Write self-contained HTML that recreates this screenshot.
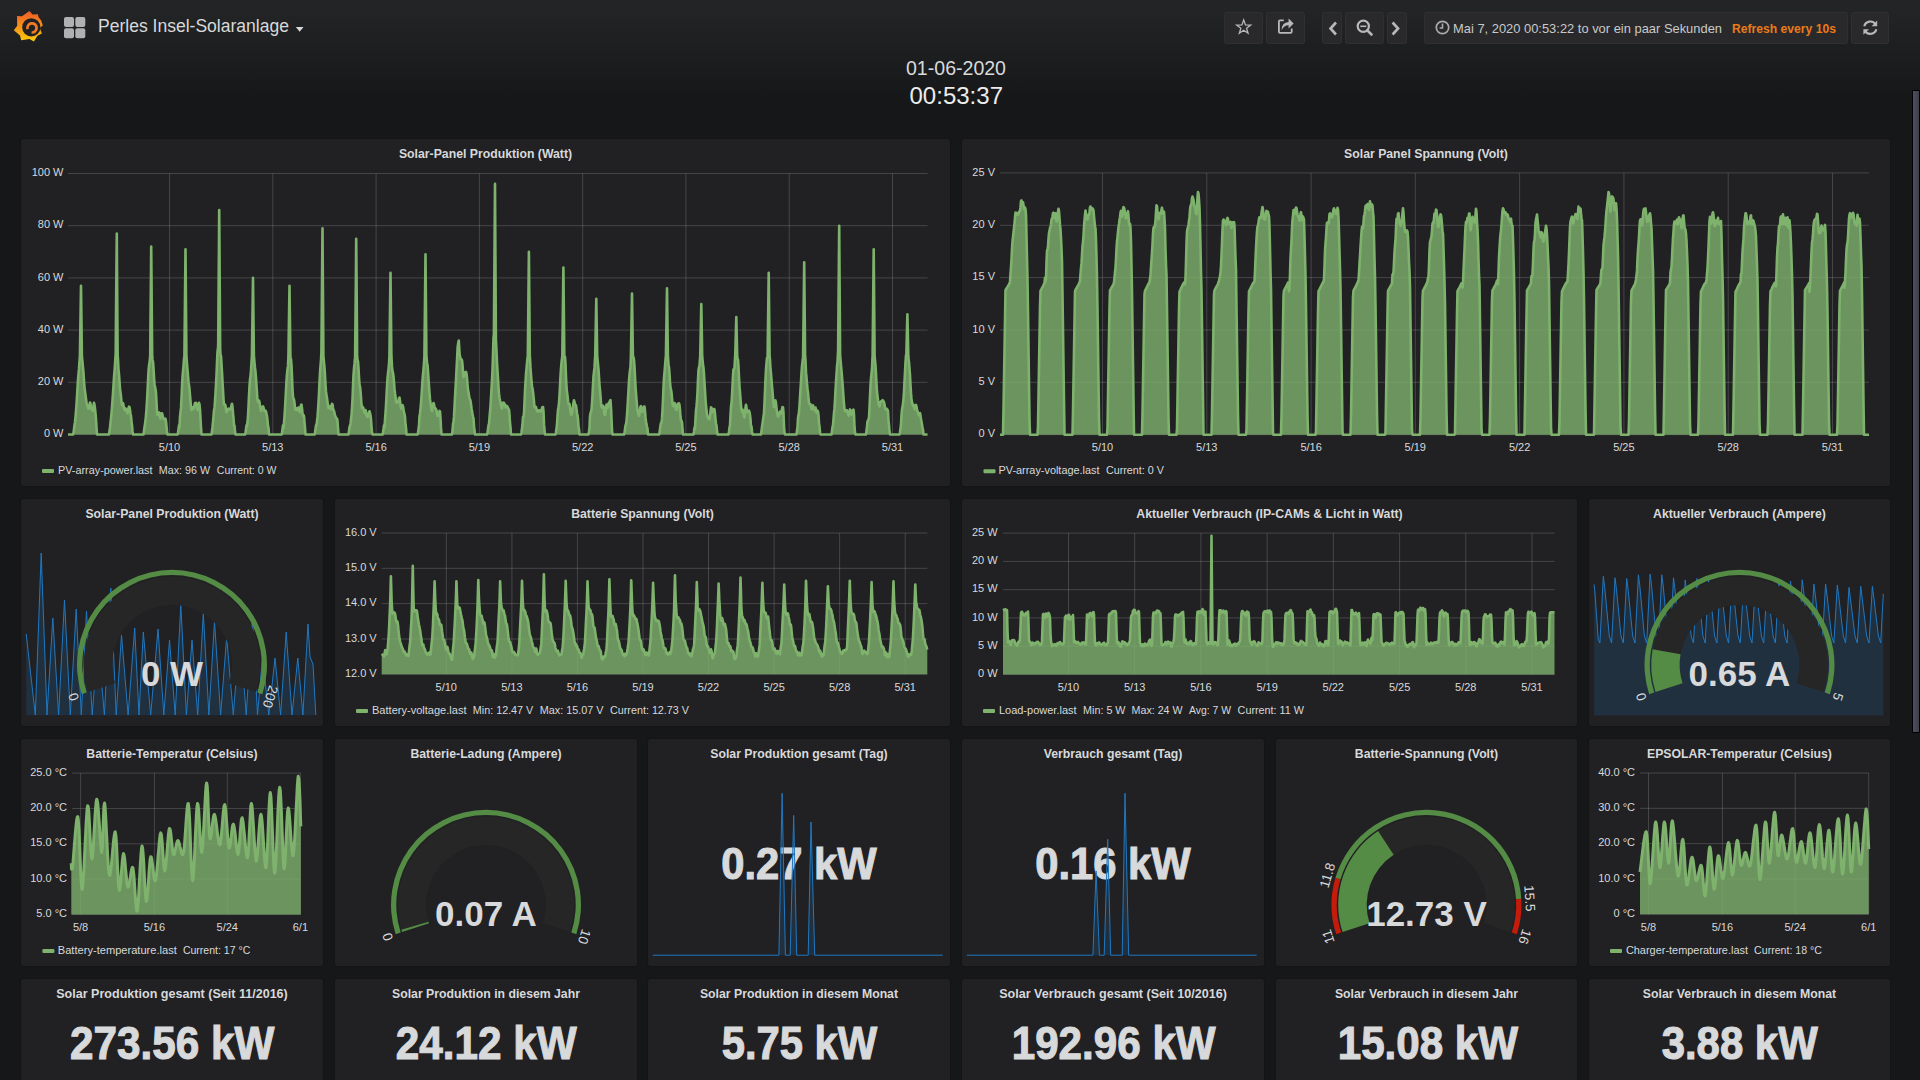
<!DOCTYPE html><html><head><meta charset="utf-8"><style>html,body{margin:0;padding:0}
body{width:1920px;height:1080px;overflow:hidden;position:relative;background:linear-gradient(180deg,#222426 10px,#161719 100px);font-family:"Liberation Sans",sans-serif;color:#d8d9da}
.p{position:absolute;box-sizing:border-box;background:#212124;border:1px solid #141414;border-radius:3px}
.ov{position:absolute;left:0;top:0}
.g{stroke:rgba(200,200,200,0.22);stroke-width:1}
.yl{fill:#d8d9da;font-size:11px;text-anchor:end;font-family:"Liberation Sans",sans-serif}
.xl{fill:#d8d9da;font-size:11px;text-anchor:middle;font-family:"Liberation Sans",sans-serif}
.lg{fill:#d8d9da;font-size:11px;font-family:"Liberation Sans",sans-serif}
.gl{fill:#d8d9da;font-size:13.5px;text-anchor:middle;dominant-baseline:central;font-family:"Liberation Sans",sans-serif}
.gv{fill:#d8d9da;font-size:35px;font-weight:bold;text-anchor:middle;font-family:"Liberation Sans",sans-serif}
.bv{fill:#d8d9da;stroke:#d8d9da;stroke-width:1.1px;font-weight:bold;font-family:"Liberation Sans",sans-serif}
.tt{fill:#d8d9da;font-size:12.25px;font-weight:bold;text-anchor:middle;font-family:"Liberation Sans",sans-serif}
</style></head><body><div class="p" style="left:20px;top:138px;width:931px;height:349px"></div>
<div class="p" style="left:961px;top:138px;width:930px;height:349px"></div>
<div class="p" style="left:20px;top:498px;width:304px;height:229px"></div>
<div class="p" style="left:334px;top:498px;width:617px;height:229px"></div>
<div class="p" style="left:961px;top:498px;width:617px;height:229px"></div>
<div class="p" style="left:1588px;top:498px;width:303px;height:229px"></div>
<div class="p" style="left:20px;top:738px;width:304px;height:229px"></div>
<div class="p" style="left:334px;top:738px;width:304px;height:229px"></div>
<div class="p" style="left:647px;top:738px;width:304px;height:229px"></div>
<div class="p" style="left:961px;top:738px;width:304px;height:229px"></div>
<div class="p" style="left:1275px;top:738px;width:303px;height:229px"></div>
<div class="p" style="left:1588px;top:738px;width:303px;height:229px"></div>
<div class="p" style="left:20px;top:978px;width:304px;height:229px"></div>
<div class="p" style="left:334px;top:978px;width:304px;height:229px"></div>
<div class="p" style="left:647px;top:978px;width:304px;height:229px"></div>
<div class="p" style="left:961px;top:978px;width:304px;height:229px"></div>
<div class="p" style="left:1275px;top:978px;width:303px;height:229px"></div>
<div class="p" style="left:1588px;top:978px;width:303px;height:229px"></div>
<svg class="ov" width="1920" height="1080" viewBox="0 0 1920 1080"><line x1="68" y1="173.5" x2="927.6" y2="173.5" class="g"/><line x1="68" y1="225.7" x2="927.6" y2="225.7" class="g"/><line x1="68" y1="277.9" x2="927.6" y2="277.9" class="g"/><line x1="68" y1="330.1" x2="927.6" y2="330.1" class="g"/><line x1="68" y1="382.3" x2="927.6" y2="382.3" class="g"/><line x1="68" y1="434.5" x2="927.6" y2="434.5" class="g"/><line x1="169.5" y1="173.5" x2="169.5" y2="434.5" class="g"/><line x1="272.8" y1="173.5" x2="272.8" y2="434.5" class="g"/><line x1="376.1" y1="173.5" x2="376.1" y2="434.5" class="g"/><line x1="479.4" y1="173.5" x2="479.4" y2="434.5" class="g"/><line x1="582.7" y1="173.5" x2="582.7" y2="434.5" class="g"/><line x1="685.9" y1="173.5" x2="685.9" y2="434.5" class="g"/><line x1="789.2" y1="173.5" x2="789.2" y2="434.5" class="g"/><line x1="892.5" y1="173.5" x2="892.5" y2="434.5" class="g"/><text x="63.5" y="176.1" class="yl">100 W</text><text x="63.5" y="228.3" class="yl">80 W</text><text x="63.5" y="280.5" class="yl">60 W</text><text x="63.5" y="332.7" class="yl">40 W</text><text x="63.5" y="384.9" class="yl">20 W</text><text x="63.5" y="437.1" class="yl">0 W</text><text x="169.5" y="451.3" class="xl">5/10</text><text x="272.8" y="451.3" class="xl">5/13</text><text x="376.1" y="451.3" class="xl">5/16</text><text x="479.4" y="451.3" class="xl">5/19</text><text x="582.7" y="451.3" class="xl">5/22</text><text x="685.9" y="451.3" class="xl">5/25</text><text x="789.2" y="451.3" class="xl">5/28</text><text x="892.5" y="451.3" class="xl">5/31</text><path d="M68 434.5 L68.5 434.5 L69 434.5 L69.5 434.5 L70 434.5 L70.5 434.5 L71 434.5 L71.5 434.5 L72 434.5 L72.5 434.5 L73 434.5 L73.5 433 L74 429.1 L74.5 425.3 L75 422.2 L75.5 416.8 L76 411.2 L76.5 404.3 L77 396.3 L77.5 388.2 L78 379.6 L78.5 374.2 L79 368.7 L79.5 361.2 L79.9 356.2 L80 349.8 L80.5 317.8 L81 285.7 L81.5 324.9 L81.9 356.2 L82 357.2 L82.5 362.2 L83 367.5 L83.5 373.2 L84 380.8 L84.5 387.3 L85 391.3 L85.5 395 L86 398.8 L86.5 402.5 L87 404.8 L87.5 406 L88 407.4 L88.5 408.7 L89 407.9 L89.5 405.1 L90 402.6 L90.5 403.8 L91 407.3 L91.5 409.1 L92 409.9 L92.5 410.9 L93 409.6 L93.5 405.7 L94 402.8 L94.5 404.8 L95 408.7 L95.5 413.5 L96 419.2 L96.5 427.3 L97 434.5 L97.5 434.5 L98 434.5 L98.5 434.5 L99 434.5 L99.5 434.5 L100 434.5 L100.5 434.5 L101 434.5 L101.5 434.5 L102 434.5 L102.5 434.5 L103 434.5 L103.5 434.5 L104 434.5 L104.5 434.5 L105 434.5 L105.5 434.5 L106 434.5 L106.5 434.5 L107 434.5 L107.5 434.5 L108 434.5 L108.5 434.5 L109 434.5 L109.5 431 L110 427.2 L110.5 422.6 L111 418.3 L111.5 413 L112 407.3 L112.5 400.1 L113 393.3 L113.5 385.3 L114 377.5 L114.5 371.4 L115 364.5 L115.5 356 L115.7 354.1 L116 315.7 L116.5 260.9 L116.8 233.5 L117 267.6 L117.5 335.8 L117.7 356.2 L118 359.7 L118.5 369.8 L119 374.3 L119.5 381.6 L120 388.6 L120.5 392.3 L121 396.4 L121.5 401.9 L122 405.1 L122.5 404.4 L123 403.1 L123.5 405.4 L124 408.4 L124.5 409.8 L125 409.4 L125.5 408.4 L126 409.1 L126.5 410.9 L127 412.7 L127.5 413.3 L128 411.5 L128.5 408.4 L129 406.7 L129.5 407.1 L130 409.9 L130.5 413.7 L131 416.1 L131.5 421.6 L132 425.2 L132.5 431.4 L133 434.5 L133.5 434.5 L134 434.5 L134.5 434.5 L135 434.5 L135.5 434.5 L136 434.5 L136.5 434.5 L137 434.5 L137.5 434.5 L138 434.5 L138.5 434.5 L139 434.5 L139.5 434.5 L140 434.5 L140.5 434.5 L141 434.5 L141.5 434.5 L142 434.5 L142.5 434.5 L143 434.5 L143.5 434.5 L144 431 L144.5 427.2 L145 424.1 L145.5 420.5 L146 415 L146.5 409.1 L147 400.7 L147.5 391.6 L148 381 L148.5 371.2 L149 365.7 L149.5 362.6 L150 357.9 L150.2 356.2 L150.5 321.3 L151 271.5 L151.2 246.6 L151.5 277 L152 337.9 L152.2 356.2 L152.5 359.7 L153 361.7 L153.5 368.1 L154 377.1 L154.5 384.2 L155 386.9 L155.5 389.2 L156 393.2 L156.5 402.2 L157 412.1 L157.5 414.9 L158 414 L158.5 412.9 L159 412.4 L159.5 413.9 L160 417.6 L160.5 418.7 L161 415.7 L161.5 413.3 L162 413.2 L162.5 414.9 L163 417.3 L163.5 418.7 L164 418.8 L164.5 419.6 L165 420 L165.5 418.6 L166 421.7 L166.5 426.6 L167 431.9 L167.5 434.5 L168 434.5 L168.5 434.5 L169 434.5 L169.5 434.5 L170 434.5 L170.5 434.5 L171 434.5 L171.5 434.5 L172 434.5 L172.5 434.5 L173 434.5 L173.5 434.5 L174 434.5 L174.5 434.5 L175 434.5 L175.5 434.5 L176 434.5 L176.5 434.5 L177 434.5 L177.5 434.5 L178 433 L178.5 429.1 L179 425.3 L179.5 427.5 L180 417 L180.5 412.2 L181 407.9 L181.5 398.3 L182 386.8 L182.5 377.1 L183 371.4 L183.5 365.9 L184 359 L184.4 356.2 L184.5 346.5 L185 297.8 L185.5 249.2 L186 308.6 L186.4 356.2 L186.5 357.2 L187 364.2 L187.5 369.8 L188 376.2 L188.5 382.2 L189 385.2 L189.5 388.8 L190 395.4 L190.5 401.4 L191 406.9 L191.5 410.1 L192 409.1 L192.5 407.3 L193 407.7 L193.5 408.8 L194 408 L194.5 405.3 L195 403.1 L195.5 402.8 L196 403 L196.5 403.9 L197 407 L197.5 410 L198 408.9 L198.5 404.5 L199 402.8 L199.5 404.3 L200 409.6 L200.5 418.4 L201 427.6 L201.5 434.5 L202 434.5 L202.5 434.5 L203 434.5 L203.5 434.5 L204 434.5 L204.5 434.5 L205 434.5 L205.5 434.5 L206 434.5 L206.5 434.5 L207 434.5 L207.5 434.5 L208 434.5 L208.5 434.5 L209 434.5 L209.5 434.5 L210 434.5 L210.5 434.5 L211 434.5 L211.5 434.5 L212 431 L212.5 427.2 L213 422.4 L213.5 416 L214 410.5 L214.5 407.7 L215 401.4 L215.5 393 L216 384.5 L216.5 374.8 L217 362.7 L217.5 351.9 L218 347.4 L218.2 344.7 L218.5 301.9 L219 240.6 L219.2 210 L219.5 248.7 L220 326 L220.2 349.2 L220.5 354.6 L221 356.1 L221.5 364.1 L222 372.3 L222.5 381.5 L223 390.4 L223.5 399.3 L224 404.6 L224.5 405 L225 404.4 L225.5 405.7 L226 410 L226.5 412.3 L227 411.5 L227.5 409.9 L228 408.9 L228.5 408.6 L229 408.8 L229.5 409.5 L230 409.6 L230.5 409.1 L231 407.7 L231.5 405.2 L232 403.8 L232.5 406.9 L233 413 L233.5 418.1 L234 425.5 L234.5 425.5 L235 431.5 L235.5 434.5 L236 434.5 L236.5 434.5 L237 434.5 L237.5 434.5 L238 434.5 L238.5 434.5 L239 434.5 L239.5 434.5 L240 434.5 L240.5 434.5 L241 434.5 L241.5 434.5 L242 434.5 L242.5 434.5 L243 434.5 L243.5 434.5 L244 434.5 L244.5 434.5 L245 434.5 L245.5 433 L246 429.1 L246.5 425.3 L247 426 L247.5 422.5 L248 416.2 L248.5 406.4 L249 395.5 L249.5 386.4 L250 379.5 L250.5 376.1 L251 370.4 L251.5 362.2 L251.9 356.2 L252 349.1 L252.5 313.5 L253 277.9 L253.5 321.4 L253.9 356.2 L254 357.2 L254.5 362.8 L255 367.9 L255.5 372 L256 377.8 L256.5 385.4 L257 393.3 L257.5 399.9 L258 401.8 L258.5 400.8 L259 400.5 L259.5 402.4 L260 405.8 L260.5 409.3 L261 410.9 L261.5 409.5 L262 407.7 L262.5 406.9 L263 406.3 L263.5 407.5 L264 410.1 L264.5 411.2 L265 410.9 L265.5 410.7 L266 411.5 L266.5 413.9 L267 416.1 L267.5 420.4 L268 426.2 L268.5 427.9 L269 434.5 L269.5 434.5 L270 434.5 L270.5 434.5 L271 434.5 L271.5 434.5 L272 434.5 L272.5 434.5 L273 434.5 L273.5 434.5 L274 434.5 L274.5 434.5 L275 434.5 L275.5 434.5 L276 434.5 L276.5 434.5 L277 434.5 L277.5 434.5 L278 434.5 L278.5 434.5 L279 434.5 L279.5 434.5 L280 434.5 L280.5 434.5 L281 434.5 L281.5 434.5 L282 433 L282.5 429.1 L283 425.3 L283.5 428.1 L284 422.8 L284.5 416.2 L285 408.3 L285.5 399.3 L286 390 L286.5 380.3 L287 373.8 L287.5 369.2 L288 365.9 L288.4 356.2 L288.5 349.8 L289 317.8 L289.5 285.7 L290 324.9 L290.4 356.2 L290.5 357.2 L291 359.3 L291.5 365.3 L292 376.9 L292.5 389.5 L293 396.8 L293.5 398.6 L294 399.6 L294.5 402.8 L295 407.8 L295.5 409.7 L296 408.4 L296.5 408.3 L297 410.1 L297.5 409.9 L298 408.1 L298.5 407.5 L299 409.1 L299.5 411.4 L300 412 L300.5 409 L301 404.9 L301.5 404.6 L302 408.5 L302.5 412.9 L303 415.7 L303.5 415.1 L304 416.2 L304.5 422.3 L305 427.6 L305.5 434.5 L306 434.5 L306.5 434.5 L307 434.5 L307.5 434.5 L308 434.5 L308.5 434.5 L309 434.5 L309.5 434.5 L310 434.5 L310.5 434.5 L311 434.5 L311.5 434.5 L312 434.5 L312.5 434.5 L313 434.5 L313.5 434.5 L314 434.5 L314.5 434.5 L315 433 L315.5 429.1 L316 425.3 L316.5 425.5 L317 421.4 L317.5 416.9 L318 410.6 L318.5 402.4 L319 393.4 L319.5 382.3 L320 372.9 L320.5 365.9 L321 360.1 L321.4 352 L321.5 340.8 L322 284.5 L322.5 228.3 L323 299.3 L323.4 356.1 L323.5 357.2 L324 362.6 L324.5 367.9 L325 375.5 L325.5 384.6 L326 391.9 L326.5 395.1 L327 397.9 L327.5 401.8 L328 406.2 L328.5 408.2 L329 407.7 L329.5 406.2 L330 406.4 L330.5 408.5 L331 409.4 L331.5 406.7 L332 403.8 L332.5 404.3 L333 407.8 L333.5 410.2 L334 410.9 L334.5 413.1 L335 415.7 L335.5 416.3 L336 418 L336.5 418.6 L337 418.5 L337.5 421.2 L338 428.3 L338.5 434.5 L339 434.5 L339.5 434.5 L340 434.5 L340.5 434.5 L341 434.5 L341.5 434.5 L342 434.5 L342.5 434.5 L343 434.5 L343.5 434.5 L344 434.5 L344.5 434.5 L345 434.5 L345.5 434.5 L346 434.5 L346.5 434.5 L347 434.5 L347.5 434.5 L348 434.5 L348.5 434.5 L349 431 L349.5 427.2 L350 425.8 L350.5 423.7 L351 419.4 L351.5 414.9 L352 408.2 L352.5 399.3 L353 386.8 L353.5 374.9 L354 368.5 L354.5 363.9 L355 357.9 L355.1 356.2 L355.5 318.8 L356 265.4 L356.2 238.8 L356.5 271.4 L357 336.6 L357.1 356.2 L357.5 359.7 L358 361.5 L358.5 368.1 L359 377.4 L359.5 384.5 L360 386.6 L360.5 390.6 L361 397.7 L361.5 405 L362 408.2 L362.5 407 L363 407.2 L363.5 409 L364 411.8 L364.5 412.9 L365 411.4 L365.5 410 L366 411.7 L366.5 415.4 L367 416.7 L367.5 416.3 L368 416.6 L368.5 415.7 L369 412.5 L369.5 411.3 L370 413.2 L370.5 415.2 L371 419.5 L371.5 426.8 L372 431.9 L372.5 434.5 L373 434.5 L373.5 434.5 L374 434.5 L374.5 434.5 L375 434.5 L375.5 434.5 L376 434.5 L376.5 434.5 L377 434.5 L377.5 434.5 L378 434.5 L378.5 434.5 L379 434.5 L379.5 434.5 L380 434.5 L380.5 434.5 L381 434.5 L381.5 434.5 L382 434.5 L382.5 434.5 L383 433 L383.5 429.1 L384 425.3 L384.5 427.6 L385 419.8 L385.5 413.2 L386 405.6 L386.5 395.4 L387 386.2 L387.5 378.2 L388 373.3 L388.5 369.2 L389 364.1 L389.4 356.2 L389.5 348.6 L390 310.6 L390.5 272.7 L391 319.1 L391.4 356.2 L391.5 357.2 L392 366.9 L392.5 371.2 L393 372.9 L393.5 376.1 L394 382.6 L394.5 388.9 L395 393.2 L395.5 396.8 L396 401.1 L396.5 402.7 L397 401.7 L397.5 401.3 L398 401.9 L398.5 401 L399 398.2 L399.5 397.6 L400 400.7 L400.5 405.6 L401 408.7 L401.5 408.1 L402 406.2 L402.5 405.2 L403 406.3 L403.5 409.4 L404 412.8 L404.5 413.9 L405 417.1 L405.5 424.3 L406 427.6 L406.5 434.5 L407 434.5 L407.5 434.5 L408 434.5 L408.5 434.5 L409 434.5 L409.5 434.5 L410 434.5 L410.5 434.5 L411 434.5 L411.5 434.5 L412 434.5 L412.5 434.5 L413 434.5 L413.5 434.5 L414 434.5 L414.5 434.5 L415 434.5 L415.5 434.5 L416 434.5 L416.5 434.5 L417 434.5 L417.5 434.5 L418 433 L418.5 429.1 L419 425.3 L419.5 416.3 L420 413.4 L420.5 408.6 L421 403.2 L421.5 396.2 L422 388.4 L422.5 380.1 L423 374.4 L423.5 369.4 L424 363.2 L424.4 356.2 L424.5 346.9 L425 300.7 L425.5 254.4 L426 311 L426.4 356.2 L426.5 357.2 L427 362.4 L427.5 365.2 L428 371.1 L428.5 379 L429 386.3 L429.5 393.1 L430 399.2 L430.5 403 L431 406.7 L431.5 410.1 L432 411 L432.5 408.3 L433 404.8 L433.5 403 L434 404.4 L434.5 407 L435 408 L435.5 408.5 L436 409.2 L436.5 410.5 L437 413.5 L437.5 416 L438 416 L438.5 414.7 L439 413.3 L439.5 410.9 L440 411.4 L440.5 418.1 L441 427.9 L441.5 434.5 L442 434.5 L442.5 434.5 L443 434.5 L443.5 434.5 L444 434.5 L444.5 434.5 L445 434.5 L445.5 434.5 L446 434.5 L446.5 434.5 L447 434.5 L447.5 434.5 L448 434.5 L448.5 434.5 L449 434.5 L449.5 434.5 L450 434.5 L450.5 434.5 L451 434.5 L451.5 434.5 L452 434.5 L452.5 431 L453 424.1 L453.5 422.2 L454 416.4 L454.5 406.8 L455 397.2 L455.5 388.7 L456 379.7 L456.5 369.9 L457 360.4 L457.5 350.3 L457.6 347.6 L458 344.5 L458.5 341.8 L458.8 340.5 L459 344.5 L459.5 352.3 L459.6 354.6 L460 355.9 L460.5 359 L461 358.8 L461.5 359.4 L462 360.3 L462.5 364.6 L463 372.1 L463.5 377.1 L464 376.1 L464.5 372.8 L465 372.5 L465.5 372.2 L466 371.9 L466.5 373.6 L467 378 L467.5 384.9 L468 389.8 L468.5 392.2 L469 395.6 L469.5 398.4 L470 399.5 L470.5 400.7 L471 404.2 L471.5 408.2 L472 411.2 L472.5 414 L473 416.9 L473.5 418.4 L474 426.2 L474.5 430.1 L475 434.5 L475.5 434.5 L476 434.5 L476.5 434.5 L477 434.5 L477.5 434.5 L478 434.5 L478.5 434.5 L479 434.5 L479.5 434.5 L480 434.5 L480.5 434.5 L481 434.5 L481.5 434.5 L482 434.5 L482.5 434.5 L483 434.5 L483.5 434.5 L484 434.5 L484.5 434.5 L485 434.5 L485.5 434.5 L486 434.5 L486.5 434.5 L487 434.5 L487.5 433 L488 429.1 L488.5 425.3 L489 424 L489.5 417.6 L490 411.8 L490.5 406 L491 397.5 L491.5 388.7 L492 380.7 L492.5 369.5 L493 354.9 L493.5 337.6 L493.9 334.3 L494 320.6 L494.5 252.3 L495 183.9 L495.5 270.2 L495.9 339.3 L496 341.6 L496.5 351.6 L497 362.6 L497.5 370.7 L498 378.7 L498.5 387.4 L499 393.7 L499.5 397.9 L500 400.3 L500.5 402.3 L501 404.9 L501.5 408.1 L502 408.6 L502.5 405.4 L503 402.8 L503.5 402.6 L504 403 L504.5 403.9 L505 406.1 L505.5 407.4 L506 406.4 L506.5 405.7 L507 406.2 L507.5 406.8 L508 407.9 L508.5 409.2 L509 409.6 L509.5 414.4 L510 423 L510.5 427.4 L511 434.5 L511.5 434.5 L512 434.5 L512.5 434.5 L513 434.5 L513.5 434.5 L514 434.5 L514.5 434.5 L515 434.5 L515.5 434.5 L516 434.5 L516.5 434.5 L517 434.5 L517.5 434.5 L518 434.5 L518.5 434.5 L519 434.5 L519.5 434.5 L520 434.5 L520.5 434.5 L521 434.5 L521.5 432.2 L522 428.4 L522.5 424.5 L523 417.1 L523.5 417.3 L524 413.2 L524.5 402.4 L525 390.9 L525.5 382.1 L526 374.2 L526.5 368.6 L527 362.8 L527.5 358 L527.8 356.2 L528 337.2 L528.5 289.8 L528.9 251.8 L529 263.4 L529.5 321.4 L529.8 356.2 L530 358.2 L530.5 367.9 L531 374.6 L531.5 381.5 L532 386.2 L532.5 388.5 L533 391.6 L533.5 396.4 L534 401.7 L534.5 407.2 L535 407.5 L535.5 406.7 L536 407 L536.5 409.2 L537 410.9 L537.5 411.5 L538 411.6 L538.5 411.2 L539 410.2 L539.5 410.2 L540 411.2 L540.5 411.6 L541 410.9 L541.5 409.7 L542 408.1 L542.5 407 L543 407 L543.5 411.4 L544 424.4 L544.5 430 L545 434.5 L545.5 434.5 L546 434.5 L546.5 434.5 L547 434.5 L547.5 434.5 L548 434.5 L548.5 434.5 L549 434.5 L549.5 434.5 L550 434.5 L550.5 434.5 L551 434.5 L551.5 434.5 L552 434.5 L552.5 434.5 L553 434.5 L553.5 434.5 L554 434.5 L554.5 434.5 L555 434.5 L555.5 434.5 L556 432.2 L556.5 428.4 L557 424.5 L557.5 416.2 L558 409.9 L558.5 406.9 L559 402.8 L559.5 395.4 L560 385.8 L560.5 375.7 L561 368.6 L561.5 362.5 L562 358.5 L562.3 356.2 L562.5 340.1 L563 299.7 L563.4 267.5 L563.5 277.3 L564 326.6 L564.3 356.2 L564.5 358.2 L565 356.7 L565.5 363.8 L566 376.8 L566.5 387.5 L567 392.3 L567.5 395.8 L568 401.2 L568.5 403.7 L569 403.7 L569.5 403.9 L570 407.6 L570.5 411.9 L571 414.3 L571.5 414.7 L572 413 L572.5 409.6 L573 406.1 L573.5 402.5 L574 400.3 L574.5 401.9 L575 404.6 L575.5 404.7 L576 405.5 L576.5 409.1 L577 413.2 L577.5 415.2 L578 419.3 L578.5 426.5 L579 429.1 L579.5 434.5 L580 434.5 L580.5 434.5 L581 434.5 L581.5 434.5 L582 434.5 L582.5 434.5 L583 434.5 L583.5 434.5 L584 434.5 L584.5 434.5 L585 434.5 L585.5 434.5 L586 434.5 L586.5 434.5 L587 434.5 L587.5 434.5 L588 434.5 L588.5 434.5 L589 431.4 L589.5 427.6 L590 416.2 L590.5 412.9 L591 411.7 L591.5 409.9 L592 403.5 L592.5 394.8 L593 385.1 L593.5 376.3 L594 371.7 L594.5 367.9 L595 358.5 L595.2 356.2 L595.5 340.5 L596 314.4 L596.3 298.8 L596.5 311.5 L597 343.4 L597.2 356.2 L597.5 359.2 L598 364.3 L598.5 369.3 L599 377.4 L599.5 385.1 L600 390 L600.5 396 L601 403.2 L601.5 406.8 L602 407.7 L602.5 406.7 L603 405.7 L603.5 406.4 L604 410.3 L604.5 414.2 L605 415.1 L605.5 412.7 L606 408.1 L606.5 404.6 L607 405.5 L607.5 408 L608 406.8 L608.5 403.6 L609 402.5 L609.5 402.4 L610 400.8 L610.5 400.1 L611 407.7 L611.5 418.2 L612 430.3 L612.5 434.5 L613 434.5 L613.5 434.5 L614 434.5 L614.5 434.5 L615 434.5 L615.5 434.5 L616 434.5 L616.5 434.5 L617 434.5 L617.5 434.5 L618 434.5 L618.5 434.5 L619 434.5 L619.5 434.5 L620 434.5 L620.5 434.5 L621 434.5 L621.5 434.5 L622 434.5 L622.5 434.5 L623 434.5 L623.5 434.5 L624 434.5 L624.5 433 L625 429.1 L625.5 425.3 L626 424.6 L626.5 420.4 L627 415.1 L627.5 407.3 L628 398.6 L628.5 390.2 L629 380.8 L629.5 374.4 L630 370.4 L630.5 366.4 L630.9 356.2 L631 350.5 L631.5 322 L632 293.6 L632.5 328.4 L632.9 356.2 L633 357.2 L633.5 357.3 L634 360.2 L634.5 366.6 L635 376.6 L635.5 386.5 L636 393.3 L636.5 399.5 L637 405.6 L637.5 410.6 L638 412.4 L638.5 414.4 L639 415.8 L639.5 414.2 L640 410 L640.5 406.5 L641 406.2 L641.5 408.6 L642 411.1 L642.5 411.8 L643 410.7 L643.5 408.8 L644 406.5 L644.5 406.5 L645 410.8 L645.5 417.4 L646 421.5 L646.5 424.3 L647 426.8 L647.5 428.7 L648 434.5 L648.5 434.5 L649 434.5 L649.5 434.5 L650 434.5 L650.5 434.5 L651 434.5 L651.5 434.5 L652 434.5 L652.5 434.5 L653 434.5 L653.5 434.5 L654 434.5 L654.5 434.5 L655 434.5 L655.5 434.5 L656 434.5 L656.5 434.5 L657 434.5 L657.5 434.5 L658 434.5 L658.5 434.5 L659 434.5 L659.5 433 L660 429.1 L660.5 425.3 L661 422.9 L661.5 422.7 L662 418.4 L662.5 410.1 L663 399.1 L663.5 387.4 L664 377.5 L664.5 372.3 L665 366.4 L665.5 359.5 L665.9 356.2 L666 350 L666.5 319.2 L667 288.3 L667.5 326 L667.9 356.2 L668 357.2 L668.5 364.2 L669 367.6 L669.5 373.5 L670 381.9 L670.5 387.7 L671 389.6 L671.5 392.5 L672 398 L672.5 403.7 L673 406 L673.5 406.2 L674 404.7 L674.5 403.1 L675 403.8 L675.5 406.8 L676 409.8 L676.5 410 L677 407.6 L677.5 405 L678 403.6 L678.5 403.4 L679 403.3 L679.5 405.1 L680 410.1 L680.5 417 L681 420.2 L681.5 420.8 L682 422.7 L682.5 428.6 L683 434.5 L683.5 434.5 L684 434.5 L684.5 434.5 L685 434.5 L685.5 434.5 L686 434.5 L686.5 434.5 L687 434.5 L687.5 434.5 L688 434.5 L688.5 434.5 L689 434.5 L689.5 434.5 L690 434.5 L690.5 434.5 L691 434.5 L691.5 434.5 L692 434.5 L692.5 434.5 L693 434.5 L693.5 434.5 L694 431.4 L694.5 427.6 L695 428.6 L695.5 418.9 L696 410.4 L696.5 406.2 L697 400.7 L697.5 391.8 L698 379.7 L698.5 370.1 L699 367.4 L699.5 365.5 L700 358.5 L700.2 356.2 L700.5 342 L701 318.2 L701.3 304 L701.5 315.6 L702 344.6 L702.2 356.2 L702.5 359.2 L703 365.1 L703.5 367.7 L704 374.3 L704.5 383.1 L705 391.2 L705.5 399.3 L706 405.6 L706.5 410.1 L707 414.6 L707.5 416.3 L708 417.2 L708.5 417.9 L709 419.1 L709.5 419.3 L710 416.6 L710.5 411.6 L711 407.4 L711.5 407.6 L712 410.9 L712.5 412.1 L713 410.7 L713.5 409.9 L714 409 L714.5 409.5 L715 414 L715.5 419.1 L716 424.2 L716.5 425.3 L717 431 L717.5 434.5 L718 434.5 L718.5 434.5 L719 434.5 L719.5 434.5 L720 434.5 L720.5 434.5 L721 434.5 L721.5 434.5 L722 434.5 L722.5 434.5 L723 434.5 L723.5 434.5 L724 434.5 L724.5 434.5 L725 434.5 L725.5 434.5 L726 434.5 L726.5 434.5 L727 434.5 L727.5 434.5 L728 434.5 L728.5 434.5 L729 431.4 L729.5 427.6 L730 425.4 L730.5 415 L731 406.6 L731.5 402.8 L732 396.1 L732.5 385.8 L733 375.4 L733.5 369.3 L734 368.8 L734.5 368 L735 358.5 L735.2 356.2 L735.5 345.5 L736 327.7 L736.3 317.1 L736.5 325.8 L737 347.5 L737.2 356.2 L737.5 359.2 L738 359.3 L738.5 366.8 L739 377.4 L739.5 386.5 L740 392.5 L740.5 399.1 L741 405.3 L741.5 410 L742 411.4 L742.5 409.6 L743 411.2 L743.5 414.1 L744 416.7 L744.5 417.5 L745 413.9 L745.5 407.5 L746 404.7 L746.5 407.6 L747 411.1 L747.5 412.1 L748 411.6 L748.5 410.9 L749 410.7 L749.5 411.9 L750 414.9 L750.5 419.2 L751 426.5 L751.5 426.5 L752 431.5 L752.5 434.5 L753 434.5 L753.5 434.5 L754 434.5 L754.5 434.5 L755 434.5 L755.5 434.5 L756 434.5 L756.5 434.5 L757 434.5 L757.5 434.5 L758 434.5 L758.5 434.5 L759 434.5 L759.5 434.5 L760 434.5 L760.5 434.5 L761 434.5 L761.5 430.7 L762 426.8 L762.5 423.6 L763 419.9 L763.5 416.5 L764 412.8 L764.5 402.8 L765 390.8 L765.5 379.1 L766 369.7 L766.5 362.9 L767 357.8 L767.5 357.4 L767.6 356.2 L768 325.8 L768.5 287.9 L768.7 272.7 L769 300.5 L769.5 346.9 L769.6 356.2 L770 360.2 L770.5 369 L771 373.7 L771.5 380 L772 386.2 L772.5 391.3 L773 398.4 L773.5 404.1 L774 407.2 L774.5 406.6 L775 402.4 L775.5 400.4 L776 403.2 L776.5 408.2 L777 412.3 L777.5 415.2 L778 416.6 L778.5 416.4 L779 414.7 L779.5 412.6 L780 411.5 L780.5 412.4 L781 413.4 L781.5 411.9 L782 408.9 L782.5 407.1 L783 407.3 L783.5 413.2 L784 426.8 L784.5 432.3 L785 434.5 L785.5 434.5 L786 434.5 L786.5 434.5 L787 434.5 L787.5 434.5 L788 434.5 L788.5 434.5 L789 434.5 L789.5 434.5 L790 434.5 L790.5 434.5 L791 434.5 L791.5 434.5 L792 434.5 L792.5 434.5 L793 434.5 L793.5 434.5 L794 434.5 L794.5 434.5 L795 434.5 L795.5 434.5 L796 434.5 L796.5 434.5 L797 430.7 L797.5 426.8 L798 418 L798.5 415.6 L799 411.6 L799.5 406 L800 397.1 L800.5 389.3 L801 381.7 L801.5 373.2 L802 366.2 L802.5 361.8 L803 357.4 L803.1 356.2 L803.5 322 L804 279.3 L804.2 262.2 L804.5 293.6 L805 345.8 L805.1 356.2 L805.5 360.2 L806 372.4 L806.5 377.6 L807 383.5 L807.5 388.9 L808 392.4 L808.5 398.5 L809 402.8 L809.5 403.9 L810 404.1 L810.5 404.2 L811 407 L811.5 409.3 L812 408.1 L812.5 405.5 L813 405.4 L813.5 407.6 L814 409.6 L814.5 410.2 L815 408.7 L815.5 407.5 L816 409.8 L816.5 412.8 L817 412.3 L817.5 410.7 L818 411.6 L818.5 415.1 L819 423.3 L819.5 426.4 L820 432.2 L820.5 434.5 L821 434.5 L821.5 434.5 L822 434.5 L822.5 434.5 L823 434.5 L823.5 434.5 L824 434.5 L824.5 434.5 L825 434.5 L825.5 434.5 L826 434.5 L826.5 434.5 L827 434.5 L827.5 434.5 L828 434.5 L828.5 434.5 L829 434.5 L829.5 434.5 L830 434.5 L830.5 434.5 L831 434.5 L831.5 434.5 L832 430.7 L832.5 426.8 L833 425.3 L833.5 419.1 L834 412.7 L834.5 408.4 L835 399.8 L835.5 390.3 L836 382 L836.5 374.2 L837 366.6 L837.5 361.4 L838 352.4 L838.1 351 L838.5 305.4 L839 248.5 L839.2 225.7 L839.5 268.9 L840 340.8 L840.1 355.2 L840.5 359.5 L841 365.3 L841.5 370.8 L842 376.9 L842.5 383.4 L843 389.9 L843.5 397.7 L844 404.2 L844.5 409.2 L845 410.8 L845.5 410.3 L846 411.2 L846.5 410.9 L847 410.2 L847.5 411.3 L848 413.7 L848.5 415.7 L849 415.3 L849.5 411.9 L850 409.4 L850.5 411.2 L851 414.2 L851.5 414.7 L852 413 L852.5 411.1 L853 409.9 L853.5 409.6 L854 414.9 L854.5 427.2 L855 432.4 L855.5 434.5 L856 434.5 L856.5 434.5 L857 434.5 L857.5 434.5 L858 434.5 L858.5 434.5 L859 434.5 L859.5 434.5 L860 434.5 L860.5 434.5 L861 434.5 L861.5 434.5 L862 434.5 L862.5 434.5 L863 434.5 L863.5 434.5 L864 434.5 L864.5 434.5 L865 434.5 L865.5 434.5 L866 434.5 L866.5 430.7 L867 426.8 L867.5 421.5 L868 420.4 L868.5 419.7 L869 417.3 L869.5 407.7 L870 396.3 L870.5 385.9 L871 378.1 L871.5 373.4 L872 368.7 L872.5 357.4 L872.6 356.2 L873 317.3 L873.5 268.6 L873.7 249.2 L874 284.9 L874.5 344.3 L874.6 356.2 L875 360.2 L875.5 365.3 L876 373.9 L876.5 384 L877 392 L877.5 396.2 L878 400.2 L878.5 403.5 L879 405.5 L879.5 406.5 L880 404.3 L880.5 402 L881 401.2 L881.5 401.2 L882 400.9 L882.5 400.2 L883 400.5 L883.5 401.4 L884 402.4 L884.5 404.5 L885 407.5 L885.5 409.3 L886 409 L886.5 408.6 L887 409.3 L887.5 409.7 L888 411.2 L888.5 420.6 L889 425 L889.5 431.8 L890 434.5 L890.5 434.5 L891 434.5 L891.5 434.5 L892 434.5 L892.5 434.5 L893 434.5 L893.5 434.5 L894 434.5 L894.5 434.5 L895 434.5 L895.5 434.5 L896 434.5 L896.5 434.5 L897 434.5 L897.5 434.5 L898 434.5 L898.5 434.5 L899 434.5 L899.5 434.5 L900 432.2 L900.5 428.4 L901 424.5 L901.5 414.8 L902 409.5 L902.5 407.1 L903 404 L903.5 398.8 L904 391.8 L904.5 381.6 L905 372 L905.5 362.5 L906 355 L906.3 356.2 L906.5 348.6 L907 329.6 L907.4 314.4 L907.5 319.1 L908 342.3 L908.3 356.2 L908.5 358.2 L909 362.7 L909.5 368.4 L910 375.4 L910.5 384.8 L911 393.4 L911.5 398.9 L912 402.4 L912.5 404.2 L913 405.7 L913.5 404.9 L914 407 L914.5 409.2 L915 408 L915.5 405.5 L916 404.9 L916.5 406.7 L917 409.7 L917.5 411.3 L918 412.3 L918.5 414.6 L919 415.3 L919.5 413.4 L920 413.1 L920.5 415.6 L921 419.4 L921.5 421.7 L922 424.5 L922.5 428.3 L923 429.7 L923.5 434.5 L924 434.5 L924.5 434.5 L925 434.5 L925.5 434.5 L926 434.5 L926.5 434.5 L927 434.5 L927.5 434.5 L927.5 434.5 L68 434.5 Z" fill="#7eb26d" fill-opacity="0.8"/><path d="M68 434.5 L68.5 434.5 L69 434.5 L69.5 434.5 L70 434.5 L70.5 434.5 L71 434.5 L71.5 434.5 L72 434.5 L72.5 434.5 L73 434.5 L73.5 433 L74 429.1 L74.5 425.3 L75 422.2 L75.5 416.8 L76 411.2 L76.5 404.3 L77 396.3 L77.5 388.2 L78 379.6 L78.5 374.2 L79 368.7 L79.5 361.2 L79.9 356.2 L80 349.8 L80.5 317.8 L81 285.7 L81.5 324.9 L81.9 356.2 L82 357.2 L82.5 362.2 L83 367.5 L83.5 373.2 L84 380.8 L84.5 387.3 L85 391.3 L85.5 395 L86 398.8 L86.5 402.5 L87 404.8 L87.5 406 L88 407.4 L88.5 408.7 L89 407.9 L89.5 405.1 L90 402.6 L90.5 403.8 L91 407.3 L91.5 409.1 L92 409.9 L92.5 410.9 L93 409.6 L93.5 405.7 L94 402.8 L94.5 404.8 L95 408.7 L95.5 413.5 L96 419.2 L96.5 427.3 L97 434.5 L97.5 434.5 L98 434.5 L98.5 434.5 L99 434.5 L99.5 434.5 L100 434.5 L100.5 434.5 L101 434.5 L101.5 434.5 L102 434.5 L102.5 434.5 L103 434.5 L103.5 434.5 L104 434.5 L104.5 434.5 L105 434.5 L105.5 434.5 L106 434.5 L106.5 434.5 L107 434.5 L107.5 434.5 L108 434.5 L108.5 434.5 L109 434.5 L109.5 431 L110 427.2 L110.5 422.6 L111 418.3 L111.5 413 L112 407.3 L112.5 400.1 L113 393.3 L113.5 385.3 L114 377.5 L114.5 371.4 L115 364.5 L115.5 356 L115.7 354.1 L116 315.7 L116.5 260.9 L116.8 233.5 L117 267.6 L117.5 335.8 L117.7 356.2 L118 359.7 L118.5 369.8 L119 374.3 L119.5 381.6 L120 388.6 L120.5 392.3 L121 396.4 L121.5 401.9 L122 405.1 L122.5 404.4 L123 403.1 L123.5 405.4 L124 408.4 L124.5 409.8 L125 409.4 L125.5 408.4 L126 409.1 L126.5 410.9 L127 412.7 L127.5 413.3 L128 411.5 L128.5 408.4 L129 406.7 L129.5 407.1 L130 409.9 L130.5 413.7 L131 416.1 L131.5 421.6 L132 425.2 L132.5 431.4 L133 434.5 L133.5 434.5 L134 434.5 L134.5 434.5 L135 434.5 L135.5 434.5 L136 434.5 L136.5 434.5 L137 434.5 L137.5 434.5 L138 434.5 L138.5 434.5 L139 434.5 L139.5 434.5 L140 434.5 L140.5 434.5 L141 434.5 L141.5 434.5 L142 434.5 L142.5 434.5 L143 434.5 L143.5 434.5 L144 431 L144.5 427.2 L145 424.1 L145.5 420.5 L146 415 L146.5 409.1 L147 400.7 L147.5 391.6 L148 381 L148.5 371.2 L149 365.7 L149.5 362.6 L150 357.9 L150.2 356.2 L150.5 321.3 L151 271.5 L151.2 246.6 L151.5 277 L152 337.9 L152.2 356.2 L152.5 359.7 L153 361.7 L153.5 368.1 L154 377.1 L154.5 384.2 L155 386.9 L155.5 389.2 L156 393.2 L156.5 402.2 L157 412.1 L157.5 414.9 L158 414 L158.5 412.9 L159 412.4 L159.5 413.9 L160 417.6 L160.5 418.7 L161 415.7 L161.5 413.3 L162 413.2 L162.5 414.9 L163 417.3 L163.5 418.7 L164 418.8 L164.5 419.6 L165 420 L165.5 418.6 L166 421.7 L166.5 426.6 L167 431.9 L167.5 434.5 L168 434.5 L168.5 434.5 L169 434.5 L169.5 434.5 L170 434.5 L170.5 434.5 L171 434.5 L171.5 434.5 L172 434.5 L172.5 434.5 L173 434.5 L173.5 434.5 L174 434.5 L174.5 434.5 L175 434.5 L175.5 434.5 L176 434.5 L176.5 434.5 L177 434.5 L177.5 434.5 L178 433 L178.5 429.1 L179 425.3 L179.5 427.5 L180 417 L180.5 412.2 L181 407.9 L181.5 398.3 L182 386.8 L182.5 377.1 L183 371.4 L183.5 365.9 L184 359 L184.4 356.2 L184.5 346.5 L185 297.8 L185.5 249.2 L186 308.6 L186.4 356.2 L186.5 357.2 L187 364.2 L187.5 369.8 L188 376.2 L188.5 382.2 L189 385.2 L189.5 388.8 L190 395.4 L190.5 401.4 L191 406.9 L191.5 410.1 L192 409.1 L192.5 407.3 L193 407.7 L193.5 408.8 L194 408 L194.5 405.3 L195 403.1 L195.5 402.8 L196 403 L196.5 403.9 L197 407 L197.5 410 L198 408.9 L198.5 404.5 L199 402.8 L199.5 404.3 L200 409.6 L200.5 418.4 L201 427.6 L201.5 434.5 L202 434.5 L202.5 434.5 L203 434.5 L203.5 434.5 L204 434.5 L204.5 434.5 L205 434.5 L205.5 434.5 L206 434.5 L206.5 434.5 L207 434.5 L207.5 434.5 L208 434.5 L208.5 434.5 L209 434.5 L209.5 434.5 L210 434.5 L210.5 434.5 L211 434.5 L211.5 434.5 L212 431 L212.5 427.2 L213 422.4 L213.5 416 L214 410.5 L214.5 407.7 L215 401.4 L215.5 393 L216 384.5 L216.5 374.8 L217 362.7 L217.5 351.9 L218 347.4 L218.2 344.7 L218.5 301.9 L219 240.6 L219.2 210 L219.5 248.7 L220 326 L220.2 349.2 L220.5 354.6 L221 356.1 L221.5 364.1 L222 372.3 L222.5 381.5 L223 390.4 L223.5 399.3 L224 404.6 L224.5 405 L225 404.4 L225.5 405.7 L226 410 L226.5 412.3 L227 411.5 L227.5 409.9 L228 408.9 L228.5 408.6 L229 408.8 L229.5 409.5 L230 409.6 L230.5 409.1 L231 407.7 L231.5 405.2 L232 403.8 L232.5 406.9 L233 413 L233.5 418.1 L234 425.5 L234.5 425.5 L235 431.5 L235.5 434.5 L236 434.5 L236.5 434.5 L237 434.5 L237.5 434.5 L238 434.5 L238.5 434.5 L239 434.5 L239.5 434.5 L240 434.5 L240.5 434.5 L241 434.5 L241.5 434.5 L242 434.5 L242.5 434.5 L243 434.5 L243.5 434.5 L244 434.5 L244.5 434.5 L245 434.5 L245.5 433 L246 429.1 L246.5 425.3 L247 426 L247.5 422.5 L248 416.2 L248.5 406.4 L249 395.5 L249.5 386.4 L250 379.5 L250.5 376.1 L251 370.4 L251.5 362.2 L251.9 356.2 L252 349.1 L252.5 313.5 L253 277.9 L253.5 321.4 L253.9 356.2 L254 357.2 L254.5 362.8 L255 367.9 L255.5 372 L256 377.8 L256.5 385.4 L257 393.3 L257.5 399.9 L258 401.8 L258.5 400.8 L259 400.5 L259.5 402.4 L260 405.8 L260.5 409.3 L261 410.9 L261.5 409.5 L262 407.7 L262.5 406.9 L263 406.3 L263.5 407.5 L264 410.1 L264.5 411.2 L265 410.9 L265.5 410.7 L266 411.5 L266.5 413.9 L267 416.1 L267.5 420.4 L268 426.2 L268.5 427.9 L269 434.5 L269.5 434.5 L270 434.5 L270.5 434.5 L271 434.5 L271.5 434.5 L272 434.5 L272.5 434.5 L273 434.5 L273.5 434.5 L274 434.5 L274.5 434.5 L275 434.5 L275.5 434.5 L276 434.5 L276.5 434.5 L277 434.5 L277.5 434.5 L278 434.5 L278.5 434.5 L279 434.5 L279.5 434.5 L280 434.5 L280.5 434.5 L281 434.5 L281.5 434.5 L282 433 L282.5 429.1 L283 425.3 L283.5 428.1 L284 422.8 L284.5 416.2 L285 408.3 L285.5 399.3 L286 390 L286.5 380.3 L287 373.8 L287.5 369.2 L288 365.9 L288.4 356.2 L288.5 349.8 L289 317.8 L289.5 285.7 L290 324.9 L290.4 356.2 L290.5 357.2 L291 359.3 L291.5 365.3 L292 376.9 L292.5 389.5 L293 396.8 L293.5 398.6 L294 399.6 L294.5 402.8 L295 407.8 L295.5 409.7 L296 408.4 L296.5 408.3 L297 410.1 L297.5 409.9 L298 408.1 L298.5 407.5 L299 409.1 L299.5 411.4 L300 412 L300.5 409 L301 404.9 L301.5 404.6 L302 408.5 L302.5 412.9 L303 415.7 L303.5 415.1 L304 416.2 L304.5 422.3 L305 427.6 L305.5 434.5 L306 434.5 L306.5 434.5 L307 434.5 L307.5 434.5 L308 434.5 L308.5 434.5 L309 434.5 L309.5 434.5 L310 434.5 L310.5 434.5 L311 434.5 L311.5 434.5 L312 434.5 L312.5 434.5 L313 434.5 L313.5 434.5 L314 434.5 L314.5 434.5 L315 433 L315.5 429.1 L316 425.3 L316.5 425.5 L317 421.4 L317.5 416.9 L318 410.6 L318.5 402.4 L319 393.4 L319.5 382.3 L320 372.9 L320.5 365.9 L321 360.1 L321.4 352 L321.5 340.8 L322 284.5 L322.5 228.3 L323 299.3 L323.4 356.1 L323.5 357.2 L324 362.6 L324.5 367.9 L325 375.5 L325.5 384.6 L326 391.9 L326.5 395.1 L327 397.9 L327.5 401.8 L328 406.2 L328.5 408.2 L329 407.7 L329.5 406.2 L330 406.4 L330.5 408.5 L331 409.4 L331.5 406.7 L332 403.8 L332.5 404.3 L333 407.8 L333.5 410.2 L334 410.9 L334.5 413.1 L335 415.7 L335.5 416.3 L336 418 L336.5 418.6 L337 418.5 L337.5 421.2 L338 428.3 L338.5 434.5 L339 434.5 L339.5 434.5 L340 434.5 L340.5 434.5 L341 434.5 L341.5 434.5 L342 434.5 L342.5 434.5 L343 434.5 L343.5 434.5 L344 434.5 L344.5 434.5 L345 434.5 L345.5 434.5 L346 434.5 L346.5 434.5 L347 434.5 L347.5 434.5 L348 434.5 L348.5 434.5 L349 431 L349.5 427.2 L350 425.8 L350.5 423.7 L351 419.4 L351.5 414.9 L352 408.2 L352.5 399.3 L353 386.8 L353.5 374.9 L354 368.5 L354.5 363.9 L355 357.9 L355.1 356.2 L355.5 318.8 L356 265.4 L356.2 238.8 L356.5 271.4 L357 336.6 L357.1 356.2 L357.5 359.7 L358 361.5 L358.5 368.1 L359 377.4 L359.5 384.5 L360 386.6 L360.5 390.6 L361 397.7 L361.5 405 L362 408.2 L362.5 407 L363 407.2 L363.5 409 L364 411.8 L364.5 412.9 L365 411.4 L365.5 410 L366 411.7 L366.5 415.4 L367 416.7 L367.5 416.3 L368 416.6 L368.5 415.7 L369 412.5 L369.5 411.3 L370 413.2 L370.5 415.2 L371 419.5 L371.5 426.8 L372 431.9 L372.5 434.5 L373 434.5 L373.5 434.5 L374 434.5 L374.5 434.5 L375 434.5 L375.5 434.5 L376 434.5 L376.5 434.5 L377 434.5 L377.5 434.5 L378 434.5 L378.5 434.5 L379 434.5 L379.5 434.5 L380 434.5 L380.5 434.5 L381 434.5 L381.5 434.5 L382 434.5 L382.5 434.5 L383 433 L383.5 429.1 L384 425.3 L384.5 427.6 L385 419.8 L385.5 413.2 L386 405.6 L386.5 395.4 L387 386.2 L387.5 378.2 L388 373.3 L388.5 369.2 L389 364.1 L389.4 356.2 L389.5 348.6 L390 310.6 L390.5 272.7 L391 319.1 L391.4 356.2 L391.5 357.2 L392 366.9 L392.5 371.2 L393 372.9 L393.5 376.1 L394 382.6 L394.5 388.9 L395 393.2 L395.5 396.8 L396 401.1 L396.5 402.7 L397 401.7 L397.5 401.3 L398 401.9 L398.5 401 L399 398.2 L399.5 397.6 L400 400.7 L400.5 405.6 L401 408.7 L401.5 408.1 L402 406.2 L402.5 405.2 L403 406.3 L403.5 409.4 L404 412.8 L404.5 413.9 L405 417.1 L405.5 424.3 L406 427.6 L406.5 434.5 L407 434.5 L407.5 434.5 L408 434.5 L408.5 434.5 L409 434.5 L409.5 434.5 L410 434.5 L410.5 434.5 L411 434.5 L411.5 434.5 L412 434.5 L412.5 434.5 L413 434.5 L413.5 434.5 L414 434.5 L414.5 434.5 L415 434.5 L415.5 434.5 L416 434.5 L416.5 434.5 L417 434.5 L417.5 434.5 L418 433 L418.5 429.1 L419 425.3 L419.5 416.3 L420 413.4 L420.5 408.6 L421 403.2 L421.5 396.2 L422 388.4 L422.5 380.1 L423 374.4 L423.5 369.4 L424 363.2 L424.4 356.2 L424.5 346.9 L425 300.7 L425.5 254.4 L426 311 L426.4 356.2 L426.5 357.2 L427 362.4 L427.5 365.2 L428 371.1 L428.5 379 L429 386.3 L429.5 393.1 L430 399.2 L430.5 403 L431 406.7 L431.5 410.1 L432 411 L432.5 408.3 L433 404.8 L433.5 403 L434 404.4 L434.5 407 L435 408 L435.5 408.5 L436 409.2 L436.5 410.5 L437 413.5 L437.5 416 L438 416 L438.5 414.7 L439 413.3 L439.5 410.9 L440 411.4 L440.5 418.1 L441 427.9 L441.5 434.5 L442 434.5 L442.5 434.5 L443 434.5 L443.5 434.5 L444 434.5 L444.5 434.5 L445 434.5 L445.5 434.5 L446 434.5 L446.5 434.5 L447 434.5 L447.5 434.5 L448 434.5 L448.5 434.5 L449 434.5 L449.5 434.5 L450 434.5 L450.5 434.5 L451 434.5 L451.5 434.5 L452 434.5 L452.5 431 L453 424.1 L453.5 422.2 L454 416.4 L454.5 406.8 L455 397.2 L455.5 388.7 L456 379.7 L456.5 369.9 L457 360.4 L457.5 350.3 L457.6 347.6 L458 344.5 L458.5 341.8 L458.8 340.5 L459 344.5 L459.5 352.3 L459.6 354.6 L460 355.9 L460.5 359 L461 358.8 L461.5 359.4 L462 360.3 L462.5 364.6 L463 372.1 L463.5 377.1 L464 376.1 L464.5 372.8 L465 372.5 L465.5 372.2 L466 371.9 L466.5 373.6 L467 378 L467.5 384.9 L468 389.8 L468.5 392.2 L469 395.6 L469.5 398.4 L470 399.5 L470.5 400.7 L471 404.2 L471.5 408.2 L472 411.2 L472.5 414 L473 416.9 L473.5 418.4 L474 426.2 L474.5 430.1 L475 434.5 L475.5 434.5 L476 434.5 L476.5 434.5 L477 434.5 L477.5 434.5 L478 434.5 L478.5 434.5 L479 434.5 L479.5 434.5 L480 434.5 L480.5 434.5 L481 434.5 L481.5 434.5 L482 434.5 L482.5 434.5 L483 434.5 L483.5 434.5 L484 434.5 L484.5 434.5 L485 434.5 L485.5 434.5 L486 434.5 L486.5 434.5 L487 434.5 L487.5 433 L488 429.1 L488.5 425.3 L489 424 L489.5 417.6 L490 411.8 L490.5 406 L491 397.5 L491.5 388.7 L492 380.7 L492.5 369.5 L493 354.9 L493.5 337.6 L493.9 334.3 L494 320.6 L494.5 252.3 L495 183.9 L495.5 270.2 L495.9 339.3 L496 341.6 L496.5 351.6 L497 362.6 L497.5 370.7 L498 378.7 L498.5 387.4 L499 393.7 L499.5 397.9 L500 400.3 L500.5 402.3 L501 404.9 L501.5 408.1 L502 408.6 L502.5 405.4 L503 402.8 L503.5 402.6 L504 403 L504.5 403.9 L505 406.1 L505.5 407.4 L506 406.4 L506.5 405.7 L507 406.2 L507.5 406.8 L508 407.9 L508.5 409.2 L509 409.6 L509.5 414.4 L510 423 L510.5 427.4 L511 434.5 L511.5 434.5 L512 434.5 L512.5 434.5 L513 434.5 L513.5 434.5 L514 434.5 L514.5 434.5 L515 434.5 L515.5 434.5 L516 434.5 L516.5 434.5 L517 434.5 L517.5 434.5 L518 434.5 L518.5 434.5 L519 434.5 L519.5 434.5 L520 434.5 L520.5 434.5 L521 434.5 L521.5 432.2 L522 428.4 L522.5 424.5 L523 417.1 L523.5 417.3 L524 413.2 L524.5 402.4 L525 390.9 L525.5 382.1 L526 374.2 L526.5 368.6 L527 362.8 L527.5 358 L527.8 356.2 L528 337.2 L528.5 289.8 L528.9 251.8 L529 263.4 L529.5 321.4 L529.8 356.2 L530 358.2 L530.5 367.9 L531 374.6 L531.5 381.5 L532 386.2 L532.5 388.5 L533 391.6 L533.5 396.4 L534 401.7 L534.5 407.2 L535 407.5 L535.5 406.7 L536 407 L536.5 409.2 L537 410.9 L537.5 411.5 L538 411.6 L538.5 411.2 L539 410.2 L539.5 410.2 L540 411.2 L540.5 411.6 L541 410.9 L541.5 409.7 L542 408.1 L542.5 407 L543 407 L543.5 411.4 L544 424.4 L544.5 430 L545 434.5 L545.5 434.5 L546 434.5 L546.5 434.5 L547 434.5 L547.5 434.5 L548 434.5 L548.5 434.5 L549 434.5 L549.5 434.5 L550 434.5 L550.5 434.5 L551 434.5 L551.5 434.5 L552 434.5 L552.5 434.5 L553 434.5 L553.5 434.5 L554 434.5 L554.5 434.5 L555 434.5 L555.5 434.5 L556 432.2 L556.5 428.4 L557 424.5 L557.5 416.2 L558 409.9 L558.5 406.9 L559 402.8 L559.5 395.4 L560 385.8 L560.5 375.7 L561 368.6 L561.5 362.5 L562 358.5 L562.3 356.2 L562.5 340.1 L563 299.7 L563.4 267.5 L563.5 277.3 L564 326.6 L564.3 356.2 L564.5 358.2 L565 356.7 L565.5 363.8 L566 376.8 L566.5 387.5 L567 392.3 L567.5 395.8 L568 401.2 L568.5 403.7 L569 403.7 L569.5 403.9 L570 407.6 L570.5 411.9 L571 414.3 L571.5 414.7 L572 413 L572.5 409.6 L573 406.1 L573.5 402.5 L574 400.3 L574.5 401.9 L575 404.6 L575.5 404.7 L576 405.5 L576.5 409.1 L577 413.2 L577.5 415.2 L578 419.3 L578.5 426.5 L579 429.1 L579.5 434.5 L580 434.5 L580.5 434.5 L581 434.5 L581.5 434.5 L582 434.5 L582.5 434.5 L583 434.5 L583.5 434.5 L584 434.5 L584.5 434.5 L585 434.5 L585.5 434.5 L586 434.5 L586.5 434.5 L587 434.5 L587.5 434.5 L588 434.5 L588.5 434.5 L589 431.4 L589.5 427.6 L590 416.2 L590.5 412.9 L591 411.7 L591.5 409.9 L592 403.5 L592.5 394.8 L593 385.1 L593.5 376.3 L594 371.7 L594.5 367.9 L595 358.5 L595.2 356.2 L595.5 340.5 L596 314.4 L596.3 298.8 L596.5 311.5 L597 343.4 L597.2 356.2 L597.5 359.2 L598 364.3 L598.5 369.3 L599 377.4 L599.5 385.1 L600 390 L600.5 396 L601 403.2 L601.5 406.8 L602 407.7 L602.5 406.7 L603 405.7 L603.5 406.4 L604 410.3 L604.5 414.2 L605 415.1 L605.5 412.7 L606 408.1 L606.5 404.6 L607 405.5 L607.5 408 L608 406.8 L608.5 403.6 L609 402.5 L609.5 402.4 L610 400.8 L610.5 400.1 L611 407.7 L611.5 418.2 L612 430.3 L612.5 434.5 L613 434.5 L613.5 434.5 L614 434.5 L614.5 434.5 L615 434.5 L615.5 434.5 L616 434.5 L616.5 434.5 L617 434.5 L617.5 434.5 L618 434.5 L618.5 434.5 L619 434.5 L619.5 434.5 L620 434.5 L620.5 434.5 L621 434.5 L621.5 434.5 L622 434.5 L622.5 434.5 L623 434.5 L623.5 434.5 L624 434.5 L624.5 433 L625 429.1 L625.5 425.3 L626 424.6 L626.5 420.4 L627 415.1 L627.5 407.3 L628 398.6 L628.5 390.2 L629 380.8 L629.5 374.4 L630 370.4 L630.5 366.4 L630.9 356.2 L631 350.5 L631.5 322 L632 293.6 L632.5 328.4 L632.9 356.2 L633 357.2 L633.5 357.3 L634 360.2 L634.5 366.6 L635 376.6 L635.5 386.5 L636 393.3 L636.5 399.5 L637 405.6 L637.5 410.6 L638 412.4 L638.5 414.4 L639 415.8 L639.5 414.2 L640 410 L640.5 406.5 L641 406.2 L641.5 408.6 L642 411.1 L642.5 411.8 L643 410.7 L643.5 408.8 L644 406.5 L644.5 406.5 L645 410.8 L645.5 417.4 L646 421.5 L646.5 424.3 L647 426.8 L647.5 428.7 L648 434.5 L648.5 434.5 L649 434.5 L649.5 434.5 L650 434.5 L650.5 434.5 L651 434.5 L651.5 434.5 L652 434.5 L652.5 434.5 L653 434.5 L653.5 434.5 L654 434.5 L654.5 434.5 L655 434.5 L655.5 434.5 L656 434.5 L656.5 434.5 L657 434.5 L657.5 434.5 L658 434.5 L658.5 434.5 L659 434.5 L659.5 433 L660 429.1 L660.5 425.3 L661 422.9 L661.5 422.7 L662 418.4 L662.5 410.1 L663 399.1 L663.5 387.4 L664 377.5 L664.5 372.3 L665 366.4 L665.5 359.5 L665.9 356.2 L666 350 L666.5 319.2 L667 288.3 L667.5 326 L667.9 356.2 L668 357.2 L668.5 364.2 L669 367.6 L669.5 373.5 L670 381.9 L670.5 387.7 L671 389.6 L671.5 392.5 L672 398 L672.5 403.7 L673 406 L673.5 406.2 L674 404.7 L674.5 403.1 L675 403.8 L675.5 406.8 L676 409.8 L676.5 410 L677 407.6 L677.5 405 L678 403.6 L678.5 403.4 L679 403.3 L679.5 405.1 L680 410.1 L680.5 417 L681 420.2 L681.5 420.8 L682 422.7 L682.5 428.6 L683 434.5 L683.5 434.5 L684 434.5 L684.5 434.5 L685 434.5 L685.5 434.5 L686 434.5 L686.5 434.5 L687 434.5 L687.5 434.5 L688 434.5 L688.5 434.5 L689 434.5 L689.5 434.5 L690 434.5 L690.5 434.5 L691 434.5 L691.5 434.5 L692 434.5 L692.5 434.5 L693 434.5 L693.5 434.5 L694 431.4 L694.5 427.6 L695 428.6 L695.5 418.9 L696 410.4 L696.5 406.2 L697 400.7 L697.5 391.8 L698 379.7 L698.5 370.1 L699 367.4 L699.5 365.5 L700 358.5 L700.2 356.2 L700.5 342 L701 318.2 L701.3 304 L701.5 315.6 L702 344.6 L702.2 356.2 L702.5 359.2 L703 365.1 L703.5 367.7 L704 374.3 L704.5 383.1 L705 391.2 L705.5 399.3 L706 405.6 L706.5 410.1 L707 414.6 L707.5 416.3 L708 417.2 L708.5 417.9 L709 419.1 L709.5 419.3 L710 416.6 L710.5 411.6 L711 407.4 L711.5 407.6 L712 410.9 L712.5 412.1 L713 410.7 L713.5 409.9 L714 409 L714.5 409.5 L715 414 L715.5 419.1 L716 424.2 L716.5 425.3 L717 431 L717.5 434.5 L718 434.5 L718.5 434.5 L719 434.5 L719.5 434.5 L720 434.5 L720.5 434.5 L721 434.5 L721.5 434.5 L722 434.5 L722.5 434.5 L723 434.5 L723.5 434.5 L724 434.5 L724.5 434.5 L725 434.5 L725.5 434.5 L726 434.5 L726.5 434.5 L727 434.5 L727.5 434.5 L728 434.5 L728.5 434.5 L729 431.4 L729.5 427.6 L730 425.4 L730.5 415 L731 406.6 L731.5 402.8 L732 396.1 L732.5 385.8 L733 375.4 L733.5 369.3 L734 368.8 L734.5 368 L735 358.5 L735.2 356.2 L735.5 345.5 L736 327.7 L736.3 317.1 L736.5 325.8 L737 347.5 L737.2 356.2 L737.5 359.2 L738 359.3 L738.5 366.8 L739 377.4 L739.5 386.5 L740 392.5 L740.5 399.1 L741 405.3 L741.5 410 L742 411.4 L742.5 409.6 L743 411.2 L743.5 414.1 L744 416.7 L744.5 417.5 L745 413.9 L745.5 407.5 L746 404.7 L746.5 407.6 L747 411.1 L747.5 412.1 L748 411.6 L748.5 410.9 L749 410.7 L749.5 411.9 L750 414.9 L750.5 419.2 L751 426.5 L751.5 426.5 L752 431.5 L752.5 434.5 L753 434.5 L753.5 434.5 L754 434.5 L754.5 434.5 L755 434.5 L755.5 434.5 L756 434.5 L756.5 434.5 L757 434.5 L757.5 434.5 L758 434.5 L758.5 434.5 L759 434.5 L759.5 434.5 L760 434.5 L760.5 434.5 L761 434.5 L761.5 430.7 L762 426.8 L762.5 423.6 L763 419.9 L763.5 416.5 L764 412.8 L764.5 402.8 L765 390.8 L765.5 379.1 L766 369.7 L766.5 362.9 L767 357.8 L767.5 357.4 L767.6 356.2 L768 325.8 L768.5 287.9 L768.7 272.7 L769 300.5 L769.5 346.9 L769.6 356.2 L770 360.2 L770.5 369 L771 373.7 L771.5 380 L772 386.2 L772.5 391.3 L773 398.4 L773.5 404.1 L774 407.2 L774.5 406.6 L775 402.4 L775.5 400.4 L776 403.2 L776.5 408.2 L777 412.3 L777.5 415.2 L778 416.6 L778.5 416.4 L779 414.7 L779.5 412.6 L780 411.5 L780.5 412.4 L781 413.4 L781.5 411.9 L782 408.9 L782.5 407.1 L783 407.3 L783.5 413.2 L784 426.8 L784.5 432.3 L785 434.5 L785.5 434.5 L786 434.5 L786.5 434.5 L787 434.5 L787.5 434.5 L788 434.5 L788.5 434.5 L789 434.5 L789.5 434.5 L790 434.5 L790.5 434.5 L791 434.5 L791.5 434.5 L792 434.5 L792.5 434.5 L793 434.5 L793.5 434.5 L794 434.5 L794.5 434.5 L795 434.5 L795.5 434.5 L796 434.5 L796.5 434.5 L797 430.7 L797.5 426.8 L798 418 L798.5 415.6 L799 411.6 L799.5 406 L800 397.1 L800.5 389.3 L801 381.7 L801.5 373.2 L802 366.2 L802.5 361.8 L803 357.4 L803.1 356.2 L803.5 322 L804 279.3 L804.2 262.2 L804.5 293.6 L805 345.8 L805.1 356.2 L805.5 360.2 L806 372.4 L806.5 377.6 L807 383.5 L807.5 388.9 L808 392.4 L808.5 398.5 L809 402.8 L809.5 403.9 L810 404.1 L810.5 404.2 L811 407 L811.5 409.3 L812 408.1 L812.5 405.5 L813 405.4 L813.5 407.6 L814 409.6 L814.5 410.2 L815 408.7 L815.5 407.5 L816 409.8 L816.5 412.8 L817 412.3 L817.5 410.7 L818 411.6 L818.5 415.1 L819 423.3 L819.5 426.4 L820 432.2 L820.5 434.5 L821 434.5 L821.5 434.5 L822 434.5 L822.5 434.5 L823 434.5 L823.5 434.5 L824 434.5 L824.5 434.5 L825 434.5 L825.5 434.5 L826 434.5 L826.5 434.5 L827 434.5 L827.5 434.5 L828 434.5 L828.5 434.5 L829 434.5 L829.5 434.5 L830 434.5 L830.5 434.5 L831 434.5 L831.5 434.5 L832 430.7 L832.5 426.8 L833 425.3 L833.5 419.1 L834 412.7 L834.5 408.4 L835 399.8 L835.5 390.3 L836 382 L836.5 374.2 L837 366.6 L837.5 361.4 L838 352.4 L838.1 351 L838.5 305.4 L839 248.5 L839.2 225.7 L839.5 268.9 L840 340.8 L840.1 355.2 L840.5 359.5 L841 365.3 L841.5 370.8 L842 376.9 L842.5 383.4 L843 389.9 L843.5 397.7 L844 404.2 L844.5 409.2 L845 410.8 L845.5 410.3 L846 411.2 L846.5 410.9 L847 410.2 L847.5 411.3 L848 413.7 L848.5 415.7 L849 415.3 L849.5 411.9 L850 409.4 L850.5 411.2 L851 414.2 L851.5 414.7 L852 413 L852.5 411.1 L853 409.9 L853.5 409.6 L854 414.9 L854.5 427.2 L855 432.4 L855.5 434.5 L856 434.5 L856.5 434.5 L857 434.5 L857.5 434.5 L858 434.5 L858.5 434.5 L859 434.5 L859.5 434.5 L860 434.5 L860.5 434.5 L861 434.5 L861.5 434.5 L862 434.5 L862.5 434.5 L863 434.5 L863.5 434.5 L864 434.5 L864.5 434.5 L865 434.5 L865.5 434.5 L866 434.5 L866.5 430.7 L867 426.8 L867.5 421.5 L868 420.4 L868.5 419.7 L869 417.3 L869.5 407.7 L870 396.3 L870.5 385.9 L871 378.1 L871.5 373.4 L872 368.7 L872.5 357.4 L872.6 356.2 L873 317.3 L873.5 268.6 L873.7 249.2 L874 284.9 L874.5 344.3 L874.6 356.2 L875 360.2 L875.5 365.3 L876 373.9 L876.5 384 L877 392 L877.5 396.2 L878 400.2 L878.5 403.5 L879 405.5 L879.5 406.5 L880 404.3 L880.5 402 L881 401.2 L881.5 401.2 L882 400.9 L882.5 400.2 L883 400.5 L883.5 401.4 L884 402.4 L884.5 404.5 L885 407.5 L885.5 409.3 L886 409 L886.5 408.6 L887 409.3 L887.5 409.7 L888 411.2 L888.5 420.6 L889 425 L889.5 431.8 L890 434.5 L890.5 434.5 L891 434.5 L891.5 434.5 L892 434.5 L892.5 434.5 L893 434.5 L893.5 434.5 L894 434.5 L894.5 434.5 L895 434.5 L895.5 434.5 L896 434.5 L896.5 434.5 L897 434.5 L897.5 434.5 L898 434.5 L898.5 434.5 L899 434.5 L899.5 434.5 L900 432.2 L900.5 428.4 L901 424.5 L901.5 414.8 L902 409.5 L902.5 407.1 L903 404 L903.5 398.8 L904 391.8 L904.5 381.6 L905 372 L905.5 362.5 L906 355 L906.3 356.2 L906.5 348.6 L907 329.6 L907.4 314.4 L907.5 319.1 L908 342.3 L908.3 356.2 L908.5 358.2 L909 362.7 L909.5 368.4 L910 375.4 L910.5 384.8 L911 393.4 L911.5 398.9 L912 402.4 L912.5 404.2 L913 405.7 L913.5 404.9 L914 407 L914.5 409.2 L915 408 L915.5 405.5 L916 404.9 L916.5 406.7 L917 409.7 L917.5 411.3 L918 412.3 L918.5 414.6 L919 415.3 L919.5 413.4 L920 413.1 L920.5 415.6 L921 419.4 L921.5 421.7 L922 424.5 L922.5 428.3 L923 429.7 L923.5 434.5 L924 434.5 L924.5 434.5 L925 434.5 L925.5 434.5 L926 434.5 L926.5 434.5 L927 434.5 L927.5 434.5" fill="none" stroke="#7eb26d" stroke-width="2.6" stroke-linejoin="round"/><rect x="42" y="469.1" width="12" height="4" rx="1" fill="#7eb26d"/><text x="58" y="473.8" class="lg" textLength="94.5" lengthAdjust="spacingAndGlyphs">PV-array-power.last</text><text x="158.8" y="473.8" class="lg" textLength="51.2" lengthAdjust="spacingAndGlyphs">Max: 96 W</text><text x="216.8" y="473.8" class="lg" textLength="59.5" lengthAdjust="spacingAndGlyphs">Current: 0 W</text><line x1="1000" y1="172.9" x2="1869" y2="172.9" class="g"/><line x1="1000" y1="225.3" x2="1869" y2="225.3" class="g"/><line x1="1000" y1="277.6" x2="1869" y2="277.6" class="g"/><line x1="1000" y1="330" x2="1869" y2="330" class="g"/><line x1="1000" y1="382.3" x2="1869" y2="382.3" class="g"/><line x1="1000" y1="434.7" x2="1869" y2="434.7" class="g"/><line x1="1102.5" y1="172.9" x2="1102.5" y2="434.7" class="g"/><line x1="1206.8" y1="172.9" x2="1206.8" y2="434.7" class="g"/><line x1="1311.1" y1="172.9" x2="1311.1" y2="434.7" class="g"/><line x1="1415.3" y1="172.9" x2="1415.3" y2="434.7" class="g"/><line x1="1519.6" y1="172.9" x2="1519.6" y2="434.7" class="g"/><line x1="1623.9" y1="172.9" x2="1623.9" y2="434.7" class="g"/><line x1="1728.2" y1="172.9" x2="1728.2" y2="434.7" class="g"/><line x1="1832.5" y1="172.9" x2="1832.5" y2="434.7" class="g"/><text x="995" y="175.5" class="yl">25 V</text><text x="995" y="227.9" class="yl">20 V</text><text x="995" y="280.2" class="yl">15 V</text><text x="995" y="332.6" class="yl">10 V</text><text x="995" y="384.9" class="yl">5 V</text><text x="995" y="437.3" class="yl">0 V</text><text x="1102.5" y="451.3" class="xl">5/10</text><text x="1206.8" y="451.3" class="xl">5/13</text><text x="1311.1" y="451.3" class="xl">5/16</text><text x="1415.3" y="451.3" class="xl">5/19</text><text x="1519.6" y="451.3" class="xl">5/22</text><text x="1623.9" y="451.3" class="xl">5/25</text><text x="1728.2" y="451.3" class="xl">5/28</text><text x="1832.5" y="451.3" class="xl">5/31</text><path d="M1000 434.7 L1000.5 434.7 L1001 434.7 L1001.5 434.7 L1002 434.7 L1002.5 434.7 L1003 434.7 L1003.5 410.6 L1004 380.5 L1004.5 350.3 L1005 320.2 L1005.5 290.1 L1006 289.3 L1006.5 288.5 L1007 287.7 L1007.5 286.9 L1008 286.1 L1008.5 285.3 L1009 284.5 L1009.5 283.3 L1010 282.2 L1010.5 273.6 L1011 267.3 L1011.5 259.5 L1012 249.2 L1012.5 241.3 L1013 237 L1013.5 232.7 L1014 228 L1014.5 223.6 L1015 217.9 L1015.5 212.6 L1016 212.8 L1016.5 214.4 L1017 214 L1017.5 213.6 L1018 214.7 L1018.5 213.8 L1019 211.8 L1019.5 211.7 L1020 211.2 L1020.5 207.2 L1021 201 L1021.5 200.4 L1022 204.1 L1022.5 204.3 L1023 202.2 L1023.5 205.2 L1024 209 L1024.5 209 L1025 207.5 L1025.5 209.2 L1026 215.4 L1026.5 235.3 L1027 258.4 L1027.5 279.8 L1028 312.6 L1028.5 348.5 L1029 384.4 L1029.5 420.3 L1030 434.7 L1030.5 434.7 L1031 434.7 L1031.5 434.7 L1032 434.7 L1032.5 434.7 L1033 434.7 L1033.5 434.7 L1034 434.7 L1034.5 434.7 L1035 434.7 L1035.5 434.7 L1036 434.7 L1036.5 434.7 L1037 434.7 L1037.5 434.7 L1038 426.3 L1038.5 396.5 L1039 366.6 L1039.5 336.8 L1040 306.9 L1040.5 290.9 L1041 290 L1041.5 289 L1042 288 L1042.5 287.1 L1043 286.1 L1043.5 285.2 L1044 284.2 L1044.5 282.9 L1045 277.6 L1045.5 281.6 L1046 279 L1046.5 262.2 L1047 251.1 L1047.5 249.1 L1048 246.5 L1048.5 238.9 L1049 233 L1049.5 231.1 L1050 228 L1050.5 226.8 L1051 224.2 L1051.5 219.7 L1052 218.6 L1052.5 216.8 L1053 213.2 L1053.5 212.7 L1054 215.5 L1054.5 218.1 L1055 216.8 L1055.5 213.4 L1056 216.3 L1056.5 221.6 L1057 220.2 L1057.5 215.8 L1058 211.7 L1058.5 208.7 L1059 211.3 L1059.5 217.9 L1060 224.9 L1060.5 229.4 L1061 238.1 L1061.5 248.4 L1062 262.4 L1062.5 294 L1063 329.9 L1063.5 365.8 L1064 401.7 L1064.5 434.7 L1065 434.7 L1065.5 434.7 L1066 434.7 L1066.5 434.7 L1067 434.7 L1067.5 434.7 L1068 434.7 L1068.5 434.7 L1069 434.7 L1069.5 434.7 L1070 434.7 L1070.5 434.7 L1071 434.7 L1071.5 434.7 L1072 434.7 L1072.5 434.7 L1073 411.9 L1073.5 381.9 L1074 351.9 L1074.5 321.9 L1075 291.9 L1075.5 289.9 L1076 289 L1076.5 288.1 L1077 287.3 L1077.5 286.4 L1078 285.5 L1078.5 284.6 L1079 283.5 L1079.5 282.6 L1080 280.9 L1080.5 274.1 L1081 268.1 L1081.5 263.4 L1082 254.7 L1082.5 246.2 L1083 241.8 L1083.5 236 L1084 226.5 L1084.5 220.1 L1085 214.8 L1085.5 210.5 L1086 213.2 L1086.5 217.5 L1087 218.8 L1087.5 219.7 L1088 218 L1088.5 215 L1089 214.9 L1089.5 212.4 L1090 207.4 L1090.5 206.5 L1091 208.7 L1091.5 209.9 L1092 209.3 L1092.5 208.4 L1093 208.9 L1093.5 210.7 L1094 216.4 L1094.5 221.7 L1095 226.5 L1095.5 228.6 L1096 240.6 L1096.5 257.1 L1097 278.8 L1097.5 311.2 L1098 347.1 L1098.5 383 L1099 418.9 L1099.5 434.7 L1100 434.7 L1100.5 434.7 L1101 434.7 L1101.5 434.7 L1102 434.7 L1102.5 434.7 L1103 434.7 L1103.5 434.7 L1104 434.7 L1104.5 434.7 L1105 434.7 L1105.5 434.7 L1106 434.7 L1106.5 434.7 L1107 434.7 L1107.5 427.5 L1108 397.5 L1108.5 367.5 L1109 337.5 L1109.5 307.5 L1110 290.3 L1110.5 289.4 L1111 288.6 L1111.5 287.7 L1112 286.8 L1112.5 286 L1113 285.1 L1113.5 284.2 L1114 282.4 L1114.5 277.8 L1115 272.1 L1115.5 267.8 L1116 259.3 L1116.5 248.6 L1117 241.1 L1117.5 237.3 L1118 231.8 L1118.5 226.9 L1119 223.9 L1119.5 219.8 L1120 217.2 L1120.5 212.8 L1121 210.9 L1121.5 214.3 L1122 216.7 L1122.5 214.2 L1123 209.6 L1123.5 207.1 L1124 207.6 L1124.5 209.6 L1125 213.5 L1125.5 217.2 L1126 218.4 L1126.5 215.2 L1127 213.6 L1127.5 212.8 L1128 211.2 L1128.5 216.1 L1129 223.5 L1129.5 225.4 L1130 223.8 L1130.5 228 L1131 242.4 L1131.5 266 L1132 292.5 L1132.5 328.4 L1133 364.3 L1133.5 400.2 L1134 434.7 L1134.5 434.7 L1135 434.7 L1135.5 434.7 L1136 434.7 L1136.5 434.7 L1137 434.7 L1137.5 434.7 L1138 434.7 L1138.5 434.7 L1139 434.7 L1139.5 434.7 L1140 434.7 L1140.5 434.7 L1141 434.7 L1141.5 434.7 L1142 434.7 L1142.5 413.3 L1143 383.5 L1143.5 353.8 L1144 324 L1144.5 294.3 L1145 290.9 L1145.5 289.9 L1146 288.9 L1146.5 287.9 L1147 286.8 L1147.5 285.8 L1148 284.8 L1148.5 283.8 L1149 283 L1149.5 282.2 L1150 278.8 L1150.5 274.7 L1151 267.5 L1151.5 259.8 L1152 253 L1152.5 244.6 L1153 233.7 L1153.5 227.8 L1154 227.2 L1154.5 227.7 L1155 225.1 L1155.5 220.3 L1156 212.3 L1156.5 205.3 L1157 206.2 L1157.5 212.2 L1158 217.1 L1158.5 219.4 L1159 217.1 L1159.5 212.9 L1160 212.7 L1160.5 214 L1161 213.2 L1161.5 209.6 L1162 207.7 L1162.5 211.1 L1163 213.7 L1163.5 212.4 L1164 211.7 L1164.5 219.1 L1165 228.9 L1165.5 249.7 L1166 265.2 L1166.5 275.3 L1167 309.8 L1167.5 345.7 L1168 381.6 L1168.5 417.5 L1169 434.7 L1169.5 434.7 L1170 434.7 L1170.5 434.7 L1171 434.7 L1171.5 434.7 L1172 434.7 L1172.5 434.7 L1173 434.7 L1173.5 434.7 L1174 434.7 L1174.5 434.7 L1175 434.7 L1175.5 434.7 L1176 434.7 L1176.5 434.7 L1177 428.8 L1177.5 399 L1178 369.3 L1178.5 339.5 L1179 309.8 L1179.5 291.5 L1180 290.5 L1180.5 289.5 L1181 288.4 L1181.5 287.4 L1182 286.4 L1182.5 285.3 L1183 284.3 L1183.5 283.5 L1184 282.7 L1184.5 282 L1185 284.5 L1185.5 278.7 L1186 262.7 L1186.5 243.7 L1187 231.6 L1187.5 228.6 L1188 227.2 L1188.5 225 L1189 220.8 L1189.5 217.4 L1190 210.2 L1190.5 205.8 L1191 205.4 L1191.5 202.7 L1192 198.3 L1192.5 196.6 L1193 198 L1193.5 199.9 L1194 203.4 L1194.5 206.7 L1195 207.3 L1195.5 209.5 L1196 213.2 L1196.5 214.2 L1197 207.7 L1197.5 197.1 L1198 192 L1198.5 193.7 L1199 199.9 L1199.5 208.1 L1200 224.3 L1200.5 247.3 L1201 272.1 L1201.5 291.1 L1202 327 L1202.5 362.9 L1203 398.8 L1203.5 434.7 L1204 434.7 L1204.5 434.7 L1205 434.7 L1205.5 434.7 L1206 434.7 L1206.5 434.7 L1207 434.7 L1207.5 434.7 L1208 434.7 L1208.5 434.7 L1209 434.7 L1209.5 434.7 L1210 434.7 L1210.5 434.7 L1211 434.7 L1211.5 434.7 L1212 414.4 L1212.5 384.5 L1213 354.5 L1213.5 324.6 L1214 294.7 L1214.5 290.3 L1215 289.4 L1215.5 288.5 L1216 287.5 L1216.5 286.6 L1217 285.7 L1217.5 284.8 L1218 283.8 L1218.5 282 L1219 281.1 L1219.5 278.1 L1220 276.4 L1220.5 272.6 L1221 266.5 L1221.5 255.4 L1222 243.4 L1222.5 229.5 L1223 220.5 L1223.5 219.5 L1224 220.3 L1224.5 221 L1225 222.1 L1225.5 224.1 L1226 225.4 L1226.5 223.3 L1227 219.1 L1227.5 217.9 L1228 219.2 L1228.5 222.1 L1229 224.2 L1229.5 224.2 L1230 222.6 L1230.5 221.9 L1231 224.8 L1231.5 228.2 L1232 226.3 L1232.5 222.2 L1233 223 L1233.5 222.7 L1234 222 L1234.5 225.7 L1235 243.6 L1235.5 258.3 L1236 270 L1236.5 308.3 L1237 344.2 L1237.5 380.1 L1238 416 L1238.5 434.7 L1239 434.7 L1239.5 434.7 L1240 434.7 L1240.5 434.7 L1241 434.7 L1241.5 434.7 L1242 434.7 L1242.5 434.7 L1243 434.7 L1243.5 434.7 L1244 434.7 L1244.5 434.7 L1245 434.7 L1245.5 434.7 L1246 434.7 L1246.5 429.9 L1247 400.2 L1247.5 370.4 L1248 340.6 L1248.5 310.9 L1249 291.4 L1249.5 290.4 L1250 289.4 L1250.5 288.4 L1251 287.4 L1251.5 286.4 L1252 285.4 L1252.5 284.3 L1253 283.4 L1253.5 282.5 L1254 282.5 L1254.5 281.1 L1255 271.5 L1255.5 259.4 L1256 248.6 L1256.5 238.9 L1257 231.5 L1257.5 226.5 L1258 225.5 L1258.5 222.4 L1259 218.7 L1259.5 217.3 L1260 217.1 L1260.5 218.3 L1261 217.3 L1261.5 213 L1262 210 L1262.5 207 L1263 210.3 L1263.5 216.9 L1264 219.2 L1264.5 219 L1265 219.6 L1265.5 217.3 L1266 212.8 L1266.5 210.9 L1267 211.1 L1267.5 211.6 L1268 212 L1268.5 214.7 L1269 216.6 L1269.5 227.3 L1270 248.3 L1270.5 271.2 L1271 289.6 L1271.5 325.6 L1272 361.5 L1272.5 397.4 L1273 433.3 L1273.5 434.7 L1274 434.7 L1274.5 434.7 L1275 434.7 L1275.5 434.7 L1276 434.7 L1276.5 434.7 L1277 434.7 L1277.5 434.7 L1278 434.7 L1278.5 434.7 L1279 434.7 L1279.5 434.7 L1280 434.7 L1280.5 434.7 L1281 434.7 L1281.5 415.6 L1282 385.8 L1282.5 355.9 L1283 326.1 L1283.5 296.2 L1284 290.6 L1284.5 289.7 L1285 288.7 L1285.5 287.7 L1286 286.8 L1286.5 285.8 L1287 284.8 L1287.5 283.8 L1288 282.5 L1288.5 288.4 L1289 291.4 L1289.5 287.8 L1290 274.4 L1290.5 258.7 L1291 249 L1291.5 241.2 L1292 228.3 L1292.5 219.9 L1293 215.6 L1293.5 210.1 L1294 210.1 L1294.5 213.9 L1295 212.1 L1295.5 209.1 L1296 207.6 L1296.5 208 L1297 211.1 L1297.5 214.5 L1298 216.4 L1298.5 216.8 L1299 218 L1299.5 220.7 L1300 218.8 L1300.5 213.7 L1301 212.2 L1301.5 215.4 L1302 220.1 L1302.5 219.9 L1303 216.6 L1303.5 217.9 L1304 220.1 L1304.5 236.9 L1305 256.3 L1305.5 276.3 L1306 306.9 L1306.5 342.8 L1307 378.7 L1307.5 414.6 L1308 434.7 L1308.5 434.7 L1309 434.7 L1309.5 434.7 L1310 434.7 L1310.5 434.7 L1311 434.7 L1311.5 434.7 L1312 434.7 L1312.5 434.7 L1313 434.7 L1313.5 434.7 L1314 434.7 L1314.5 434.7 L1315 434.7 L1315.5 434.7 L1316 431.1 L1316.5 401.3 L1317 371.5 L1317.5 341.7 L1318 311.9 L1318.5 291.3 L1319 290.3 L1319.5 289.4 L1320 288.4 L1320.5 287.4 L1321 286.4 L1321.5 285.4 L1322 284.4 L1322.5 283.3 L1323 282.2 L1323.5 281.9 L1324 279.3 L1324.5 266.6 L1325 251.6 L1325.5 243.3 L1326 237.6 L1326.5 228.7 L1327 222.8 L1327.5 223.2 L1328 222.2 L1328.5 223.3 L1329 221 L1329.5 214.1 L1330 213.4 L1330.5 214.8 L1331 215.1 L1331.5 217.5 L1332 217.1 L1332.5 215.2 L1333 212.6 L1333.5 209.5 L1334 208.4 L1334.5 210.4 L1335 210.1 L1335.5 211.1 L1336 213.9 L1336.5 214.1 L1337 211.9 L1337.5 207.9 L1338 209.6 L1338.5 217.5 L1339 232.7 L1339.5 251.3 L1340 268.5 L1340.5 288.2 L1341 324.1 L1341.5 360 L1342 395.9 L1342.5 431.8 L1343 434.7 L1343.5 434.7 L1344 434.7 L1344.5 434.7 L1345 434.7 L1345.5 434.7 L1346 434.7 L1346.5 434.7 L1347 434.7 L1347.5 434.7 L1348 434.7 L1348.5 434.7 L1349 434.7 L1349.5 434.7 L1350 434.7 L1350.5 434.7 L1351 416.8 L1351.5 386.9 L1352 357.1 L1352.5 327.2 L1353 297.4 L1353.5 290.6 L1354 289.7 L1354.5 288.7 L1355 287.8 L1355.5 286.8 L1356 285.8 L1356.5 284.9 L1357 283.9 L1357.5 282.5 L1358 281.9 L1358.5 279.7 L1359 273.3 L1359.5 264.1 L1360 256.4 L1360.5 247.2 L1361 239.4 L1361.5 232 L1362 226.9 L1362.5 227.5 L1363 228.4 L1363.5 222.5 L1364 215.8 L1364.5 214.8 L1365 211.2 L1365.5 206 L1366 205.6 L1366.5 207.5 L1367 206.7 L1367.5 204.1 L1368 204.6 L1368.5 209.1 L1369 209.9 L1369.5 204.3 L1370 201.3 L1370.5 204.2 L1371 206.9 L1371.5 205.9 L1372 204.4 L1372.5 205.7 L1373 212.6 L1373.5 216.5 L1374 237.6 L1374.5 258.9 L1375 277.5 L1375.5 305.4 L1376 341.3 L1376.5 377.3 L1377 413.2 L1377.5 434.7 L1378 434.7 L1378.5 434.7 L1379 434.7 L1379.5 434.7 L1380 434.7 L1380.5 434.7 L1381 434.7 L1381.5 434.7 L1382 434.7 L1382.5 434.7 L1383 434.7 L1383.5 434.7 L1384 434.7 L1384.5 434.7 L1385 434.7 L1385.5 432.3 L1386 402.4 L1386.5 372.5 L1387 342.6 L1387.5 312.7 L1388 290.9 L1388.5 289.9 L1389 289 L1389.5 288.1 L1390 287.2 L1390.5 286.2 L1391 285.3 L1391.5 284.4 L1392 283 L1392.5 274.5 L1393 274.1 L1393.5 272.2 L1394 263 L1394.5 252.6 L1395 245.6 L1395.5 240.5 L1396 228.9 L1396.5 218.8 L1397 220.2 L1397.5 219.1 L1398 213.6 L1398.5 213.1 L1399 218 L1399.5 223.2 L1400 224.4 L1400.5 225.9 L1401 225.1 L1401.5 221.6 L1402 218.9 L1402.5 212.9 L1403 208.4 L1403.5 213.1 L1404 221.4 L1404.5 228 L1405 231.3 L1405.5 232 L1406 231.9 L1406.5 231.7 L1407 230.4 L1407.5 231.7 L1408 237.8 L1408.5 249.2 L1409 261.8 L1409.5 271.1 L1410 286.8 L1410.5 322.7 L1411 358.6 L1411.5 394.5 L1412 430.4 L1412.5 434.7 L1413 434.7 L1413.5 434.7 L1414 434.7 L1414.5 434.7 L1415 434.7 L1415.5 434.7 L1416 434.7 L1416.5 434.7 L1417 434.7 L1417.5 434.7 L1418 434.7 L1418.5 434.7 L1419 434.7 L1419.5 434.7 L1420 434.7 L1420.5 418 L1421 388.1 L1421.5 358.3 L1422 328.4 L1422.5 298.6 L1423 290.7 L1423.5 289.7 L1424 288.8 L1424.5 287.8 L1425 286.8 L1425.5 285.9 L1426 284.9 L1426.5 283.9 L1427 282.6 L1427.5 280.8 L1428 277.9 L1428.5 276.8 L1429 266.6 L1429.5 250.8 L1430 242.2 L1430.5 240.3 L1431 238.4 L1431.5 236.3 L1432 230.9 L1432.5 223.7 L1433 222.4 L1433.5 223.2 L1434 218.6 L1434.5 213.6 L1435 214.4 L1435.5 213.8 L1436 209.6 L1436.5 210.2 L1437 215.5 L1437.5 221.9 L1438 226.7 L1438.5 227 L1439 223.6 L1439.5 219.4 L1440 215.9 L1440.5 214.3 L1441 215.2 L1441.5 218.8 L1442 224.9 L1442.5 231.9 L1443 233.6 L1443.5 248.4 L1444 264.7 L1444.5 282.4 L1445 304 L1445.5 339.9 L1446 375.8 L1446.5 411.7 L1447 434.7 L1447.5 434.7 L1448 434.7 L1448.5 434.7 L1449 434.7 L1449.5 434.7 L1450 434.7 L1450.5 434.7 L1451 434.7 L1451.5 434.7 L1452 434.7 L1452.5 434.7 L1453 434.7 L1453.5 434.7 L1454 434.7 L1454.5 434.7 L1455 433.5 L1455.5 403.6 L1456 373.8 L1456.5 343.9 L1457 314.1 L1457.5 291.1 L1458 290.2 L1458.5 289.2 L1459 288.3 L1459.5 287.3 L1460 286.4 L1460.5 285.4 L1461 284.4 L1461.5 283.3 L1462 286.6 L1462.5 287.6 L1463 282.8 L1463.5 270.7 L1464 260.4 L1464.5 249.9 L1465 237.5 L1465.5 226.8 L1466 221.8 L1466.5 223.7 L1467 221.1 L1467.5 217.8 L1468 220 L1468.5 219.1 L1469 213.5 L1469.5 213.5 L1470 222.9 L1470.5 230.2 L1471 228.5 L1471.5 223.9 L1472 218.9 L1472.5 216.8 L1473 219.2 L1473.5 221.9 L1474 222.2 L1474.5 222.6 L1475 220.9 L1475.5 215.1 L1476 208.7 L1476.5 211.9 L1477 222 L1477.5 229.9 L1478 241 L1478.5 259.5 L1479 275.1 L1479.5 285.3 L1480 321.2 L1480.5 357.1 L1481 393.1 L1481.5 429 L1482 434.7 L1482.5 434.7 L1483 434.7 L1483.5 434.7 L1484 434.7 L1484.5 434.7 L1485 434.7 L1485.5 434.7 L1486 434.7 L1486.5 434.7 L1487 434.7 L1487.5 434.7 L1488 434.7 L1488.5 434.7 L1489 434.7 L1489.5 434.7 L1490 419.1 L1490.5 389.2 L1491 359.3 L1491.5 329.4 L1492 299.4 L1492.5 290.4 L1493 289.5 L1493.5 288.6 L1494 287.6 L1494.5 286.7 L1495 285.8 L1495.5 284.9 L1496 284 L1496.5 282.2 L1497 280.7 L1497.5 283.5 L1498 284.2 L1498.5 272.3 L1499 257.4 L1499.5 248.6 L1500 240.5 L1500.5 234.4 L1501 230.3 L1501.5 224.6 L1502 217.5 L1502.5 211.3 L1503 208.2 L1503.5 209.3 L1504 211.7 L1504.5 213.1 L1505 212.1 L1505.5 212.3 L1506 214.3 L1506.5 215.1 L1507 214.7 L1507.5 214.3 L1508 215.8 L1508.5 218.7 L1509 219.2 L1509.5 219.4 L1510 221.7 L1510.5 219.6 L1511 218.7 L1511.5 223.8 L1512 226.1 L1512.5 225.6 L1513 240 L1513.5 256.3 L1514 275.8 L1514.5 302.6 L1515 338.5 L1515.5 374.4 L1516 410.3 L1516.5 434.7 L1517 434.7 L1517.5 434.7 L1518 434.7 L1518.5 434.7 L1519 434.7 L1519.5 434.7 L1520 434.7 L1520.5 434.7 L1521 434.7 L1521.5 434.7 L1522 434.7 L1522.5 434.7 L1523 434.7 L1523.5 434.7 L1524 434.7 L1524.5 434.7 L1525 404.7 L1525.5 374.7 L1526 344.7 L1526.5 314.7 L1527 290.5 L1527.5 289.6 L1528 288.7 L1528.5 287.9 L1529 287 L1529.5 286.1 L1530 285.3 L1530.5 284.4 L1531 282.9 L1531.5 276 L1532 276.7 L1532.5 273.8 L1533 263.6 L1533.5 249.5 L1534 241.6 L1534.5 240.6 L1535 233.6 L1535.5 222.6 L1536 219.6 L1536.5 217.6 L1537 214.5 L1537.5 219.3 L1538 224.7 L1538.5 229.9 L1539 232.5 L1539.5 231.9 L1540 234.6 L1540.5 237.2 L1541 235.1 L1541.5 232.3 L1542 233.2 L1542.5 237.5 L1543 241.5 L1543.5 241.6 L1544 240.1 L1544.5 236 L1545 232.4 L1545.5 229.1 L1546 225.7 L1546.5 228.4 L1547 235.2 L1547.5 244.7 L1548 256.7 L1548.5 266.6 L1549 283.9 L1549.5 319.8 L1550 355.7 L1550.5 391.6 L1551 427.5 L1551.5 434.7 L1552 434.7 L1552.5 434.7 L1553 434.7 L1553.5 434.7 L1554 434.7 L1554.5 434.7 L1555 434.7 L1555.5 434.7 L1556 434.7 L1556.5 434.7 L1557 434.7 L1557.5 434.7 L1558 434.7 L1558.5 434.7 L1559 434.7 L1559.5 420.4 L1560 390.7 L1560.5 361 L1561 331.2 L1561.5 301.5 L1562 291.3 L1562.5 290.2 L1563 289.2 L1563.5 288.2 L1564 287.1 L1564.5 286.1 L1565 285.1 L1565.5 284 L1566 283.3 L1566.5 282.6 L1567 282 L1567.5 281.4 L1568 273.1 L1568.5 264.5 L1569 253.1 L1569.5 240 L1570 227.4 L1570.5 221.3 L1571 219.9 L1571.5 217.6 L1572 216.6 L1572.5 218.6 L1573 223.4 L1573.5 223.1 L1574 218.8 L1574.5 217.7 L1575 215.7 L1575.5 214.1 L1576 214.9 L1576.5 214.3 L1577 215.8 L1577.5 219 L1578 212.7 L1578.5 206.6 L1579 209.5 L1579.5 211.4 L1580 208.4 L1580.5 208.5 L1581 213.6 L1581.5 218.5 L1582 220.3 L1582.5 235.1 L1583 252.9 L1583.5 272.2 L1584 301.1 L1584.5 337 L1585 372.9 L1585.5 408.8 L1586 434.7 L1586.5 434.7 L1587 434.7 L1587.5 434.7 L1588 434.7 L1588.5 434.7 L1589 434.7 L1589.5 434.7 L1590 434.7 L1590.5 434.7 L1591 434.7 L1591.5 434.7 L1592 434.7 L1592.5 434.7 L1593 434.7 L1593.5 434.7 L1594 434.7 L1594.5 405.8 L1595 375.6 L1595.5 345.5 L1596 315.3 L1596.5 289.9 L1597 289.1 L1597.5 288.3 L1598 287.5 L1598.5 286.7 L1599 286 L1599.5 285.2 L1600 284.4 L1600.5 282.7 L1601 274.9 L1601.5 269.5 L1602 269.3 L1602.5 267.4 L1603 257.3 L1603.5 245.5 L1604 240.9 L1604.5 236.9 L1605 231.4 L1605.5 224.8 L1606 216.7 L1606.5 210.6 L1607 206.6 L1607.5 202 L1608 197.4 L1608.5 192.1 L1609 193.3 L1609.5 199.4 L1610 206.6 L1610.5 211.7 L1611 206.5 L1611.5 198.6 L1612 196.4 L1612.5 198.4 L1613 197.5 L1613.5 199.2 L1614 205 L1614.5 210.2 L1615 208 L1615.5 203.8 L1616 203.2 L1616.5 208.6 L1617 219.5 L1617.5 237.1 L1618 255.6 L1618.5 283 L1619 318.4 L1619.5 354.3 L1620 390.2 L1620.5 426.1 L1621 434.7 L1621.5 434.7 L1622 434.7 L1622.5 434.7 L1623 434.7 L1623.5 434.7 L1624 434.7 L1624.5 434.7 L1625 434.7 L1625.5 434.7 L1626 434.7 L1626.5 434.7 L1627 434.7 L1627.5 434.7 L1628 434.7 L1628.5 434.7 L1629 421.5 L1629.5 391.6 L1630 361.7 L1630.5 331.8 L1631 301.9 L1631.5 290.6 L1632 289.6 L1632.5 288.7 L1633 287.8 L1633.5 286.8 L1634 285.9 L1634.5 285 L1635 284.1 L1635.5 282.4 L1636 279.4 L1636.5 275.8 L1637 270.9 L1637.5 259 L1638 250.4 L1638.5 244.2 L1639 236.9 L1639.5 226.9 L1640 220.5 L1640.5 219.4 L1641 219.4 L1641.5 222.3 L1642 225.6 L1642.5 222.7 L1643 215.7 L1643.5 210.6 L1644 208.8 L1644.5 209.5 L1645 208.8 L1645.5 208.4 L1646 212.3 L1646.5 218.3 L1647 221.1 L1647.5 221.9 L1648 221.6 L1648.5 217.9 L1649 215.2 L1649.5 214.4 L1650 213.3 L1650.5 216.5 L1651 223.3 L1651.5 228.4 L1652 242.7 L1652.5 256.8 L1653 269.8 L1653.5 299.7 L1654 335.6 L1654.5 371.5 L1655 407.4 L1655.5 434.7 L1656 434.7 L1656.5 434.7 L1657 434.7 L1657.5 434.7 L1658 434.7 L1658.5 434.7 L1659 434.7 L1659.5 434.7 L1660 434.7 L1660.5 434.7 L1661 434.7 L1661.5 434.7 L1662 434.7 L1662.5 434.7 L1663 434.7 L1663.5 434.7 L1664 407 L1664.5 376.9 L1665 346.8 L1665.5 316.6 L1666 290 L1666.5 289.2 L1667 288.4 L1667.5 287.6 L1668 286.8 L1668.5 286 L1669 285.2 L1669.5 284.4 L1670 282.9 L1670.5 272.3 L1671 269.6 L1671.5 267 L1672 258.4 L1672.5 247.5 L1673 238.3 L1673.5 231.6 L1674 224.2 L1674.5 221.5 L1675 223.6 L1675.5 224.1 L1676 221.9 L1676.5 221.3 L1677 219.5 L1677.5 221.2 L1678 224.2 L1678.5 221 L1679 217.2 L1679.5 218.5 L1680 219.7 L1680.5 219.3 L1681 223.5 L1681.5 228.2 L1682 227.3 L1682.5 221.4 L1683 215.7 L1683.5 215.3 L1684 220.8 L1684.5 226.9 L1685 229 L1685.5 229.8 L1686 233.7 L1686.5 241.3 L1687 252.8 L1687.5 265 L1688 282.6 L1688.5 316.9 L1689 352.8 L1689.5 388.7 L1690 424.6 L1690.5 434.7 L1691 434.7 L1691.5 434.7 L1692 434.7 L1692.5 434.7 L1693 434.7 L1693.5 434.7 L1694 434.7 L1694.5 434.7 L1695 434.7 L1695.5 434.7 L1696 434.7 L1696.5 434.7 L1697 434.7 L1697.5 434.7 L1698 434.7 L1698.5 422.8 L1699 393.1 L1699.5 363.4 L1700 333.7 L1700.5 303.9 L1701 291.4 L1701.5 290.4 L1702 289.3 L1702.5 288.3 L1703 287.2 L1703.5 286.2 L1704 285.2 L1704.5 284.1 L1705 283.4 L1705.5 282.9 L1706 282.3 L1706.5 279.7 L1707 274.1 L1707.5 267.8 L1708 258.4 L1708.5 247.4 L1709 233.9 L1709.5 220.8 L1710 216.8 L1710.5 220 L1711 223.7 L1711.5 223.1 L1712 218.8 L1712.5 213.4 L1713 212.3 L1713.5 215 L1714 220.3 L1714.5 225.4 L1715 226.1 L1715.5 223.5 L1716 220.5 L1716.5 221.2 L1717 223.1 L1717.5 220.2 L1718 217.8 L1718.5 221.6 L1719 224.4 L1719.5 223.4 L1720 222.1 L1720.5 222.2 L1721 221 L1721.5 235.8 L1722 258.7 L1722.5 276.6 L1723 298.3 L1723.5 334.2 L1724 370.1 L1724.5 406 L1725 434.7 L1725.5 434.7 L1726 434.7 L1726.5 434.7 L1727 434.7 L1727.5 434.7 L1728 434.7 L1728.5 434.7 L1729 434.7 L1729.5 434.7 L1730 434.7 L1730.5 434.7 L1731 434.7 L1731.5 434.7 L1732 434.7 L1732.5 434.7 L1733 434.7 L1733.5 408.5 L1734 378.8 L1734.5 349.1 L1735 319.3 L1735.5 291.9 L1736 290.8 L1736.5 289.8 L1737 288.8 L1737.5 287.7 L1738 286.7 L1738.5 285.7 L1739 284.6 L1739.5 283.7 L1740 283 L1740.5 282.3 L1741 274.1 L1741.5 273.3 L1742 263.9 L1742.5 251.7 L1743 245.4 L1743.5 238.9 L1744 227.9 L1744.5 222.4 L1745 217.8 L1745.5 213.4 L1746 213.4 L1746.5 216.4 L1747 220.8 L1747.5 224.2 L1748 223.4 L1748.5 221.9 L1749 222.3 L1749.5 223.5 L1750 221.7 L1750.5 216 L1751 215.3 L1751.5 221.7 L1752 224.5 L1752.5 223.1 L1753 220.4 L1753.5 220.9 L1754 223.5 L1754.5 225 L1755 227.1 L1755.5 231.2 L1756 236.9 L1756.5 251.6 L1757 265.2 L1757.5 282.1 L1758 315.5 L1758.5 351.4 L1759 387.3 L1759.5 423.2 L1760 434.7 L1760.5 434.7 L1761 434.7 L1761.5 434.7 L1762 434.7 L1762.5 434.7 L1763 434.7 L1763.5 434.7 L1764 434.7 L1764.5 434.7 L1765 434.7 L1765.5 434.7 L1766 434.7 L1766.5 434.7 L1767 434.7 L1767.5 434.7 L1768 424 L1768.5 394.2 L1769 364.5 L1769.5 334.7 L1770 305 L1770.5 291.3 L1771 290.3 L1771.5 289.3 L1772 288.2 L1772.5 287.2 L1773 286.2 L1773.5 285.2 L1774 284.1 L1774.5 283.3 L1775 282.5 L1775.5 284.9 L1776 286.2 L1776.5 272.8 L1777 257.6 L1777.5 247.7 L1778 243.7 L1778.5 233.7 L1779 226.1 L1779.5 227.2 L1780 224.5 L1780.5 217.8 L1781 216.5 L1781.5 222.5 L1782 223.9 L1782.5 216.8 L1783 214.3 L1783.5 220.7 L1784 224.2 L1784.5 220.1 L1785 217.7 L1785.5 218.7 L1786 222.4 L1786.5 225.4 L1787 222.5 L1787.5 217.4 L1788 220.1 L1788.5 228 L1789 226.2 L1789.5 220.3 L1790 225.9 L1790.5 233.5 L1791 245 L1791.5 259.2 L1792 275.5 L1792.5 296.8 L1793 332.7 L1793.5 368.6 L1794 404.5 L1794.5 434.7 L1795 434.7 L1795.5 434.7 L1796 434.7 L1796.5 434.7 L1797 434.7 L1797.5 434.7 L1798 434.7 L1798.5 434.7 L1799 434.7 L1799.5 434.7 L1800 434.7 L1800.5 434.7 L1801 434.7 L1801.5 434.7 L1802 434.7 L1802.5 434.7 L1803 409.4 L1803.5 379.3 L1804 349.2 L1804.5 319.1 L1805 290.1 L1805.5 289.3 L1806 288.5 L1806.5 287.7 L1807 286.9 L1807.5 286.1 L1808 285.3 L1808.5 284.5 L1809 283.2 L1809.5 292 L1810 285.6 L1810.5 276.3 L1811 264.8 L1811.5 251.8 L1812 242.7 L1812.5 239.4 L1813 233.6 L1813.5 226.7 L1814 221.8 L1814.5 220 L1815 219.4 L1815.5 219.1 L1816 218.5 L1816.5 217.3 L1817 213.9 L1817.5 214.1 L1818 221 L1818.5 229.2 L1819 233.1 L1819.5 231.5 L1820 231.9 L1820.5 232.8 L1821 228.1 L1821.5 225.5 L1822 228.1 L1822.5 230.2 L1823 229.6 L1823.5 229 L1824 230.2 L1824.5 227 L1825 224.9 L1825.5 232 L1826 250.1 L1826.5 268.7 L1827 285.8 L1827.5 314.1 L1828 350 L1828.5 385.9 L1829 421.8 L1829.5 434.7 L1830 434.7 L1830.5 434.7 L1831 434.7 L1831.5 434.7 L1832 434.7 L1832.5 434.7 L1833 434.7 L1833.5 434.7 L1834 434.7 L1834.5 434.7 L1835 434.7 L1835.5 434.7 L1836 434.7 L1836.5 434.7 L1837 434.7 L1837.5 425.1 L1838 395.2 L1838.5 365.3 L1839 335.5 L1839.5 305.6 L1840 290.7 L1840.5 289.8 L1841 288.8 L1841.5 287.9 L1842 287 L1842.5 286 L1843 285.1 L1843.5 284.2 L1844 282.7 L1844.5 287.8 L1845 281 L1845.5 273.5 L1846 260.8 L1846.5 249.9 L1847 244.9 L1847.5 242.9 L1848 237.7 L1848.5 227.5 L1849 218.7 L1849.5 214.6 L1850 213.2 L1850.5 214.3 L1851 216.7 L1851.5 217.7 L1852 215.9 L1852.5 213.5 L1853 212.8 L1853.5 214.1 L1854 217.9 L1854.5 222 L1855 223.8 L1855.5 223.6 L1856 224.2 L1856.5 226 L1857 220.6 L1857.5 214.7 L1858 219 L1858.5 223.3 L1859 219.9 L1859.5 218.7 L1860 222.8 L1860.5 236.7 L1861 253.6 L1861.5 266.5 L1862 295.4 L1862.5 331.3 L1863 367.2 L1863.5 403.1 L1864 434.7 L1864.5 434.7 L1865 434.7 L1865.5 434.7 L1866 434.7 L1866.5 434.7 L1867 434.7 L1867.5 434.7 L1868 434.7 L1868.5 434.7 L1869 434.7 L1869 434.7 L1000 434.7 Z" fill="#7eb26d" fill-opacity="0.8"/><path d="M1000 434.7 L1000.5 434.7 L1001 434.7 L1001.5 434.7 L1002 434.7 L1002.5 434.7 L1003 434.7 L1003.5 410.6 L1004 380.5 L1004.5 350.3 L1005 320.2 L1005.5 290.1 L1006 289.3 L1006.5 288.5 L1007 287.7 L1007.5 286.9 L1008 286.1 L1008.5 285.3 L1009 284.5 L1009.5 283.3 L1010 282.2 L1010.5 273.6 L1011 267.3 L1011.5 259.5 L1012 249.2 L1012.5 241.3 L1013 237 L1013.5 232.7 L1014 228 L1014.5 223.6 L1015 217.9 L1015.5 212.6 L1016 212.8 L1016.5 214.4 L1017 214 L1017.5 213.6 L1018 214.7 L1018.5 213.8 L1019 211.8 L1019.5 211.7 L1020 211.2 L1020.5 207.2 L1021 201 L1021.5 200.4 L1022 204.1 L1022.5 204.3 L1023 202.2 L1023.5 205.2 L1024 209 L1024.5 209 L1025 207.5 L1025.5 209.2 L1026 215.4 L1026.5 235.3 L1027 258.4 L1027.5 279.8 L1028 312.6 L1028.5 348.5 L1029 384.4 L1029.5 420.3 L1030 434.7 L1030.5 434.7 L1031 434.7 L1031.5 434.7 L1032 434.7 L1032.5 434.7 L1033 434.7 L1033.5 434.7 L1034 434.7 L1034.5 434.7 L1035 434.7 L1035.5 434.7 L1036 434.7 L1036.5 434.7 L1037 434.7 L1037.5 434.7 L1038 426.3 L1038.5 396.5 L1039 366.6 L1039.5 336.8 L1040 306.9 L1040.5 290.9 L1041 290 L1041.5 289 L1042 288 L1042.5 287.1 L1043 286.1 L1043.5 285.2 L1044 284.2 L1044.5 282.9 L1045 277.6 L1045.5 281.6 L1046 279 L1046.5 262.2 L1047 251.1 L1047.5 249.1 L1048 246.5 L1048.5 238.9 L1049 233 L1049.5 231.1 L1050 228 L1050.5 226.8 L1051 224.2 L1051.5 219.7 L1052 218.6 L1052.5 216.8 L1053 213.2 L1053.5 212.7 L1054 215.5 L1054.5 218.1 L1055 216.8 L1055.5 213.4 L1056 216.3 L1056.5 221.6 L1057 220.2 L1057.5 215.8 L1058 211.7 L1058.5 208.7 L1059 211.3 L1059.5 217.9 L1060 224.9 L1060.5 229.4 L1061 238.1 L1061.5 248.4 L1062 262.4 L1062.5 294 L1063 329.9 L1063.5 365.8 L1064 401.7 L1064.5 434.7 L1065 434.7 L1065.5 434.7 L1066 434.7 L1066.5 434.7 L1067 434.7 L1067.5 434.7 L1068 434.7 L1068.5 434.7 L1069 434.7 L1069.5 434.7 L1070 434.7 L1070.5 434.7 L1071 434.7 L1071.5 434.7 L1072 434.7 L1072.5 434.7 L1073 411.9 L1073.5 381.9 L1074 351.9 L1074.5 321.9 L1075 291.9 L1075.5 289.9 L1076 289 L1076.5 288.1 L1077 287.3 L1077.5 286.4 L1078 285.5 L1078.5 284.6 L1079 283.5 L1079.5 282.6 L1080 280.9 L1080.5 274.1 L1081 268.1 L1081.5 263.4 L1082 254.7 L1082.5 246.2 L1083 241.8 L1083.5 236 L1084 226.5 L1084.5 220.1 L1085 214.8 L1085.5 210.5 L1086 213.2 L1086.5 217.5 L1087 218.8 L1087.5 219.7 L1088 218 L1088.5 215 L1089 214.9 L1089.5 212.4 L1090 207.4 L1090.5 206.5 L1091 208.7 L1091.5 209.9 L1092 209.3 L1092.5 208.4 L1093 208.9 L1093.5 210.7 L1094 216.4 L1094.5 221.7 L1095 226.5 L1095.5 228.6 L1096 240.6 L1096.5 257.1 L1097 278.8 L1097.5 311.2 L1098 347.1 L1098.5 383 L1099 418.9 L1099.5 434.7 L1100 434.7 L1100.5 434.7 L1101 434.7 L1101.5 434.7 L1102 434.7 L1102.5 434.7 L1103 434.7 L1103.5 434.7 L1104 434.7 L1104.5 434.7 L1105 434.7 L1105.5 434.7 L1106 434.7 L1106.5 434.7 L1107 434.7 L1107.5 427.5 L1108 397.5 L1108.5 367.5 L1109 337.5 L1109.5 307.5 L1110 290.3 L1110.5 289.4 L1111 288.6 L1111.5 287.7 L1112 286.8 L1112.5 286 L1113 285.1 L1113.5 284.2 L1114 282.4 L1114.5 277.8 L1115 272.1 L1115.5 267.8 L1116 259.3 L1116.5 248.6 L1117 241.1 L1117.5 237.3 L1118 231.8 L1118.5 226.9 L1119 223.9 L1119.5 219.8 L1120 217.2 L1120.5 212.8 L1121 210.9 L1121.5 214.3 L1122 216.7 L1122.5 214.2 L1123 209.6 L1123.5 207.1 L1124 207.6 L1124.5 209.6 L1125 213.5 L1125.5 217.2 L1126 218.4 L1126.5 215.2 L1127 213.6 L1127.5 212.8 L1128 211.2 L1128.5 216.1 L1129 223.5 L1129.5 225.4 L1130 223.8 L1130.5 228 L1131 242.4 L1131.5 266 L1132 292.5 L1132.5 328.4 L1133 364.3 L1133.5 400.2 L1134 434.7 L1134.5 434.7 L1135 434.7 L1135.5 434.7 L1136 434.7 L1136.5 434.7 L1137 434.7 L1137.5 434.7 L1138 434.7 L1138.5 434.7 L1139 434.7 L1139.5 434.7 L1140 434.7 L1140.5 434.7 L1141 434.7 L1141.5 434.7 L1142 434.7 L1142.5 413.3 L1143 383.5 L1143.5 353.8 L1144 324 L1144.5 294.3 L1145 290.9 L1145.5 289.9 L1146 288.9 L1146.5 287.9 L1147 286.8 L1147.5 285.8 L1148 284.8 L1148.5 283.8 L1149 283 L1149.5 282.2 L1150 278.8 L1150.5 274.7 L1151 267.5 L1151.5 259.8 L1152 253 L1152.5 244.6 L1153 233.7 L1153.5 227.8 L1154 227.2 L1154.5 227.7 L1155 225.1 L1155.5 220.3 L1156 212.3 L1156.5 205.3 L1157 206.2 L1157.5 212.2 L1158 217.1 L1158.5 219.4 L1159 217.1 L1159.5 212.9 L1160 212.7 L1160.5 214 L1161 213.2 L1161.5 209.6 L1162 207.7 L1162.5 211.1 L1163 213.7 L1163.5 212.4 L1164 211.7 L1164.5 219.1 L1165 228.9 L1165.5 249.7 L1166 265.2 L1166.5 275.3 L1167 309.8 L1167.5 345.7 L1168 381.6 L1168.5 417.5 L1169 434.7 L1169.5 434.7 L1170 434.7 L1170.5 434.7 L1171 434.7 L1171.5 434.7 L1172 434.7 L1172.5 434.7 L1173 434.7 L1173.5 434.7 L1174 434.7 L1174.5 434.7 L1175 434.7 L1175.5 434.7 L1176 434.7 L1176.5 434.7 L1177 428.8 L1177.5 399 L1178 369.3 L1178.5 339.5 L1179 309.8 L1179.5 291.5 L1180 290.5 L1180.5 289.5 L1181 288.4 L1181.5 287.4 L1182 286.4 L1182.5 285.3 L1183 284.3 L1183.5 283.5 L1184 282.7 L1184.5 282 L1185 284.5 L1185.5 278.7 L1186 262.7 L1186.5 243.7 L1187 231.6 L1187.5 228.6 L1188 227.2 L1188.5 225 L1189 220.8 L1189.5 217.4 L1190 210.2 L1190.5 205.8 L1191 205.4 L1191.5 202.7 L1192 198.3 L1192.5 196.6 L1193 198 L1193.5 199.9 L1194 203.4 L1194.5 206.7 L1195 207.3 L1195.5 209.5 L1196 213.2 L1196.5 214.2 L1197 207.7 L1197.5 197.1 L1198 192 L1198.5 193.7 L1199 199.9 L1199.5 208.1 L1200 224.3 L1200.5 247.3 L1201 272.1 L1201.5 291.1 L1202 327 L1202.5 362.9 L1203 398.8 L1203.5 434.7 L1204 434.7 L1204.5 434.7 L1205 434.7 L1205.5 434.7 L1206 434.7 L1206.5 434.7 L1207 434.7 L1207.5 434.7 L1208 434.7 L1208.5 434.7 L1209 434.7 L1209.5 434.7 L1210 434.7 L1210.5 434.7 L1211 434.7 L1211.5 434.7 L1212 414.4 L1212.5 384.5 L1213 354.5 L1213.5 324.6 L1214 294.7 L1214.5 290.3 L1215 289.4 L1215.5 288.5 L1216 287.5 L1216.5 286.6 L1217 285.7 L1217.5 284.8 L1218 283.8 L1218.5 282 L1219 281.1 L1219.5 278.1 L1220 276.4 L1220.5 272.6 L1221 266.5 L1221.5 255.4 L1222 243.4 L1222.5 229.5 L1223 220.5 L1223.5 219.5 L1224 220.3 L1224.5 221 L1225 222.1 L1225.5 224.1 L1226 225.4 L1226.5 223.3 L1227 219.1 L1227.5 217.9 L1228 219.2 L1228.5 222.1 L1229 224.2 L1229.5 224.2 L1230 222.6 L1230.5 221.9 L1231 224.8 L1231.5 228.2 L1232 226.3 L1232.5 222.2 L1233 223 L1233.5 222.7 L1234 222 L1234.5 225.7 L1235 243.6 L1235.5 258.3 L1236 270 L1236.5 308.3 L1237 344.2 L1237.5 380.1 L1238 416 L1238.5 434.7 L1239 434.7 L1239.5 434.7 L1240 434.7 L1240.5 434.7 L1241 434.7 L1241.5 434.7 L1242 434.7 L1242.5 434.7 L1243 434.7 L1243.5 434.7 L1244 434.7 L1244.5 434.7 L1245 434.7 L1245.5 434.7 L1246 434.7 L1246.5 429.9 L1247 400.2 L1247.5 370.4 L1248 340.6 L1248.5 310.9 L1249 291.4 L1249.5 290.4 L1250 289.4 L1250.5 288.4 L1251 287.4 L1251.5 286.4 L1252 285.4 L1252.5 284.3 L1253 283.4 L1253.5 282.5 L1254 282.5 L1254.5 281.1 L1255 271.5 L1255.5 259.4 L1256 248.6 L1256.5 238.9 L1257 231.5 L1257.5 226.5 L1258 225.5 L1258.5 222.4 L1259 218.7 L1259.5 217.3 L1260 217.1 L1260.5 218.3 L1261 217.3 L1261.5 213 L1262 210 L1262.5 207 L1263 210.3 L1263.5 216.9 L1264 219.2 L1264.5 219 L1265 219.6 L1265.5 217.3 L1266 212.8 L1266.5 210.9 L1267 211.1 L1267.5 211.6 L1268 212 L1268.5 214.7 L1269 216.6 L1269.5 227.3 L1270 248.3 L1270.5 271.2 L1271 289.6 L1271.5 325.6 L1272 361.5 L1272.5 397.4 L1273 433.3 L1273.5 434.7 L1274 434.7 L1274.5 434.7 L1275 434.7 L1275.5 434.7 L1276 434.7 L1276.5 434.7 L1277 434.7 L1277.5 434.7 L1278 434.7 L1278.5 434.7 L1279 434.7 L1279.5 434.7 L1280 434.7 L1280.5 434.7 L1281 434.7 L1281.5 415.6 L1282 385.8 L1282.5 355.9 L1283 326.1 L1283.5 296.2 L1284 290.6 L1284.5 289.7 L1285 288.7 L1285.5 287.7 L1286 286.8 L1286.5 285.8 L1287 284.8 L1287.5 283.8 L1288 282.5 L1288.5 288.4 L1289 291.4 L1289.5 287.8 L1290 274.4 L1290.5 258.7 L1291 249 L1291.5 241.2 L1292 228.3 L1292.5 219.9 L1293 215.6 L1293.5 210.1 L1294 210.1 L1294.5 213.9 L1295 212.1 L1295.5 209.1 L1296 207.6 L1296.5 208 L1297 211.1 L1297.5 214.5 L1298 216.4 L1298.5 216.8 L1299 218 L1299.5 220.7 L1300 218.8 L1300.5 213.7 L1301 212.2 L1301.5 215.4 L1302 220.1 L1302.5 219.9 L1303 216.6 L1303.5 217.9 L1304 220.1 L1304.5 236.9 L1305 256.3 L1305.5 276.3 L1306 306.9 L1306.5 342.8 L1307 378.7 L1307.5 414.6 L1308 434.7 L1308.5 434.7 L1309 434.7 L1309.5 434.7 L1310 434.7 L1310.5 434.7 L1311 434.7 L1311.5 434.7 L1312 434.7 L1312.5 434.7 L1313 434.7 L1313.5 434.7 L1314 434.7 L1314.5 434.7 L1315 434.7 L1315.5 434.7 L1316 431.1 L1316.5 401.3 L1317 371.5 L1317.5 341.7 L1318 311.9 L1318.5 291.3 L1319 290.3 L1319.5 289.4 L1320 288.4 L1320.5 287.4 L1321 286.4 L1321.5 285.4 L1322 284.4 L1322.5 283.3 L1323 282.2 L1323.5 281.9 L1324 279.3 L1324.5 266.6 L1325 251.6 L1325.5 243.3 L1326 237.6 L1326.5 228.7 L1327 222.8 L1327.5 223.2 L1328 222.2 L1328.5 223.3 L1329 221 L1329.5 214.1 L1330 213.4 L1330.5 214.8 L1331 215.1 L1331.5 217.5 L1332 217.1 L1332.5 215.2 L1333 212.6 L1333.5 209.5 L1334 208.4 L1334.5 210.4 L1335 210.1 L1335.5 211.1 L1336 213.9 L1336.5 214.1 L1337 211.9 L1337.5 207.9 L1338 209.6 L1338.5 217.5 L1339 232.7 L1339.5 251.3 L1340 268.5 L1340.5 288.2 L1341 324.1 L1341.5 360 L1342 395.9 L1342.5 431.8 L1343 434.7 L1343.5 434.7 L1344 434.7 L1344.5 434.7 L1345 434.7 L1345.5 434.7 L1346 434.7 L1346.5 434.7 L1347 434.7 L1347.5 434.7 L1348 434.7 L1348.5 434.7 L1349 434.7 L1349.5 434.7 L1350 434.7 L1350.5 434.7 L1351 416.8 L1351.5 386.9 L1352 357.1 L1352.5 327.2 L1353 297.4 L1353.5 290.6 L1354 289.7 L1354.5 288.7 L1355 287.8 L1355.5 286.8 L1356 285.8 L1356.5 284.9 L1357 283.9 L1357.5 282.5 L1358 281.9 L1358.5 279.7 L1359 273.3 L1359.5 264.1 L1360 256.4 L1360.5 247.2 L1361 239.4 L1361.5 232 L1362 226.9 L1362.5 227.5 L1363 228.4 L1363.5 222.5 L1364 215.8 L1364.5 214.8 L1365 211.2 L1365.5 206 L1366 205.6 L1366.5 207.5 L1367 206.7 L1367.5 204.1 L1368 204.6 L1368.5 209.1 L1369 209.9 L1369.5 204.3 L1370 201.3 L1370.5 204.2 L1371 206.9 L1371.5 205.9 L1372 204.4 L1372.5 205.7 L1373 212.6 L1373.5 216.5 L1374 237.6 L1374.5 258.9 L1375 277.5 L1375.5 305.4 L1376 341.3 L1376.5 377.3 L1377 413.2 L1377.5 434.7 L1378 434.7 L1378.5 434.7 L1379 434.7 L1379.5 434.7 L1380 434.7 L1380.5 434.7 L1381 434.7 L1381.5 434.7 L1382 434.7 L1382.5 434.7 L1383 434.7 L1383.5 434.7 L1384 434.7 L1384.5 434.7 L1385 434.7 L1385.5 432.3 L1386 402.4 L1386.5 372.5 L1387 342.6 L1387.5 312.7 L1388 290.9 L1388.5 289.9 L1389 289 L1389.5 288.1 L1390 287.2 L1390.5 286.2 L1391 285.3 L1391.5 284.4 L1392 283 L1392.5 274.5 L1393 274.1 L1393.5 272.2 L1394 263 L1394.5 252.6 L1395 245.6 L1395.5 240.5 L1396 228.9 L1396.5 218.8 L1397 220.2 L1397.5 219.1 L1398 213.6 L1398.5 213.1 L1399 218 L1399.5 223.2 L1400 224.4 L1400.5 225.9 L1401 225.1 L1401.5 221.6 L1402 218.9 L1402.5 212.9 L1403 208.4 L1403.5 213.1 L1404 221.4 L1404.5 228 L1405 231.3 L1405.5 232 L1406 231.9 L1406.5 231.7 L1407 230.4 L1407.5 231.7 L1408 237.8 L1408.5 249.2 L1409 261.8 L1409.5 271.1 L1410 286.8 L1410.5 322.7 L1411 358.6 L1411.5 394.5 L1412 430.4 L1412.5 434.7 L1413 434.7 L1413.5 434.7 L1414 434.7 L1414.5 434.7 L1415 434.7 L1415.5 434.7 L1416 434.7 L1416.5 434.7 L1417 434.7 L1417.5 434.7 L1418 434.7 L1418.5 434.7 L1419 434.7 L1419.5 434.7 L1420 434.7 L1420.5 418 L1421 388.1 L1421.5 358.3 L1422 328.4 L1422.5 298.6 L1423 290.7 L1423.5 289.7 L1424 288.8 L1424.5 287.8 L1425 286.8 L1425.5 285.9 L1426 284.9 L1426.5 283.9 L1427 282.6 L1427.5 280.8 L1428 277.9 L1428.5 276.8 L1429 266.6 L1429.5 250.8 L1430 242.2 L1430.5 240.3 L1431 238.4 L1431.5 236.3 L1432 230.9 L1432.5 223.7 L1433 222.4 L1433.5 223.2 L1434 218.6 L1434.5 213.6 L1435 214.4 L1435.5 213.8 L1436 209.6 L1436.5 210.2 L1437 215.5 L1437.5 221.9 L1438 226.7 L1438.5 227 L1439 223.6 L1439.5 219.4 L1440 215.9 L1440.5 214.3 L1441 215.2 L1441.5 218.8 L1442 224.9 L1442.5 231.9 L1443 233.6 L1443.5 248.4 L1444 264.7 L1444.5 282.4 L1445 304 L1445.5 339.9 L1446 375.8 L1446.5 411.7 L1447 434.7 L1447.5 434.7 L1448 434.7 L1448.5 434.7 L1449 434.7 L1449.5 434.7 L1450 434.7 L1450.5 434.7 L1451 434.7 L1451.5 434.7 L1452 434.7 L1452.5 434.7 L1453 434.7 L1453.5 434.7 L1454 434.7 L1454.5 434.7 L1455 433.5 L1455.5 403.6 L1456 373.8 L1456.5 343.9 L1457 314.1 L1457.5 291.1 L1458 290.2 L1458.5 289.2 L1459 288.3 L1459.5 287.3 L1460 286.4 L1460.5 285.4 L1461 284.4 L1461.5 283.3 L1462 286.6 L1462.5 287.6 L1463 282.8 L1463.5 270.7 L1464 260.4 L1464.5 249.9 L1465 237.5 L1465.5 226.8 L1466 221.8 L1466.5 223.7 L1467 221.1 L1467.5 217.8 L1468 220 L1468.5 219.1 L1469 213.5 L1469.5 213.5 L1470 222.9 L1470.5 230.2 L1471 228.5 L1471.5 223.9 L1472 218.9 L1472.5 216.8 L1473 219.2 L1473.5 221.9 L1474 222.2 L1474.5 222.6 L1475 220.9 L1475.5 215.1 L1476 208.7 L1476.5 211.9 L1477 222 L1477.5 229.9 L1478 241 L1478.5 259.5 L1479 275.1 L1479.5 285.3 L1480 321.2 L1480.5 357.1 L1481 393.1 L1481.5 429 L1482 434.7 L1482.5 434.7 L1483 434.7 L1483.5 434.7 L1484 434.7 L1484.5 434.7 L1485 434.7 L1485.5 434.7 L1486 434.7 L1486.5 434.7 L1487 434.7 L1487.5 434.7 L1488 434.7 L1488.5 434.7 L1489 434.7 L1489.5 434.7 L1490 419.1 L1490.5 389.2 L1491 359.3 L1491.5 329.4 L1492 299.4 L1492.5 290.4 L1493 289.5 L1493.5 288.6 L1494 287.6 L1494.5 286.7 L1495 285.8 L1495.5 284.9 L1496 284 L1496.5 282.2 L1497 280.7 L1497.5 283.5 L1498 284.2 L1498.5 272.3 L1499 257.4 L1499.5 248.6 L1500 240.5 L1500.5 234.4 L1501 230.3 L1501.5 224.6 L1502 217.5 L1502.5 211.3 L1503 208.2 L1503.5 209.3 L1504 211.7 L1504.5 213.1 L1505 212.1 L1505.5 212.3 L1506 214.3 L1506.5 215.1 L1507 214.7 L1507.5 214.3 L1508 215.8 L1508.5 218.7 L1509 219.2 L1509.5 219.4 L1510 221.7 L1510.5 219.6 L1511 218.7 L1511.5 223.8 L1512 226.1 L1512.5 225.6 L1513 240 L1513.5 256.3 L1514 275.8 L1514.5 302.6 L1515 338.5 L1515.5 374.4 L1516 410.3 L1516.5 434.7 L1517 434.7 L1517.5 434.7 L1518 434.7 L1518.5 434.7 L1519 434.7 L1519.5 434.7 L1520 434.7 L1520.5 434.7 L1521 434.7 L1521.5 434.7 L1522 434.7 L1522.5 434.7 L1523 434.7 L1523.5 434.7 L1524 434.7 L1524.5 434.7 L1525 404.7 L1525.5 374.7 L1526 344.7 L1526.5 314.7 L1527 290.5 L1527.5 289.6 L1528 288.7 L1528.5 287.9 L1529 287 L1529.5 286.1 L1530 285.3 L1530.5 284.4 L1531 282.9 L1531.5 276 L1532 276.7 L1532.5 273.8 L1533 263.6 L1533.5 249.5 L1534 241.6 L1534.5 240.6 L1535 233.6 L1535.5 222.6 L1536 219.6 L1536.5 217.6 L1537 214.5 L1537.5 219.3 L1538 224.7 L1538.5 229.9 L1539 232.5 L1539.5 231.9 L1540 234.6 L1540.5 237.2 L1541 235.1 L1541.5 232.3 L1542 233.2 L1542.5 237.5 L1543 241.5 L1543.5 241.6 L1544 240.1 L1544.5 236 L1545 232.4 L1545.5 229.1 L1546 225.7 L1546.5 228.4 L1547 235.2 L1547.5 244.7 L1548 256.7 L1548.5 266.6 L1549 283.9 L1549.5 319.8 L1550 355.7 L1550.5 391.6 L1551 427.5 L1551.5 434.7 L1552 434.7 L1552.5 434.7 L1553 434.7 L1553.5 434.7 L1554 434.7 L1554.5 434.7 L1555 434.7 L1555.5 434.7 L1556 434.7 L1556.5 434.7 L1557 434.7 L1557.5 434.7 L1558 434.7 L1558.5 434.7 L1559 434.7 L1559.5 420.4 L1560 390.7 L1560.5 361 L1561 331.2 L1561.5 301.5 L1562 291.3 L1562.5 290.2 L1563 289.2 L1563.5 288.2 L1564 287.1 L1564.5 286.1 L1565 285.1 L1565.5 284 L1566 283.3 L1566.5 282.6 L1567 282 L1567.5 281.4 L1568 273.1 L1568.5 264.5 L1569 253.1 L1569.5 240 L1570 227.4 L1570.5 221.3 L1571 219.9 L1571.5 217.6 L1572 216.6 L1572.5 218.6 L1573 223.4 L1573.5 223.1 L1574 218.8 L1574.5 217.7 L1575 215.7 L1575.5 214.1 L1576 214.9 L1576.5 214.3 L1577 215.8 L1577.5 219 L1578 212.7 L1578.5 206.6 L1579 209.5 L1579.5 211.4 L1580 208.4 L1580.5 208.5 L1581 213.6 L1581.5 218.5 L1582 220.3 L1582.5 235.1 L1583 252.9 L1583.5 272.2 L1584 301.1 L1584.5 337 L1585 372.9 L1585.5 408.8 L1586 434.7 L1586.5 434.7 L1587 434.7 L1587.5 434.7 L1588 434.7 L1588.5 434.7 L1589 434.7 L1589.5 434.7 L1590 434.7 L1590.5 434.7 L1591 434.7 L1591.5 434.7 L1592 434.7 L1592.5 434.7 L1593 434.7 L1593.5 434.7 L1594 434.7 L1594.5 405.8 L1595 375.6 L1595.5 345.5 L1596 315.3 L1596.5 289.9 L1597 289.1 L1597.5 288.3 L1598 287.5 L1598.5 286.7 L1599 286 L1599.5 285.2 L1600 284.4 L1600.5 282.7 L1601 274.9 L1601.5 269.5 L1602 269.3 L1602.5 267.4 L1603 257.3 L1603.5 245.5 L1604 240.9 L1604.5 236.9 L1605 231.4 L1605.5 224.8 L1606 216.7 L1606.5 210.6 L1607 206.6 L1607.5 202 L1608 197.4 L1608.5 192.1 L1609 193.3 L1609.5 199.4 L1610 206.6 L1610.5 211.7 L1611 206.5 L1611.5 198.6 L1612 196.4 L1612.5 198.4 L1613 197.5 L1613.5 199.2 L1614 205 L1614.5 210.2 L1615 208 L1615.5 203.8 L1616 203.2 L1616.5 208.6 L1617 219.5 L1617.5 237.1 L1618 255.6 L1618.5 283 L1619 318.4 L1619.5 354.3 L1620 390.2 L1620.5 426.1 L1621 434.7 L1621.5 434.7 L1622 434.7 L1622.5 434.7 L1623 434.7 L1623.5 434.7 L1624 434.7 L1624.5 434.7 L1625 434.7 L1625.5 434.7 L1626 434.7 L1626.5 434.7 L1627 434.7 L1627.5 434.7 L1628 434.7 L1628.5 434.7 L1629 421.5 L1629.5 391.6 L1630 361.7 L1630.5 331.8 L1631 301.9 L1631.5 290.6 L1632 289.6 L1632.5 288.7 L1633 287.8 L1633.5 286.8 L1634 285.9 L1634.5 285 L1635 284.1 L1635.5 282.4 L1636 279.4 L1636.5 275.8 L1637 270.9 L1637.5 259 L1638 250.4 L1638.5 244.2 L1639 236.9 L1639.5 226.9 L1640 220.5 L1640.5 219.4 L1641 219.4 L1641.5 222.3 L1642 225.6 L1642.5 222.7 L1643 215.7 L1643.5 210.6 L1644 208.8 L1644.5 209.5 L1645 208.8 L1645.5 208.4 L1646 212.3 L1646.5 218.3 L1647 221.1 L1647.5 221.9 L1648 221.6 L1648.5 217.9 L1649 215.2 L1649.5 214.4 L1650 213.3 L1650.5 216.5 L1651 223.3 L1651.5 228.4 L1652 242.7 L1652.5 256.8 L1653 269.8 L1653.5 299.7 L1654 335.6 L1654.5 371.5 L1655 407.4 L1655.5 434.7 L1656 434.7 L1656.5 434.7 L1657 434.7 L1657.5 434.7 L1658 434.7 L1658.5 434.7 L1659 434.7 L1659.5 434.7 L1660 434.7 L1660.5 434.7 L1661 434.7 L1661.5 434.7 L1662 434.7 L1662.5 434.7 L1663 434.7 L1663.5 434.7 L1664 407 L1664.5 376.9 L1665 346.8 L1665.5 316.6 L1666 290 L1666.5 289.2 L1667 288.4 L1667.5 287.6 L1668 286.8 L1668.5 286 L1669 285.2 L1669.5 284.4 L1670 282.9 L1670.5 272.3 L1671 269.6 L1671.5 267 L1672 258.4 L1672.5 247.5 L1673 238.3 L1673.5 231.6 L1674 224.2 L1674.5 221.5 L1675 223.6 L1675.5 224.1 L1676 221.9 L1676.5 221.3 L1677 219.5 L1677.5 221.2 L1678 224.2 L1678.5 221 L1679 217.2 L1679.5 218.5 L1680 219.7 L1680.5 219.3 L1681 223.5 L1681.5 228.2 L1682 227.3 L1682.5 221.4 L1683 215.7 L1683.5 215.3 L1684 220.8 L1684.5 226.9 L1685 229 L1685.5 229.8 L1686 233.7 L1686.5 241.3 L1687 252.8 L1687.5 265 L1688 282.6 L1688.5 316.9 L1689 352.8 L1689.5 388.7 L1690 424.6 L1690.5 434.7 L1691 434.7 L1691.5 434.7 L1692 434.7 L1692.5 434.7 L1693 434.7 L1693.5 434.7 L1694 434.7 L1694.5 434.7 L1695 434.7 L1695.5 434.7 L1696 434.7 L1696.5 434.7 L1697 434.7 L1697.5 434.7 L1698 434.7 L1698.5 422.8 L1699 393.1 L1699.5 363.4 L1700 333.7 L1700.5 303.9 L1701 291.4 L1701.5 290.4 L1702 289.3 L1702.5 288.3 L1703 287.2 L1703.5 286.2 L1704 285.2 L1704.5 284.1 L1705 283.4 L1705.5 282.9 L1706 282.3 L1706.5 279.7 L1707 274.1 L1707.5 267.8 L1708 258.4 L1708.5 247.4 L1709 233.9 L1709.5 220.8 L1710 216.8 L1710.5 220 L1711 223.7 L1711.5 223.1 L1712 218.8 L1712.5 213.4 L1713 212.3 L1713.5 215 L1714 220.3 L1714.5 225.4 L1715 226.1 L1715.5 223.5 L1716 220.5 L1716.5 221.2 L1717 223.1 L1717.5 220.2 L1718 217.8 L1718.5 221.6 L1719 224.4 L1719.5 223.4 L1720 222.1 L1720.5 222.2 L1721 221 L1721.5 235.8 L1722 258.7 L1722.5 276.6 L1723 298.3 L1723.5 334.2 L1724 370.1 L1724.5 406 L1725 434.7 L1725.5 434.7 L1726 434.7 L1726.5 434.7 L1727 434.7 L1727.5 434.7 L1728 434.7 L1728.5 434.7 L1729 434.7 L1729.5 434.7 L1730 434.7 L1730.5 434.7 L1731 434.7 L1731.5 434.7 L1732 434.7 L1732.5 434.7 L1733 434.7 L1733.5 408.5 L1734 378.8 L1734.5 349.1 L1735 319.3 L1735.5 291.9 L1736 290.8 L1736.5 289.8 L1737 288.8 L1737.5 287.7 L1738 286.7 L1738.5 285.7 L1739 284.6 L1739.5 283.7 L1740 283 L1740.5 282.3 L1741 274.1 L1741.5 273.3 L1742 263.9 L1742.5 251.7 L1743 245.4 L1743.5 238.9 L1744 227.9 L1744.5 222.4 L1745 217.8 L1745.5 213.4 L1746 213.4 L1746.5 216.4 L1747 220.8 L1747.5 224.2 L1748 223.4 L1748.5 221.9 L1749 222.3 L1749.5 223.5 L1750 221.7 L1750.5 216 L1751 215.3 L1751.5 221.7 L1752 224.5 L1752.5 223.1 L1753 220.4 L1753.5 220.9 L1754 223.5 L1754.5 225 L1755 227.1 L1755.5 231.2 L1756 236.9 L1756.5 251.6 L1757 265.2 L1757.5 282.1 L1758 315.5 L1758.5 351.4 L1759 387.3 L1759.5 423.2 L1760 434.7 L1760.5 434.7 L1761 434.7 L1761.5 434.7 L1762 434.7 L1762.5 434.7 L1763 434.7 L1763.5 434.7 L1764 434.7 L1764.5 434.7 L1765 434.7 L1765.5 434.7 L1766 434.7 L1766.5 434.7 L1767 434.7 L1767.5 434.7 L1768 424 L1768.5 394.2 L1769 364.5 L1769.5 334.7 L1770 305 L1770.5 291.3 L1771 290.3 L1771.5 289.3 L1772 288.2 L1772.5 287.2 L1773 286.2 L1773.5 285.2 L1774 284.1 L1774.5 283.3 L1775 282.5 L1775.5 284.9 L1776 286.2 L1776.5 272.8 L1777 257.6 L1777.5 247.7 L1778 243.7 L1778.5 233.7 L1779 226.1 L1779.5 227.2 L1780 224.5 L1780.5 217.8 L1781 216.5 L1781.5 222.5 L1782 223.9 L1782.5 216.8 L1783 214.3 L1783.5 220.7 L1784 224.2 L1784.5 220.1 L1785 217.7 L1785.5 218.7 L1786 222.4 L1786.5 225.4 L1787 222.5 L1787.5 217.4 L1788 220.1 L1788.5 228 L1789 226.2 L1789.5 220.3 L1790 225.9 L1790.5 233.5 L1791 245 L1791.5 259.2 L1792 275.5 L1792.5 296.8 L1793 332.7 L1793.5 368.6 L1794 404.5 L1794.5 434.7 L1795 434.7 L1795.5 434.7 L1796 434.7 L1796.5 434.7 L1797 434.7 L1797.5 434.7 L1798 434.7 L1798.5 434.7 L1799 434.7 L1799.5 434.7 L1800 434.7 L1800.5 434.7 L1801 434.7 L1801.5 434.7 L1802 434.7 L1802.5 434.7 L1803 409.4 L1803.5 379.3 L1804 349.2 L1804.5 319.1 L1805 290.1 L1805.5 289.3 L1806 288.5 L1806.5 287.7 L1807 286.9 L1807.5 286.1 L1808 285.3 L1808.5 284.5 L1809 283.2 L1809.5 292 L1810 285.6 L1810.5 276.3 L1811 264.8 L1811.5 251.8 L1812 242.7 L1812.5 239.4 L1813 233.6 L1813.5 226.7 L1814 221.8 L1814.5 220 L1815 219.4 L1815.5 219.1 L1816 218.5 L1816.5 217.3 L1817 213.9 L1817.5 214.1 L1818 221 L1818.5 229.2 L1819 233.1 L1819.5 231.5 L1820 231.9 L1820.5 232.8 L1821 228.1 L1821.5 225.5 L1822 228.1 L1822.5 230.2 L1823 229.6 L1823.5 229 L1824 230.2 L1824.5 227 L1825 224.9 L1825.5 232 L1826 250.1 L1826.5 268.7 L1827 285.8 L1827.5 314.1 L1828 350 L1828.5 385.9 L1829 421.8 L1829.5 434.7 L1830 434.7 L1830.5 434.7 L1831 434.7 L1831.5 434.7 L1832 434.7 L1832.5 434.7 L1833 434.7 L1833.5 434.7 L1834 434.7 L1834.5 434.7 L1835 434.7 L1835.5 434.7 L1836 434.7 L1836.5 434.7 L1837 434.7 L1837.5 425.1 L1838 395.2 L1838.5 365.3 L1839 335.5 L1839.5 305.6 L1840 290.7 L1840.5 289.8 L1841 288.8 L1841.5 287.9 L1842 287 L1842.5 286 L1843 285.1 L1843.5 284.2 L1844 282.7 L1844.5 287.8 L1845 281 L1845.5 273.5 L1846 260.8 L1846.5 249.9 L1847 244.9 L1847.5 242.9 L1848 237.7 L1848.5 227.5 L1849 218.7 L1849.5 214.6 L1850 213.2 L1850.5 214.3 L1851 216.7 L1851.5 217.7 L1852 215.9 L1852.5 213.5 L1853 212.8 L1853.5 214.1 L1854 217.9 L1854.5 222 L1855 223.8 L1855.5 223.6 L1856 224.2 L1856.5 226 L1857 220.6 L1857.5 214.7 L1858 219 L1858.5 223.3 L1859 219.9 L1859.5 218.7 L1860 222.8 L1860.5 236.7 L1861 253.6 L1861.5 266.5 L1862 295.4 L1862.5 331.3 L1863 367.2 L1863.5 403.1 L1864 434.7 L1864.5 434.7 L1865 434.7 L1865.5 434.7 L1866 434.7 L1866.5 434.7 L1867 434.7 L1867.5 434.7 L1868 434.7 L1868.5 434.7 L1869 434.7" fill="none" stroke="#7eb26d" stroke-width="2.6" stroke-linejoin="round"/><rect x="983.5" y="469.2" width="12" height="4" rx="1" fill="#7eb26d"/><text x="998.5" y="473.8" class="lg" textLength="101" lengthAdjust="spacingAndGlyphs">PV-array-voltage.last</text><text x="1106" y="473.8" class="lg" textLength="57.8" lengthAdjust="spacingAndGlyphs">Current: 0 V</text><line x1="381.7" y1="533" x2="927.4" y2="533" class="g"/><line x1="381.7" y1="568.3" x2="927.4" y2="568.3" class="g"/><line x1="381.7" y1="603.6" x2="927.4" y2="603.6" class="g"/><line x1="381.7" y1="639" x2="927.4" y2="639" class="g"/><line x1="381.7" y1="674.3" x2="927.4" y2="674.3" class="g"/><line x1="446.3" y1="533" x2="446.3" y2="674.3" class="g"/><line x1="511.9" y1="533" x2="511.9" y2="674.3" class="g"/><line x1="577.4" y1="533" x2="577.4" y2="674.3" class="g"/><line x1="643" y1="533" x2="643" y2="674.3" class="g"/><line x1="708.5" y1="533" x2="708.5" y2="674.3" class="g"/><line x1="774.1" y1="533" x2="774.1" y2="674.3" class="g"/><line x1="839.6" y1="533" x2="839.6" y2="674.3" class="g"/><line x1="905.2" y1="533" x2="905.2" y2="674.3" class="g"/><text x="376.7" y="535.6" class="yl">16.0 V</text><text x="376.7" y="570.9" class="yl">15.0 V</text><text x="376.7" y="606.2" class="yl">14.0 V</text><text x="376.7" y="641.6" class="yl">13.0 V</text><text x="376.7" y="676.9" class="yl">12.0 V</text><text x="446.3" y="690.7" class="xl">5/10</text><text x="511.9" y="690.7" class="xl">5/13</text><text x="577.4" y="690.7" class="xl">5/16</text><text x="643" y="690.7" class="xl">5/19</text><text x="708.5" y="690.7" class="xl">5/22</text><text x="774.1" y="690.7" class="xl">5/25</text><text x="839.6" y="690.7" class="xl">5/28</text><text x="905.2" y="690.7" class="xl">5/31</text><path d="M381.7 653.8 L382.1 654.2 L382.5 654.7 L382.9 655.1 L383.3 655.5 L383.7 655.9 L384.1 656.4 L384.5 654.1 L384.9 651.7 L385.3 650.2 L385.7 651.3 L386.1 653.2 L386.5 654.4 L386.9 653.6 L387.3 651.6 L387.7 648.1 L388.1 643.4 L388.5 638.1 L388.9 631.5 L389.3 623.3 L389.7 613.5 L390.1 604.6 L390.5 592 L390.9 576.4 L390.9 576.4 L391.3 590 L391.7 603.4 L392.1 608.9 L392.5 613.4 L392.9 612.9 L393.3 612.9 L393.7 612.6 L394.1 612.4 L394.5 612.6 L394.9 613.3 L395.3 615.3 L395.7 618 L396.1 620.9 L396.5 622.2 L396.9 621.7 L397.3 621.3 L397.7 622.9 L398.1 626 L398.5 630.3 L398.9 634 L399.3 637 L399.7 639.4 L400.1 641.6 L400.5 643 L400.9 643.8 L401.3 645.3 L401.7 646.8 L402.1 647.8 L402.5 648.2 L402.9 649.2 L403.3 650.6 L403.7 652.3 L404.1 652.2 L404.5 651.5 L404.9 652.3 L405.3 653.2 L405.7 654.6 L406.1 655.4 L406.5 655 L406.9 654.4 L407.3 654.9 L407.7 655.2 L408.1 655.9 L408.5 656 L408.9 652.4 L409.3 648.3 L409.7 644.7 L410.1 642.6 L410.5 635.3 L410.9 628.2 L411.3 622.6 L411.7 614 L412.1 601 L412.5 579.4 L412.8 565.9 L412.9 572.9 L413.3 591.8 L413.7 607.6 L414.1 611 L414.5 611.4 L414.9 610.6 L415.3 610.3 L415.7 610.8 L416.1 611 L416.5 610.4 L416.9 611 L417.3 613.7 L417.7 616.8 L418.1 619.6 L418.5 621.9 L418.9 624.3 L419.3 626.4 L419.7 628.2 L420.1 630.3 L420.5 633.2 L420.9 635.9 L421.3 638.3 L421.7 641.2 L422.1 644.6 L422.5 645.1 L422.9 644.3 L423.3 644.6 L423.7 646.4 L424.1 648 L424.5 648.9 L424.9 649.4 L425.3 650.9 L425.7 652.5 L426.1 652.7 L426.5 652.7 L426.9 653.9 L427.3 654.7 L427.7 654.3 L428.1 654.3 L428.5 653.8 L428.9 653 L429.3 652.5 L429.7 653.3 L430.1 655 L430.5 654.5 L430.9 651 L431.3 646.3 L431.7 642.5 L432.1 639.1 L432.5 633.3 L432.9 626.3 L433.3 616.5 L433.7 607.2 L434.1 597.3 L434.5 584.6 L434.6 581.4 L434.9 589.7 L435.3 600.9 L435.7 608 L436.1 613.5 L436.5 614.5 L436.9 613.5 L437.3 614.4 L437.7 617 L438.1 619 L438.5 619.1 L438.9 619.5 L439.3 621.6 L439.7 624 L440.1 625.2 L440.5 625.4 L440.9 624.5 L441.3 624.9 L441.7 627.9 L442.1 631.7 L442.5 634.5 L442.9 637.2 L443.3 639.5 L443.7 639.8 L444.1 639.7 L444.5 641.2 L444.9 643.4 L445.3 645.8 L445.7 648 L446.1 649.4 L446.5 648.7 L446.9 647.1 L447.3 646.8 L447.7 648.2 L448.1 650.2 L448.5 652.1 L448.9 653.4 L449.3 653.6 L449.7 653.7 L450.1 655.4 L450.5 655.9 L450.9 657.6 L451.3 659.2 L451.7 659.7 L452.1 659.7 L452.5 655.5 L452.9 650.3 L453.3 646.4 L453.7 642.6 L454.1 635.6 L454.5 628 L454.9 620.9 L455.3 612.1 L455.7 603.5 L456.1 592.5 L456.4 581.4 L456.5 582.8 L456.9 593.9 L457.3 604.5 L457.7 606.4 L458.1 608.8 L458.5 608.8 L458.9 607.8 L459.3 607.4 L459.7 608 L460.1 610 L460.5 612.6 L460.9 614.4 L461.3 615.6 L461.7 617.7 L462.1 619.4 L462.5 621 L462.9 624.3 L463.3 627.7 L463.7 629.1 L464.1 630.6 L464.5 633.8 L464.9 637.4 L465.3 640.1 L465.7 642.3 L466.1 643.4 L466.5 643.4 L466.9 643.7 L467.3 645.3 L467.7 646.5 L468.1 648.3 L468.5 649.1 L468.9 649 L469.3 649.9 L469.7 652 L470.1 653.8 L470.5 654.1 L470.9 653.3 L471.3 652.6 L471.7 654.1 L472.1 657 L472.5 658.4 L472.9 658.9 L473.3 658.4 L473.7 657.3 L474.1 656.2 L474.5 653 L474.9 650.1 L475.3 646.3 L475.7 642.4 L476.1 636.2 L476.5 629.3 L476.9 620.7 L477.3 611.6 L477.7 600.3 L478.1 586.7 L478.3 580 L478.5 585.9 L478.9 597.7 L479.3 604.3 L479.7 609.7 L480.1 614.2 L480.5 615.7 L480.9 616.1 L481.3 615.6 L481.7 616 L482.1 618 L482.5 619.6 L482.9 621.9 L483.3 623.8 L483.7 623.5 L484.1 622.2 L484.5 622.9 L484.9 625.3 L485.3 628.5 L485.7 631.8 L486.1 635.3 L486.5 636.7 L486.9 637.5 L487.3 639.4 L487.7 641.3 L488.1 642.8 L488.5 644.5 L488.9 645.2 L489.3 645.4 L489.7 646.5 L490.1 648 L490.5 649.3 L490.9 650 L491.3 650.1 L491.7 650.2 L492.1 651.9 L492.5 655.1 L492.9 657 L493.3 656.4 L493.7 654.1 L494.1 656.1 L494.5 657.7 L494.9 656.8 L495.3 655.6 L495.7 656 L496.1 654 L496.5 649.7 L496.9 646 L497.3 643.7 L497.7 639.7 L498.1 631.3 L498.5 622.2 L498.9 614 L499.3 607.2 L499.7 595.7 L500.1 583 L500.1 581.4 L500.5 591.1 L500.9 601.4 L501.3 605 L501.7 607.9 L502.1 608.6 L502.5 609.7 L502.9 610.9 L503.3 610.5 L503.7 610.6 L504.1 613.2 L504.5 614.7 L504.9 615.2 L505.3 617.6 L505.7 621.1 L506.1 623.2 L506.5 623.5 L506.9 624.5 L507.3 627.1 L507.7 630.6 L508.1 634.4 L508.5 638.3 L508.9 640.5 L509.3 641.5 L509.7 641.8 L510.1 642.1 L510.5 643.5 L510.9 645.4 L511.3 646.5 L511.7 648.4 L512.1 650.3 L512.5 651.6 L512.9 652.5 L513.3 652.3 L513.7 652 L514.1 652.2 L514.5 652.7 L514.9 653.6 L515.3 654.9 L515.7 655 L516.1 655 L516.5 655 L516.9 654.9 L517.3 654.7 L517.7 655.4 L518.1 654.1 L518.5 651.5 L518.9 647.1 L519.3 642.8 L519.7 635.3 L520.1 626.9 L520.5 619 L520.9 611.2 L521.3 604 L521.7 590.5 L522 580.7 L522.1 583.6 L522.5 595 L522.9 604.2 L523.3 607.7 L523.7 610.1 L524.1 610.1 L524.5 610.4 L524.9 611 L525.3 612 L525.7 614.3 L526.1 615.6 L526.5 615.8 L526.9 616.7 L527.3 618.7 L527.7 620 L528.1 621.3 L528.5 624.4 L528.9 628.1 L529.3 631.1 L529.7 634.1 L530.1 635.4 L530.5 636.5 L530.9 637.6 L531.3 639.5 L531.7 641.3 L532.1 642.7 L532.5 644.1 L532.9 646.1 L533.3 647.5 L533.7 647.7 L534.1 647.9 L534.5 649 L534.9 651.1 L535.3 652.1 L535.7 650.2 L536.1 648.5 L536.5 649.8 L536.9 652.5 L537.3 654.5 L537.7 654.7 L538.1 654.6 L538.5 654.3 L538.9 653.9 L539.3 653.2 L539.7 652.9 L540.1 651.8 L540.5 649.3 L540.9 646.8 L541.3 643.9 L541.7 635.5 L542.1 626.5 L542.5 618 L542.9 609.2 L543.3 597.4 L543.7 580.6 L543.9 574.3 L544.1 583.5 L544.5 598.2 L544.9 607.4 L545.3 611.1 L545.7 611.9 L546.1 610.9 L546.5 610.4 L546.9 611.6 L547.3 613.3 L547.7 615.6 L548.1 619 L548.5 621.3 L548.9 622 L549.3 622.3 L549.7 622.5 L550.1 622.7 L550.5 623.1 L550.9 625.6 L551.3 629.7 L551.7 633.6 L552.1 636.3 L552.5 638.9 L552.9 640.9 L553.3 641.6 L553.7 641.9 L554.1 642.5 L554.5 643 L554.9 644.8 L555.3 647.5 L555.7 649.2 L556.1 650.2 L556.5 650.8 L556.9 651.4 L557.3 650.9 L557.7 650.7 L558.1 651.5 L558.5 653.2 L558.9 653.8 L559.3 655.5 L559.7 655 L560.1 654.9 L560.5 655 L560.9 654.8 L561.3 654.5 L561.7 652.5 L562.1 650.2 L562.5 647.9 L562.9 644.3 L563.3 638.6 L563.7 631.1 L564.1 622.9 L564.5 613.5 L564.9 605.1 L565.3 593.8 L565.7 580.7 L565.7 580.7 L566.1 592.2 L566.5 603.2 L566.9 607.1 L567.3 610.7 L567.7 610.4 L568.1 610.7 L568.5 612.2 L568.9 613.6 L569.3 615 L569.7 615.1 L570.1 615.6 L570.5 617.1 L570.9 619.7 L571.3 623.8 L571.7 626.7 L572.1 627.6 L572.5 628.7 L572.9 630.4 L573.3 632.7 L573.7 635.2 L574.1 638.1 L574.5 640.9 L574.9 643.2 L575.3 643.5 L575.7 643.8 L576.1 646 L576.5 646.5 L576.9 645.7 L577.3 647.1 L577.7 649.2 L578.1 649.6 L578.5 649.4 L578.9 650.4 L579.3 652.2 L579.7 652.8 L580.1 652.9 L580.5 653.1 L580.9 654.5 L581.3 656.7 L581.7 657.7 L582.1 656.2 L582.5 654.6 L582.9 654.8 L583.3 654.6 L583.7 651.2 L584.1 649 L584.5 646.2 L584.9 643 L585.3 635.7 L585.7 627.2 L586.1 619.2 L586.5 611.9 L586.9 602.1 L587.3 589.3 L587.5 581.4 L587.7 585.6 L588.1 596.7 L588.5 605.8 L588.9 608.2 L589.3 609.3 L589.7 609.5 L590.1 609.8 L590.5 610.7 L590.9 612.5 L591.3 614.1 L591.7 614 L592.1 614.6 L592.5 617 L592.9 621.6 L593.3 625.2 L593.7 627 L594.1 627 L594.5 627.5 L594.9 629.7 L595.3 633 L595.7 635.8 L596.1 638.4 L596.5 639.9 L596.9 641.5 L597.3 643.9 L597.7 646.3 L598.1 646.2 L598.5 645.8 L598.9 647.2 L599.3 649 L599.7 650.2 L600.1 650.5 L600.5 650.8 L600.9 652.9 L601.3 656.2 L601.7 658.5 L602.1 659 L602.5 659.6 L602.9 658.8 L603.3 656.7 L603.7 656.6 L604.1 657.6 L604.5 656.9 L604.9 656.7 L605.3 655.6 L605.7 652.9 L606.1 650.9 L606.5 648.4 L606.9 643.7 L607.3 634.8 L607.7 626.2 L608.1 618.8 L608.5 610.6 L608.9 596.7 L609.3 582.8 L609.4 579.3 L609.7 588.4 L610.1 600.6 L610.5 610.2 L610.9 615.9 L611.3 617.2 L611.7 617.2 L612.1 616.2 L612.5 615.8 L612.9 617.4 L613.3 618.8 L613.7 619.9 L614.1 622.5 L614.5 624.8 L614.9 625 L615.3 624.2 L615.7 624.1 L616.1 625.9 L616.5 628.2 L616.9 630.2 L617.3 633.9 L617.7 638.3 L618.1 640.2 L618.5 640.5 L618.9 641.5 L619.3 643.6 L619.7 645.8 L620.1 647.9 L620.5 649.2 L620.9 649.4 L621.3 649.5 L621.7 650.4 L622.1 652 L622.5 653.5 L622.9 654.5 L623.3 654.8 L623.7 654.5 L624.1 655.1 L624.5 656.3 L624.9 653.8 L625.3 654.5 L625.7 655.2 L626.1 655 L626.5 654 L626.9 653.2 L627.3 650.8 L627.7 648.2 L628.1 645.1 L628.5 642.4 L628.9 636.5 L629.3 629 L629.7 622 L630.1 613.8 L630.5 604.9 L630.9 592 L631.2 580.3 L631.3 581.8 L631.7 593.4 L632.1 605 L632.5 611.5 L632.9 615.7 L633.3 615 L633.7 614.9 L634.1 615.9 L634.5 616.5 L634.9 617.4 L635.3 618.8 L635.7 619.2 L636.1 618.7 L636.5 619.3 L636.9 621.3 L637.3 623.7 L637.7 625.2 L638.1 627.4 L638.5 629.9 L638.9 633.1 L639.3 636.3 L639.7 639.1 L640.1 640 L640.5 640.3 L640.9 641 L641.3 643.7 L641.7 647.3 L642.1 649.4 L642.5 650.2 L642.9 649.8 L643.3 649.2 L643.7 649.8 L644.1 651.4 L644.5 652.3 L644.9 653.6 L645.3 654.9 L645.7 655 L646.1 653.6 L646.5 652.5 L646.9 654.1 L647.3 653.2 L647.7 653 L648.1 654.3 L648.5 655.6 L648.9 655.2 L649.3 651.6 L649.7 647.9 L650.1 644.4 L650.5 640.7 L650.9 632.8 L651.3 625.8 L651.7 618.5 L652.1 610.1 L652.5 600.7 L652.9 588.8 L653.1 582.8 L653.3 588 L653.7 598.4 L654.1 605.7 L654.5 613 L654.9 617.2 L655.3 618 L655.7 619.4 L656.1 620.3 L656.5 620.8 L656.9 621.2 L657.3 620.9 L657.7 620.6 L658.1 620.7 L658.5 620.9 L658.9 621.7 L659.3 623.2 L659.7 625 L660.1 627.9 L660.5 631.4 L660.9 633.9 L661.3 635.3 L661.7 637.5 L662.1 639.1 L662.5 640.5 L662.9 642.6 L663.3 645.3 L663.7 647.2 L664.1 648.2 L664.5 648.5 L664.9 648.5 L665.3 648.3 L665.7 649.7 L666.1 652 L666.5 653.2 L666.9 653.8 L667.3 653.4 L667.7 653.2 L668.1 654.7 L668.5 654.6 L668.9 654 L669.3 652.7 L669.7 652.1 L670.1 652.7 L670.5 653.9 L670.9 652.6 L671.3 649.8 L671.7 646.7 L672.1 643.5 L672.5 639.1 L672.9 632.2 L673.3 625.4 L673.7 618 L674.1 609 L674.5 593.6 L674.9 577.4 L675 575.4 L675.3 587.8 L675.7 601.6 L676.1 606.9 L676.5 612.9 L676.9 615.8 L677.3 618 L677.7 618 L678.1 617.1 L678.5 617.6 L678.9 619 L679.3 619.7 L679.7 619.6 L680.1 620.8 L680.5 623 L680.9 623.9 L681.3 623.4 L681.7 625.1 L682.1 627.3 L682.5 630.3 L682.9 634.7 L683.3 638.2 L683.7 639.8 L684.1 640.3 L684.5 640.4 L684.9 640.9 L685.3 642.7 L685.7 644.7 L686.1 645.9 L686.5 647.5 L686.9 648.1 L687.3 648.4 L687.7 650.7 L688.1 652.4 L688.5 653.1 L688.9 654.4 L689.3 654.5 L689.7 653.4 L690.1 653.5 L690.5 655.4 L690.9 655.8 L691.3 656.4 L691.7 655.9 L692.1 653.8 L692.5 651.9 L692.9 649.5 L693.3 648.5 L693.7 647.4 L694.1 644.9 L694.5 637.9 L694.9 629.3 L695.3 621.4 L695.7 612.8 L696.1 604.5 L696.5 591.3 L696.8 582.1 L696.9 584.8 L697.3 595.6 L697.7 606.9 L698.1 609.1 L698.5 610.5 L698.9 609.7 L699.3 609.2 L699.7 609.9 L700.1 610.7 L700.5 612.1 L700.9 614.1 L701.3 616.4 L701.7 617.8 L702.1 620.1 L702.5 622.5 L702.9 623.8 L703.3 625.1 L703.7 627.1 L704.1 630.6 L704.5 634.9 L704.9 636.3 L705.3 636.7 L705.7 637.3 L706.1 639.4 L706.5 642.7 L706.9 645.9 L707.3 646.8 L707.7 646.1 L708.1 646.6 L708.5 648.6 L708.9 650 L709.3 651.4 L709.7 652.9 L710.1 651.9 L710.5 649.6 L710.9 649.2 L711.3 650.5 L711.7 651.8 L712.1 655.8 L712.5 658 L712.9 658.3 L713.3 656.6 L713.7 654.9 L714.1 653.9 L714.5 653.7 L714.9 652.3 L715.3 649.6 L715.7 645.4 L716.1 641.8 L716.5 635.5 L716.9 628 L717.3 618.1 L717.7 608.4 L718.1 599.3 L718.5 587.8 L718.6 583.5 L718.9 589.8 L719.3 599.9 L719.7 605.9 L720.1 613.4 L720.5 617.6 L720.9 619.4 L721.3 620.6 L721.7 619.5 L722.1 618.1 L722.5 619.3 L722.9 621.5 L723.3 623.5 L723.7 625.3 L724.1 624.8 L724.5 623.8 L724.9 624 L725.3 625.5 L725.7 627.2 L726.1 629.4 L726.5 633.4 L726.9 637.8 L727.3 642 L727.7 643.4 L728.1 642.8 L728.5 643.1 L728.9 644.6 L729.3 646.2 L729.7 646.7 L730.1 646.1 L730.5 646.8 L730.9 649.6 L731.3 651.4 L731.7 650.8 L732.1 650.6 L732.5 651.3 L732.9 651.5 L733.3 651.7 L733.7 653.5 L734.1 657.1 L734.5 659 L734.9 659.2 L735.3 658.6 L735.7 657.9 L736.1 657.6 L736.5 654.7 L736.9 650.8 L737.3 648.3 L737.7 645.4 L738.1 639.7 L738.5 631.9 L738.9 623.2 L739.3 613.9 L739.7 604.6 L740.1 592.4 L740.5 577.5 L740.5 577.5 L740.9 590.6 L741.3 606.6 L741.7 611.9 L742.1 616.9 L742.5 616.8 L742.9 617.8 L743.3 620 L743.7 620.9 L744.1 620.6 L744.5 620 L744.9 621.4 L745.3 623.4 L745.7 624.1 L746.1 623.7 L746.5 624.4 L746.9 625.9 L747.3 628.3 L747.7 629.6 L748.1 631.3 L748.5 633.8 L748.9 636.8 L749.3 639.4 L749.7 640.9 L750.1 641.6 L750.5 643 L750.9 644.9 L751.3 646.4 L751.7 647.1 L752.1 647 L752.5 647.4 L752.9 648.3 L753.3 649.9 L753.7 652.2 L754.1 652.8 L754.5 652.8 L754.9 654.9 L755.3 656.3 L755.7 655.9 L756.1 653.2 L756.5 654.3 L756.9 654.8 L757.3 655.9 L757.7 656.6 L758.1 655.9 L758.5 653 L758.9 650.5 L759.3 647.6 L759.7 644.4 L760.1 636.5 L760.5 627.9 L760.9 620.1 L761.3 612.6 L761.7 602.2 L762.1 590.3 L762.4 582.8 L762.5 586.7 L762.9 597.1 L763.3 604.8 L763.7 609.3 L764.1 612.3 L764.5 612.3 L764.9 612.3 L765.3 612.4 L765.7 613 L766.1 614.9 L766.5 616.9 L766.9 618.5 L767.3 618.4 L767.7 616.8 L768.1 616.6 L768.5 620.1 L768.9 624.7 L769.3 628.6 L769.7 631.7 L770.1 635.5 L770.5 638.3 L770.9 640.2 L771.3 640.5 L771.7 640.2 L772.1 641.4 L772.5 644.4 L772.9 647.2 L773.3 649.2 L773.7 649.5 L774.1 648.6 L774.5 648.4 L774.9 649.5 L775.3 651.1 L775.7 652.1 L776.1 653 L776.5 653.7 L776.9 652.7 L777.3 651.1 L777.7 651 L778.1 652.6 L778.5 652.7 L778.9 651.4 L779.3 652 L779.7 654.4 L780.1 653.5 L780.5 649.5 L780.9 646.4 L781.3 644.3 L781.7 640.2 L782.1 631.4 L782.5 622.6 L782.9 615.2 L783.3 607.8 L783.7 598.2 L784.1 587.3 L784.2 584.6 L784.5 591.7 L784.9 601.3 L785.3 608.7 L785.7 613 L786.1 614.5 L786.5 614.9 L786.9 614.7 L787.3 614 L787.7 613.3 L788.1 614.1 L788.5 616.4 L788.9 618.4 L789.3 620.2 L789.7 623.4 L790.1 625 L790.5 624.3 L790.9 624.9 L791.3 628 L791.7 632.4 L792.1 636.4 L792.5 638.8 L792.9 640.2 L793.3 642.1 L793.7 644.4 L794.1 646.1 L794.5 646.3 L794.9 645.8 L795.3 646.9 L795.7 649.4 L796.1 650.9 L796.5 651 L796.9 651.5 L797.3 652.9 L797.7 654.2 L798.1 655.3 L798.5 654.7 L798.9 652.9 L799.3 652.7 L799.7 655.3 L800.1 655.5 L800.5 654.9 L800.9 655.2 L801.3 655.4 L801.7 654.8 L802.1 651.4 L802.5 647.9 L802.9 645.5 L803.3 643.8 L803.7 638.4 L804.1 631.3 L804.5 624.4 L804.9 615.2 L805.3 605.5 L805.7 592.2 L806 580.7 L806.1 582.1 L806.5 593.6 L806.9 603.4 L807.3 608.3 L807.7 613.2 L808.1 614.8 L808.5 615.6 L808.9 615 L809.3 614 L809.7 615.9 L810.1 619.1 L810.5 621.1 L810.9 622.2 L811.3 622.2 L811.7 621.7 L812.1 622.4 L812.5 624.6 L812.9 627 L813.3 629.8 L813.7 633.6 L814.1 636.7 L814.5 639.3 L814.9 640 L815.3 641.1 L815.7 642.8 L816.1 643.3 L816.5 643.8 L816.9 644.3 L817.3 645 L817.7 645.9 L818.1 647 L818.5 648.5 L818.9 650.7 L819.3 651.9 L819.7 651.3 L820.1 650.6 L820.5 651.8 L820.9 654.4 L821.3 654.9 L821.7 656 L822.1 656.7 L822.5 655.7 L822.9 653.8 L823.3 654.2 L823.7 654.6 L824.1 650.6 L824.5 646.7 L824.9 643.9 L825.3 641.5 L825.7 634.9 L826.1 628.1 L826.5 619.7 L826.9 609.7 L827.3 601.2 L827.7 591.3 L827.9 586.3 L828.1 590.7 L828.5 599.3 L828.9 604.9 L829.3 606.8 L829.7 608.7 L830.1 609 L830.5 608.8 L830.9 609.4 L831.3 610.4 L831.7 612.3 L832.1 613.9 L832.5 615.3 L832.9 618 L833.3 620.1 L833.7 621.1 L834.1 622.8 L834.5 625.1 L834.9 628.1 L835.3 630.4 L835.7 632.3 L836.1 636.1 L836.5 640.1 L836.9 642.2 L837.3 642.8 L837.7 642.6 L838.1 643.5 L838.5 645.4 L838.9 647 L839.3 648.4 L839.7 650.2 L840.1 651.1 L840.5 651.7 L840.9 652.5 L841.3 653.1 L841.7 653.9 L842.1 653.7 L842.5 652.5 L842.9 652.6 L843.3 650.5 L843.7 651.2 L844.1 651.1 L844.5 650.7 L844.9 650 L845.3 650.3 L845.7 650.5 L846.1 649.5 L846.5 649.1 L846.9 648.8 L847.3 643.3 L847.7 633 L848.1 624 L848.5 615.1 L848.9 605.3 L849.3 595.4 L849.7 582.3 L849.8 580.7 L850.1 590.7 L850.5 600.8 L850.9 607.1 L851.3 611.2 L851.7 612.6 L852.1 613.7 L852.5 614.1 L852.9 614 L853.3 613.7 L853.7 614.1 L854.1 615.5 L854.5 617.9 L854.9 620.5 L855.3 621.6 L855.7 622.1 L856.1 622.4 L856.5 623.9 L856.9 628.1 L857.3 631.8 L857.7 633.8 L858.1 636.5 L858.5 639.2 L858.9 640.7 L859.3 641.3 L859.7 641.9 L860.1 643.4 L860.5 645.2 L860.9 645.9 L861.3 646.7 L861.7 649.5 L862.1 653.1 L862.5 654.1 L862.9 653.4 L863.3 652.3 L863.7 651.3 L864.1 650.7 L864.5 651.1 L864.9 651.9 L865.3 652.3 L865.7 652.1 L866.1 652.9 L866.5 652.7 L866.9 652.4 L867.3 654.2 L867.7 653.1 L868.1 649.9 L868.5 646.4 L868.9 642.8 L869.3 635.5 L869.7 627.9 L870.1 620.5 L870.5 611.3 L870.9 602.5 L871.3 591.3 L871.6 582.1 L871.7 584.8 L872.1 595.6 L872.5 605.3 L872.9 609 L873.3 612.2 L873.7 612.1 L874.1 611.1 L874.5 611.4 L874.9 612.3 L875.3 613.6 L875.7 614.7 L876.1 616 L876.5 617.5 L876.9 619.3 L877.3 620.8 L877.7 622.8 L878.1 625.4 L878.5 629.7 L878.9 632.1 L879.3 633.4 L879.7 636.2 L880.1 639.6 L880.5 640.9 L880.9 642.7 L881.3 644.7 L881.7 646.7 L882.1 647.3 L882.5 647.1 L882.9 646.7 L883.3 647.4 L883.7 648.5 L884.1 649.6 L884.5 652.4 L884.9 655.2 L885.3 654.9 L885.7 652.6 L886.1 652.6 L886.5 654.1 L886.9 657.2 L887.3 656.5 L887.7 655 L888.1 654.3 L888.5 654.7 L888.9 656.9 L889.3 657.2 L889.7 652.9 L890.1 648.8 L890.5 644.8 L890.9 640.1 L891.3 632.4 L891.7 625 L892.1 617.7 L892.5 609.5 L892.9 598.9 L893.3 586.2 L893.5 581.4 L893.7 588.3 L894.1 599.5 L894.5 605.9 L894.9 611.5 L895.3 614 L895.7 614.3 L896.1 615 L896.5 615.9 L896.9 617.2 L897.3 618.2 L897.7 619.4 L898.1 621.3 L898.5 622.8 L898.9 623.1 L899.3 623.4 L899.7 624.2 L900.1 624.8 L900.5 626.9 L900.9 631.1 L901.3 635.4 L901.7 637.4 L902.1 638.5 L902.5 639.5 L902.9 640.3 L903.3 641.5 L903.7 643.6 L904.1 645.8 L904.5 647.4 L904.9 648.1 L905.3 648.3 L905.7 648.7 L906.1 649.9 L906.5 651.3 L906.9 652.2 L907.3 653.6 L907.7 655.7 L908.1 656.7 L908.5 656.8 L908.9 654.6 L909.3 654.5 L909.7 654.8 L910.1 654.8 L910.5 654.2 L910.9 654.9 L911.3 654 L911.7 651 L912.1 647.1 L912.5 643.2 L912.9 638.4 L913.3 631.4 L913.7 623.5 L914.1 614.7 L914.5 605 L914.9 595.5 L915.3 584.6 L915.3 584.6 L915.7 594.1 L916.1 602.6 L916.5 604.1 L916.9 606.3 L917.3 607.7 L917.7 608.9 L918.1 609.1 L918.5 609.3 L918.9 609.8 L919.3 610 L919.7 611.8 L920.1 614.2 L920.5 615.9 L920.9 617.4 L921.3 619.3 L921.7 621.7 L922.1 624.3 L922.5 628.2 L922.9 633.2 L923.3 637 L923.7 639.4 L924.1 639.4 L924.5 639.4 L924.9 641.4 L925.3 644.1 L925.7 645 L926.1 645.6 L926.5 646.9 L926.9 648.3 L927.3 649.7 L927.3 674.3 L381.7 674.3 Z" fill="#7eb26d" fill-opacity="0.8"/><path d="M381.7 653.8 L382.1 654.2 L382.5 654.7 L382.9 655.1 L383.3 655.5 L383.7 655.9 L384.1 656.4 L384.5 654.1 L384.9 651.7 L385.3 650.2 L385.7 651.3 L386.1 653.2 L386.5 654.4 L386.9 653.6 L387.3 651.6 L387.7 648.1 L388.1 643.4 L388.5 638.1 L388.9 631.5 L389.3 623.3 L389.7 613.5 L390.1 604.6 L390.5 592 L390.9 576.4 L390.9 576.4 L391.3 590 L391.7 603.4 L392.1 608.9 L392.5 613.4 L392.9 612.9 L393.3 612.9 L393.7 612.6 L394.1 612.4 L394.5 612.6 L394.9 613.3 L395.3 615.3 L395.7 618 L396.1 620.9 L396.5 622.2 L396.9 621.7 L397.3 621.3 L397.7 622.9 L398.1 626 L398.5 630.3 L398.9 634 L399.3 637 L399.7 639.4 L400.1 641.6 L400.5 643 L400.9 643.8 L401.3 645.3 L401.7 646.8 L402.1 647.8 L402.5 648.2 L402.9 649.2 L403.3 650.6 L403.7 652.3 L404.1 652.2 L404.5 651.5 L404.9 652.3 L405.3 653.2 L405.7 654.6 L406.1 655.4 L406.5 655 L406.9 654.4 L407.3 654.9 L407.7 655.2 L408.1 655.9 L408.5 656 L408.9 652.4 L409.3 648.3 L409.7 644.7 L410.1 642.6 L410.5 635.3 L410.9 628.2 L411.3 622.6 L411.7 614 L412.1 601 L412.5 579.4 L412.8 565.9 L412.9 572.9 L413.3 591.8 L413.7 607.6 L414.1 611 L414.5 611.4 L414.9 610.6 L415.3 610.3 L415.7 610.8 L416.1 611 L416.5 610.4 L416.9 611 L417.3 613.7 L417.7 616.8 L418.1 619.6 L418.5 621.9 L418.9 624.3 L419.3 626.4 L419.7 628.2 L420.1 630.3 L420.5 633.2 L420.9 635.9 L421.3 638.3 L421.7 641.2 L422.1 644.6 L422.5 645.1 L422.9 644.3 L423.3 644.6 L423.7 646.4 L424.1 648 L424.5 648.9 L424.9 649.4 L425.3 650.9 L425.7 652.5 L426.1 652.7 L426.5 652.7 L426.9 653.9 L427.3 654.7 L427.7 654.3 L428.1 654.3 L428.5 653.8 L428.9 653 L429.3 652.5 L429.7 653.3 L430.1 655 L430.5 654.5 L430.9 651 L431.3 646.3 L431.7 642.5 L432.1 639.1 L432.5 633.3 L432.9 626.3 L433.3 616.5 L433.7 607.2 L434.1 597.3 L434.5 584.6 L434.6 581.4 L434.9 589.7 L435.3 600.9 L435.7 608 L436.1 613.5 L436.5 614.5 L436.9 613.5 L437.3 614.4 L437.7 617 L438.1 619 L438.5 619.1 L438.9 619.5 L439.3 621.6 L439.7 624 L440.1 625.2 L440.5 625.4 L440.9 624.5 L441.3 624.9 L441.7 627.9 L442.1 631.7 L442.5 634.5 L442.9 637.2 L443.3 639.5 L443.7 639.8 L444.1 639.7 L444.5 641.2 L444.9 643.4 L445.3 645.8 L445.7 648 L446.1 649.4 L446.5 648.7 L446.9 647.1 L447.3 646.8 L447.7 648.2 L448.1 650.2 L448.5 652.1 L448.9 653.4 L449.3 653.6 L449.7 653.7 L450.1 655.4 L450.5 655.9 L450.9 657.6 L451.3 659.2 L451.7 659.7 L452.1 659.7 L452.5 655.5 L452.9 650.3 L453.3 646.4 L453.7 642.6 L454.1 635.6 L454.5 628 L454.9 620.9 L455.3 612.1 L455.7 603.5 L456.1 592.5 L456.4 581.4 L456.5 582.8 L456.9 593.9 L457.3 604.5 L457.7 606.4 L458.1 608.8 L458.5 608.8 L458.9 607.8 L459.3 607.4 L459.7 608 L460.1 610 L460.5 612.6 L460.9 614.4 L461.3 615.6 L461.7 617.7 L462.1 619.4 L462.5 621 L462.9 624.3 L463.3 627.7 L463.7 629.1 L464.1 630.6 L464.5 633.8 L464.9 637.4 L465.3 640.1 L465.7 642.3 L466.1 643.4 L466.5 643.4 L466.9 643.7 L467.3 645.3 L467.7 646.5 L468.1 648.3 L468.5 649.1 L468.9 649 L469.3 649.9 L469.7 652 L470.1 653.8 L470.5 654.1 L470.9 653.3 L471.3 652.6 L471.7 654.1 L472.1 657 L472.5 658.4 L472.9 658.9 L473.3 658.4 L473.7 657.3 L474.1 656.2 L474.5 653 L474.9 650.1 L475.3 646.3 L475.7 642.4 L476.1 636.2 L476.5 629.3 L476.9 620.7 L477.3 611.6 L477.7 600.3 L478.1 586.7 L478.3 580 L478.5 585.9 L478.9 597.7 L479.3 604.3 L479.7 609.7 L480.1 614.2 L480.5 615.7 L480.9 616.1 L481.3 615.6 L481.7 616 L482.1 618 L482.5 619.6 L482.9 621.9 L483.3 623.8 L483.7 623.5 L484.1 622.2 L484.5 622.9 L484.9 625.3 L485.3 628.5 L485.7 631.8 L486.1 635.3 L486.5 636.7 L486.9 637.5 L487.3 639.4 L487.7 641.3 L488.1 642.8 L488.5 644.5 L488.9 645.2 L489.3 645.4 L489.7 646.5 L490.1 648 L490.5 649.3 L490.9 650 L491.3 650.1 L491.7 650.2 L492.1 651.9 L492.5 655.1 L492.9 657 L493.3 656.4 L493.7 654.1 L494.1 656.1 L494.5 657.7 L494.9 656.8 L495.3 655.6 L495.7 656 L496.1 654 L496.5 649.7 L496.9 646 L497.3 643.7 L497.7 639.7 L498.1 631.3 L498.5 622.2 L498.9 614 L499.3 607.2 L499.7 595.7 L500.1 583 L500.1 581.4 L500.5 591.1 L500.9 601.4 L501.3 605 L501.7 607.9 L502.1 608.6 L502.5 609.7 L502.9 610.9 L503.3 610.5 L503.7 610.6 L504.1 613.2 L504.5 614.7 L504.9 615.2 L505.3 617.6 L505.7 621.1 L506.1 623.2 L506.5 623.5 L506.9 624.5 L507.3 627.1 L507.7 630.6 L508.1 634.4 L508.5 638.3 L508.9 640.5 L509.3 641.5 L509.7 641.8 L510.1 642.1 L510.5 643.5 L510.9 645.4 L511.3 646.5 L511.7 648.4 L512.1 650.3 L512.5 651.6 L512.9 652.5 L513.3 652.3 L513.7 652 L514.1 652.2 L514.5 652.7 L514.9 653.6 L515.3 654.9 L515.7 655 L516.1 655 L516.5 655 L516.9 654.9 L517.3 654.7 L517.7 655.4 L518.1 654.1 L518.5 651.5 L518.9 647.1 L519.3 642.8 L519.7 635.3 L520.1 626.9 L520.5 619 L520.9 611.2 L521.3 604 L521.7 590.5 L522 580.7 L522.1 583.6 L522.5 595 L522.9 604.2 L523.3 607.7 L523.7 610.1 L524.1 610.1 L524.5 610.4 L524.9 611 L525.3 612 L525.7 614.3 L526.1 615.6 L526.5 615.8 L526.9 616.7 L527.3 618.7 L527.7 620 L528.1 621.3 L528.5 624.4 L528.9 628.1 L529.3 631.1 L529.7 634.1 L530.1 635.4 L530.5 636.5 L530.9 637.6 L531.3 639.5 L531.7 641.3 L532.1 642.7 L532.5 644.1 L532.9 646.1 L533.3 647.5 L533.7 647.7 L534.1 647.9 L534.5 649 L534.9 651.1 L535.3 652.1 L535.7 650.2 L536.1 648.5 L536.5 649.8 L536.9 652.5 L537.3 654.5 L537.7 654.7 L538.1 654.6 L538.5 654.3 L538.9 653.9 L539.3 653.2 L539.7 652.9 L540.1 651.8 L540.5 649.3 L540.9 646.8 L541.3 643.9 L541.7 635.5 L542.1 626.5 L542.5 618 L542.9 609.2 L543.3 597.4 L543.7 580.6 L543.9 574.3 L544.1 583.5 L544.5 598.2 L544.9 607.4 L545.3 611.1 L545.7 611.9 L546.1 610.9 L546.5 610.4 L546.9 611.6 L547.3 613.3 L547.7 615.6 L548.1 619 L548.5 621.3 L548.9 622 L549.3 622.3 L549.7 622.5 L550.1 622.7 L550.5 623.1 L550.9 625.6 L551.3 629.7 L551.7 633.6 L552.1 636.3 L552.5 638.9 L552.9 640.9 L553.3 641.6 L553.7 641.9 L554.1 642.5 L554.5 643 L554.9 644.8 L555.3 647.5 L555.7 649.2 L556.1 650.2 L556.5 650.8 L556.9 651.4 L557.3 650.9 L557.7 650.7 L558.1 651.5 L558.5 653.2 L558.9 653.8 L559.3 655.5 L559.7 655 L560.1 654.9 L560.5 655 L560.9 654.8 L561.3 654.5 L561.7 652.5 L562.1 650.2 L562.5 647.9 L562.9 644.3 L563.3 638.6 L563.7 631.1 L564.1 622.9 L564.5 613.5 L564.9 605.1 L565.3 593.8 L565.7 580.7 L565.7 580.7 L566.1 592.2 L566.5 603.2 L566.9 607.1 L567.3 610.7 L567.7 610.4 L568.1 610.7 L568.5 612.2 L568.9 613.6 L569.3 615 L569.7 615.1 L570.1 615.6 L570.5 617.1 L570.9 619.7 L571.3 623.8 L571.7 626.7 L572.1 627.6 L572.5 628.7 L572.9 630.4 L573.3 632.7 L573.7 635.2 L574.1 638.1 L574.5 640.9 L574.9 643.2 L575.3 643.5 L575.7 643.8 L576.1 646 L576.5 646.5 L576.9 645.7 L577.3 647.1 L577.7 649.2 L578.1 649.6 L578.5 649.4 L578.9 650.4 L579.3 652.2 L579.7 652.8 L580.1 652.9 L580.5 653.1 L580.9 654.5 L581.3 656.7 L581.7 657.7 L582.1 656.2 L582.5 654.6 L582.9 654.8 L583.3 654.6 L583.7 651.2 L584.1 649 L584.5 646.2 L584.9 643 L585.3 635.7 L585.7 627.2 L586.1 619.2 L586.5 611.9 L586.9 602.1 L587.3 589.3 L587.5 581.4 L587.7 585.6 L588.1 596.7 L588.5 605.8 L588.9 608.2 L589.3 609.3 L589.7 609.5 L590.1 609.8 L590.5 610.7 L590.9 612.5 L591.3 614.1 L591.7 614 L592.1 614.6 L592.5 617 L592.9 621.6 L593.3 625.2 L593.7 627 L594.1 627 L594.5 627.5 L594.9 629.7 L595.3 633 L595.7 635.8 L596.1 638.4 L596.5 639.9 L596.9 641.5 L597.3 643.9 L597.7 646.3 L598.1 646.2 L598.5 645.8 L598.9 647.2 L599.3 649 L599.7 650.2 L600.1 650.5 L600.5 650.8 L600.9 652.9 L601.3 656.2 L601.7 658.5 L602.1 659 L602.5 659.6 L602.9 658.8 L603.3 656.7 L603.7 656.6 L604.1 657.6 L604.5 656.9 L604.9 656.7 L605.3 655.6 L605.7 652.9 L606.1 650.9 L606.5 648.4 L606.9 643.7 L607.3 634.8 L607.7 626.2 L608.1 618.8 L608.5 610.6 L608.9 596.7 L609.3 582.8 L609.4 579.3 L609.7 588.4 L610.1 600.6 L610.5 610.2 L610.9 615.9 L611.3 617.2 L611.7 617.2 L612.1 616.2 L612.5 615.8 L612.9 617.4 L613.3 618.8 L613.7 619.9 L614.1 622.5 L614.5 624.8 L614.9 625 L615.3 624.2 L615.7 624.1 L616.1 625.9 L616.5 628.2 L616.9 630.2 L617.3 633.9 L617.7 638.3 L618.1 640.2 L618.5 640.5 L618.9 641.5 L619.3 643.6 L619.7 645.8 L620.1 647.9 L620.5 649.2 L620.9 649.4 L621.3 649.5 L621.7 650.4 L622.1 652 L622.5 653.5 L622.9 654.5 L623.3 654.8 L623.7 654.5 L624.1 655.1 L624.5 656.3 L624.9 653.8 L625.3 654.5 L625.7 655.2 L626.1 655 L626.5 654 L626.9 653.2 L627.3 650.8 L627.7 648.2 L628.1 645.1 L628.5 642.4 L628.9 636.5 L629.3 629 L629.7 622 L630.1 613.8 L630.5 604.9 L630.9 592 L631.2 580.3 L631.3 581.8 L631.7 593.4 L632.1 605 L632.5 611.5 L632.9 615.7 L633.3 615 L633.7 614.9 L634.1 615.9 L634.5 616.5 L634.9 617.4 L635.3 618.8 L635.7 619.2 L636.1 618.7 L636.5 619.3 L636.9 621.3 L637.3 623.7 L637.7 625.2 L638.1 627.4 L638.5 629.9 L638.9 633.1 L639.3 636.3 L639.7 639.1 L640.1 640 L640.5 640.3 L640.9 641 L641.3 643.7 L641.7 647.3 L642.1 649.4 L642.5 650.2 L642.9 649.8 L643.3 649.2 L643.7 649.8 L644.1 651.4 L644.5 652.3 L644.9 653.6 L645.3 654.9 L645.7 655 L646.1 653.6 L646.5 652.5 L646.9 654.1 L647.3 653.2 L647.7 653 L648.1 654.3 L648.5 655.6 L648.9 655.2 L649.3 651.6 L649.7 647.9 L650.1 644.4 L650.5 640.7 L650.9 632.8 L651.3 625.8 L651.7 618.5 L652.1 610.1 L652.5 600.7 L652.9 588.8 L653.1 582.8 L653.3 588 L653.7 598.4 L654.1 605.7 L654.5 613 L654.9 617.2 L655.3 618 L655.7 619.4 L656.1 620.3 L656.5 620.8 L656.9 621.2 L657.3 620.9 L657.7 620.6 L658.1 620.7 L658.5 620.9 L658.9 621.7 L659.3 623.2 L659.7 625 L660.1 627.9 L660.5 631.4 L660.9 633.9 L661.3 635.3 L661.7 637.5 L662.1 639.1 L662.5 640.5 L662.9 642.6 L663.3 645.3 L663.7 647.2 L664.1 648.2 L664.5 648.5 L664.9 648.5 L665.3 648.3 L665.7 649.7 L666.1 652 L666.5 653.2 L666.9 653.8 L667.3 653.4 L667.7 653.2 L668.1 654.7 L668.5 654.6 L668.9 654 L669.3 652.7 L669.7 652.1 L670.1 652.7 L670.5 653.9 L670.9 652.6 L671.3 649.8 L671.7 646.7 L672.1 643.5 L672.5 639.1 L672.9 632.2 L673.3 625.4 L673.7 618 L674.1 609 L674.5 593.6 L674.9 577.4 L675 575.4 L675.3 587.8 L675.7 601.6 L676.1 606.9 L676.5 612.9 L676.9 615.8 L677.3 618 L677.7 618 L678.1 617.1 L678.5 617.6 L678.9 619 L679.3 619.7 L679.7 619.6 L680.1 620.8 L680.5 623 L680.9 623.9 L681.3 623.4 L681.7 625.1 L682.1 627.3 L682.5 630.3 L682.9 634.7 L683.3 638.2 L683.7 639.8 L684.1 640.3 L684.5 640.4 L684.9 640.9 L685.3 642.7 L685.7 644.7 L686.1 645.9 L686.5 647.5 L686.9 648.1 L687.3 648.4 L687.7 650.7 L688.1 652.4 L688.5 653.1 L688.9 654.4 L689.3 654.5 L689.7 653.4 L690.1 653.5 L690.5 655.4 L690.9 655.8 L691.3 656.4 L691.7 655.9 L692.1 653.8 L692.5 651.9 L692.9 649.5 L693.3 648.5 L693.7 647.4 L694.1 644.9 L694.5 637.9 L694.9 629.3 L695.3 621.4 L695.7 612.8 L696.1 604.5 L696.5 591.3 L696.8 582.1 L696.9 584.8 L697.3 595.6 L697.7 606.9 L698.1 609.1 L698.5 610.5 L698.9 609.7 L699.3 609.2 L699.7 609.9 L700.1 610.7 L700.5 612.1 L700.9 614.1 L701.3 616.4 L701.7 617.8 L702.1 620.1 L702.5 622.5 L702.9 623.8 L703.3 625.1 L703.7 627.1 L704.1 630.6 L704.5 634.9 L704.9 636.3 L705.3 636.7 L705.7 637.3 L706.1 639.4 L706.5 642.7 L706.9 645.9 L707.3 646.8 L707.7 646.1 L708.1 646.6 L708.5 648.6 L708.9 650 L709.3 651.4 L709.7 652.9 L710.1 651.9 L710.5 649.6 L710.9 649.2 L711.3 650.5 L711.7 651.8 L712.1 655.8 L712.5 658 L712.9 658.3 L713.3 656.6 L713.7 654.9 L714.1 653.9 L714.5 653.7 L714.9 652.3 L715.3 649.6 L715.7 645.4 L716.1 641.8 L716.5 635.5 L716.9 628 L717.3 618.1 L717.7 608.4 L718.1 599.3 L718.5 587.8 L718.6 583.5 L718.9 589.8 L719.3 599.9 L719.7 605.9 L720.1 613.4 L720.5 617.6 L720.9 619.4 L721.3 620.6 L721.7 619.5 L722.1 618.1 L722.5 619.3 L722.9 621.5 L723.3 623.5 L723.7 625.3 L724.1 624.8 L724.5 623.8 L724.9 624 L725.3 625.5 L725.7 627.2 L726.1 629.4 L726.5 633.4 L726.9 637.8 L727.3 642 L727.7 643.4 L728.1 642.8 L728.5 643.1 L728.9 644.6 L729.3 646.2 L729.7 646.7 L730.1 646.1 L730.5 646.8 L730.9 649.6 L731.3 651.4 L731.7 650.8 L732.1 650.6 L732.5 651.3 L732.9 651.5 L733.3 651.7 L733.7 653.5 L734.1 657.1 L734.5 659 L734.9 659.2 L735.3 658.6 L735.7 657.9 L736.1 657.6 L736.5 654.7 L736.9 650.8 L737.3 648.3 L737.7 645.4 L738.1 639.7 L738.5 631.9 L738.9 623.2 L739.3 613.9 L739.7 604.6 L740.1 592.4 L740.5 577.5 L740.5 577.5 L740.9 590.6 L741.3 606.6 L741.7 611.9 L742.1 616.9 L742.5 616.8 L742.9 617.8 L743.3 620 L743.7 620.9 L744.1 620.6 L744.5 620 L744.9 621.4 L745.3 623.4 L745.7 624.1 L746.1 623.7 L746.5 624.4 L746.9 625.9 L747.3 628.3 L747.7 629.6 L748.1 631.3 L748.5 633.8 L748.9 636.8 L749.3 639.4 L749.7 640.9 L750.1 641.6 L750.5 643 L750.9 644.9 L751.3 646.4 L751.7 647.1 L752.1 647 L752.5 647.4 L752.9 648.3 L753.3 649.9 L753.7 652.2 L754.1 652.8 L754.5 652.8 L754.9 654.9 L755.3 656.3 L755.7 655.9 L756.1 653.2 L756.5 654.3 L756.9 654.8 L757.3 655.9 L757.7 656.6 L758.1 655.9 L758.5 653 L758.9 650.5 L759.3 647.6 L759.7 644.4 L760.1 636.5 L760.5 627.9 L760.9 620.1 L761.3 612.6 L761.7 602.2 L762.1 590.3 L762.4 582.8 L762.5 586.7 L762.9 597.1 L763.3 604.8 L763.7 609.3 L764.1 612.3 L764.5 612.3 L764.9 612.3 L765.3 612.4 L765.7 613 L766.1 614.9 L766.5 616.9 L766.9 618.5 L767.3 618.4 L767.7 616.8 L768.1 616.6 L768.5 620.1 L768.9 624.7 L769.3 628.6 L769.7 631.7 L770.1 635.5 L770.5 638.3 L770.9 640.2 L771.3 640.5 L771.7 640.2 L772.1 641.4 L772.5 644.4 L772.9 647.2 L773.3 649.2 L773.7 649.5 L774.1 648.6 L774.5 648.4 L774.9 649.5 L775.3 651.1 L775.7 652.1 L776.1 653 L776.5 653.7 L776.9 652.7 L777.3 651.1 L777.7 651 L778.1 652.6 L778.5 652.7 L778.9 651.4 L779.3 652 L779.7 654.4 L780.1 653.5 L780.5 649.5 L780.9 646.4 L781.3 644.3 L781.7 640.2 L782.1 631.4 L782.5 622.6 L782.9 615.2 L783.3 607.8 L783.7 598.2 L784.1 587.3 L784.2 584.6 L784.5 591.7 L784.9 601.3 L785.3 608.7 L785.7 613 L786.1 614.5 L786.5 614.9 L786.9 614.7 L787.3 614 L787.7 613.3 L788.1 614.1 L788.5 616.4 L788.9 618.4 L789.3 620.2 L789.7 623.4 L790.1 625 L790.5 624.3 L790.9 624.9 L791.3 628 L791.7 632.4 L792.1 636.4 L792.5 638.8 L792.9 640.2 L793.3 642.1 L793.7 644.4 L794.1 646.1 L794.5 646.3 L794.9 645.8 L795.3 646.9 L795.7 649.4 L796.1 650.9 L796.5 651 L796.9 651.5 L797.3 652.9 L797.7 654.2 L798.1 655.3 L798.5 654.7 L798.9 652.9 L799.3 652.7 L799.7 655.3 L800.1 655.5 L800.5 654.9 L800.9 655.2 L801.3 655.4 L801.7 654.8 L802.1 651.4 L802.5 647.9 L802.9 645.5 L803.3 643.8 L803.7 638.4 L804.1 631.3 L804.5 624.4 L804.9 615.2 L805.3 605.5 L805.7 592.2 L806 580.7 L806.1 582.1 L806.5 593.6 L806.9 603.4 L807.3 608.3 L807.7 613.2 L808.1 614.8 L808.5 615.6 L808.9 615 L809.3 614 L809.7 615.9 L810.1 619.1 L810.5 621.1 L810.9 622.2 L811.3 622.2 L811.7 621.7 L812.1 622.4 L812.5 624.6 L812.9 627 L813.3 629.8 L813.7 633.6 L814.1 636.7 L814.5 639.3 L814.9 640 L815.3 641.1 L815.7 642.8 L816.1 643.3 L816.5 643.8 L816.9 644.3 L817.3 645 L817.7 645.9 L818.1 647 L818.5 648.5 L818.9 650.7 L819.3 651.9 L819.7 651.3 L820.1 650.6 L820.5 651.8 L820.9 654.4 L821.3 654.9 L821.7 656 L822.1 656.7 L822.5 655.7 L822.9 653.8 L823.3 654.2 L823.7 654.6 L824.1 650.6 L824.5 646.7 L824.9 643.9 L825.3 641.5 L825.7 634.9 L826.1 628.1 L826.5 619.7 L826.9 609.7 L827.3 601.2 L827.7 591.3 L827.9 586.3 L828.1 590.7 L828.5 599.3 L828.9 604.9 L829.3 606.8 L829.7 608.7 L830.1 609 L830.5 608.8 L830.9 609.4 L831.3 610.4 L831.7 612.3 L832.1 613.9 L832.5 615.3 L832.9 618 L833.3 620.1 L833.7 621.1 L834.1 622.8 L834.5 625.1 L834.9 628.1 L835.3 630.4 L835.7 632.3 L836.1 636.1 L836.5 640.1 L836.9 642.2 L837.3 642.8 L837.7 642.6 L838.1 643.5 L838.5 645.4 L838.9 647 L839.3 648.4 L839.7 650.2 L840.1 651.1 L840.5 651.7 L840.9 652.5 L841.3 653.1 L841.7 653.9 L842.1 653.7 L842.5 652.5 L842.9 652.6 L843.3 650.5 L843.7 651.2 L844.1 651.1 L844.5 650.7 L844.9 650 L845.3 650.3 L845.7 650.5 L846.1 649.5 L846.5 649.1 L846.9 648.8 L847.3 643.3 L847.7 633 L848.1 624 L848.5 615.1 L848.9 605.3 L849.3 595.4 L849.7 582.3 L849.8 580.7 L850.1 590.7 L850.5 600.8 L850.9 607.1 L851.3 611.2 L851.7 612.6 L852.1 613.7 L852.5 614.1 L852.9 614 L853.3 613.7 L853.7 614.1 L854.1 615.5 L854.5 617.9 L854.9 620.5 L855.3 621.6 L855.7 622.1 L856.1 622.4 L856.5 623.9 L856.9 628.1 L857.3 631.8 L857.7 633.8 L858.1 636.5 L858.5 639.2 L858.9 640.7 L859.3 641.3 L859.7 641.9 L860.1 643.4 L860.5 645.2 L860.9 645.9 L861.3 646.7 L861.7 649.5 L862.1 653.1 L862.5 654.1 L862.9 653.4 L863.3 652.3 L863.7 651.3 L864.1 650.7 L864.5 651.1 L864.9 651.9 L865.3 652.3 L865.7 652.1 L866.1 652.9 L866.5 652.7 L866.9 652.4 L867.3 654.2 L867.7 653.1 L868.1 649.9 L868.5 646.4 L868.9 642.8 L869.3 635.5 L869.7 627.9 L870.1 620.5 L870.5 611.3 L870.9 602.5 L871.3 591.3 L871.6 582.1 L871.7 584.8 L872.1 595.6 L872.5 605.3 L872.9 609 L873.3 612.2 L873.7 612.1 L874.1 611.1 L874.5 611.4 L874.9 612.3 L875.3 613.6 L875.7 614.7 L876.1 616 L876.5 617.5 L876.9 619.3 L877.3 620.8 L877.7 622.8 L878.1 625.4 L878.5 629.7 L878.9 632.1 L879.3 633.4 L879.7 636.2 L880.1 639.6 L880.5 640.9 L880.9 642.7 L881.3 644.7 L881.7 646.7 L882.1 647.3 L882.5 647.1 L882.9 646.7 L883.3 647.4 L883.7 648.5 L884.1 649.6 L884.5 652.4 L884.9 655.2 L885.3 654.9 L885.7 652.6 L886.1 652.6 L886.5 654.1 L886.9 657.2 L887.3 656.5 L887.7 655 L888.1 654.3 L888.5 654.7 L888.9 656.9 L889.3 657.2 L889.7 652.9 L890.1 648.8 L890.5 644.8 L890.9 640.1 L891.3 632.4 L891.7 625 L892.1 617.7 L892.5 609.5 L892.9 598.9 L893.3 586.2 L893.5 581.4 L893.7 588.3 L894.1 599.5 L894.5 605.9 L894.9 611.5 L895.3 614 L895.7 614.3 L896.1 615 L896.5 615.9 L896.9 617.2 L897.3 618.2 L897.7 619.4 L898.1 621.3 L898.5 622.8 L898.9 623.1 L899.3 623.4 L899.7 624.2 L900.1 624.8 L900.5 626.9 L900.9 631.1 L901.3 635.4 L901.7 637.4 L902.1 638.5 L902.5 639.5 L902.9 640.3 L903.3 641.5 L903.7 643.6 L904.1 645.8 L904.5 647.4 L904.9 648.1 L905.3 648.3 L905.7 648.7 L906.1 649.9 L906.5 651.3 L906.9 652.2 L907.3 653.6 L907.7 655.7 L908.1 656.7 L908.5 656.8 L908.9 654.6 L909.3 654.5 L909.7 654.8 L910.1 654.8 L910.5 654.2 L910.9 654.9 L911.3 654 L911.7 651 L912.1 647.1 L912.5 643.2 L912.9 638.4 L913.3 631.4 L913.7 623.5 L914.1 614.7 L914.5 605 L914.9 595.5 L915.3 584.6 L915.3 584.6 L915.7 594.1 L916.1 602.6 L916.5 604.1 L916.9 606.3 L917.3 607.7 L917.7 608.9 L918.1 609.1 L918.5 609.3 L918.9 609.8 L919.3 610 L919.7 611.8 L920.1 614.2 L920.5 615.9 L920.9 617.4 L921.3 619.3 L921.7 621.7 L922.1 624.3 L922.5 628.2 L922.9 633.2 L923.3 637 L923.7 639.4 L924.1 639.4 L924.5 639.4 L924.9 641.4 L925.3 644.1 L925.7 645 L926.1 645.6 L926.5 646.9 L926.9 648.3 L927.3 649.7" fill="none" stroke="#7eb26d" stroke-width="2.6" stroke-linejoin="round"/><rect x="356" y="708.9" width="12" height="4" rx="1" fill="#7eb26d"/><text x="372" y="713.5" class="lg" textLength="94.5" lengthAdjust="spacingAndGlyphs">Battery-voltage.last</text><text x="472.8" y="713.5" class="lg" textLength="60.5" lengthAdjust="spacingAndGlyphs">Min: 12.47 V</text><text x="539.8" y="713.5" class="lg" textLength="63.7" lengthAdjust="spacingAndGlyphs">Max: 15.07 V</text><text x="610" y="713.5" class="lg" textLength="79" lengthAdjust="spacingAndGlyphs">Current: 12.73 V</text><line x1="1003" y1="533.1" x2="1554.6" y2="533.1" class="g"/><line x1="1003" y1="561.4" x2="1554.6" y2="561.4" class="g"/><line x1="1003" y1="589.7" x2="1554.6" y2="589.7" class="g"/><line x1="1003" y1="617.9" x2="1554.6" y2="617.9" class="g"/><line x1="1003" y1="646.2" x2="1554.6" y2="646.2" class="g"/><line x1="1003" y1="674.5" x2="1554.6" y2="674.5" class="g"/><line x1="1068.5" y1="533.1" x2="1068.5" y2="674.5" class="g"/><line x1="1134.7" y1="533.1" x2="1134.7" y2="674.5" class="g"/><line x1="1200.9" y1="533.1" x2="1200.9" y2="674.5" class="g"/><line x1="1267.1" y1="533.1" x2="1267.1" y2="674.5" class="g"/><line x1="1333.3" y1="533.1" x2="1333.3" y2="674.5" class="g"/><line x1="1399.6" y1="533.1" x2="1399.6" y2="674.5" class="g"/><line x1="1465.8" y1="533.1" x2="1465.8" y2="674.5" class="g"/><line x1="1532" y1="533.1" x2="1532" y2="674.5" class="g"/><text x="997.6" y="535.7" class="yl">25 W</text><text x="997.6" y="564" class="yl">20 W</text><text x="997.6" y="592.3" class="yl">15 W</text><text x="997.6" y="620.5" class="yl">10 W</text><text x="997.6" y="648.8" class="yl">5 W</text><text x="997.6" y="677.1" class="yl">0 W</text><text x="1068.5" y="690.7" class="xl">5/10</text><text x="1134.7" y="690.7" class="xl">5/13</text><text x="1200.9" y="690.7" class="xl">5/16</text><text x="1267.1" y="690.7" class="xl">5/19</text><text x="1333.3" y="690.7" class="xl">5/22</text><text x="1399.6" y="690.7" class="xl">5/25</text><text x="1465.8" y="690.7" class="xl">5/28</text><text x="1532" y="690.7" class="xl">5/31</text><path d="M1003 610.1 L1003.5 609.8 L1004 610 L1004.5 610 L1005 609.2 L1005.5 609.3 L1006 610.3 L1006.5 610.4 L1007 610.2 L1007.5 631.2 L1008 642.6 L1008.5 641.4 L1009 640.9 L1009.5 641.5 L1010 643.6 L1010.5 645 L1011 644.8 L1011.5 641.6 L1012 640.3 L1012.5 640.5 L1013 640.5 L1013.5 640 L1014 640.2 L1014.5 641.1 L1015 642.6 L1015.5 644.2 L1016 644.2 L1016.5 644.9 L1017 645.7 L1017.5 644.8 L1018 642.4 L1018.5 641.7 L1019 642.5 L1019.5 641.2 L1020 638.8 L1020.5 626.5 L1021 613.2 L1021.5 612 L1022 611.8 L1022.5 613 L1023 614.3 L1023.5 614.9 L1024 615.5 L1024.5 615.5 L1025 614.8 L1025.5 613.7 L1026 612.9 L1026.5 614.3 L1027 614.2 L1027.5 613.2 L1028 611.6 L1028.5 623.5 L1029 640.5 L1029.5 641.9 L1030 641.6 L1030.5 643.1 L1031 644.8 L1031.5 645.1 L1032 643.9 L1032.5 642.5 L1033 643 L1033.5 644.1 L1034 644.3 L1034.5 643.3 L1035 643.3 L1035.5 643.7 L1036 643.1 L1036.5 642.2 L1037 642.5 L1037.5 641.7 L1038 641.8 L1038.5 642.8 L1039 643.1 L1039.5 644.1 L1040 645 L1040.5 645 L1041 644.8 L1041.5 643.8 L1042 641.6 L1042.5 627.1 L1043 614.1 L1043.5 613.9 L1044 614.6 L1044.5 616.4 L1045 617.8 L1045.5 615.7 L1046 613.5 L1046.5 614.7 L1047 616.7 L1047.5 616.3 L1048 615.4 L1048.5 612.9 L1049 613.7 L1049.5 615.1 L1050 618 L1050.5 634.1 L1051 641.3 L1051.5 643.8 L1052 646.3 L1052.5 645.9 L1053 645 L1053.5 644.6 L1054 644.7 L1054.5 644.8 L1055 644.2 L1055.5 644.9 L1056 645.9 L1056.5 645.6 L1057 644.4 L1057.5 643.1 L1058 643.2 L1058.5 644 L1059 643.9 L1059.5 642.8 L1060 642 L1060.5 643.4 L1061 643.4 L1061.5 643.5 L1062 644.5 L1062.5 644.1 L1063 643.9 L1063.5 644 L1064 642.5 L1064.5 629.3 L1065 617.2 L1065.5 616.9 L1066 615.7 L1066.5 616.2 L1067 618.1 L1067.5 618.5 L1068 616.7 L1068.5 614.8 L1069 614.8 L1069.5 617.1 L1070 619.7 L1070.5 618.3 L1071 617.1 L1071.5 617 L1072 617.4 L1072.5 616.9 L1073 615.1 L1073.5 626 L1074 642.2 L1074.5 641.1 L1075 640.8 L1075.5 642 L1076 643.1 L1076.5 642.2 L1077 642.7 L1077.5 642.3 L1078 641.9 L1078.5 643.5 L1079 643.3 L1079.5 643.4 L1080 644.3 L1080.5 644.7 L1081 644.1 L1081.5 643.7 L1082 642.5 L1082.5 642.6 L1083 644.1 L1083.5 643.3 L1084 642.4 L1084.5 643.1 L1085 643.8 L1085.5 643.8 L1086 644.7 L1086.5 629.8 L1087 614.6 L1087.5 616.7 L1088 618.1 L1088.5 617.2 L1089 614.6 L1089.5 613.5 L1090 613.2 L1090.5 613 L1091 613.8 L1091.5 615.3 L1092 616.4 L1092.5 615.5 L1093 612.3 L1093.5 612.1 L1094 614.8 L1094.5 632.1 L1095 643.7 L1095.5 644.5 L1096 645.5 L1096.5 643.9 L1097 643.2 L1097.5 644 L1098 644.1 L1098.5 643.1 L1099 642.4 L1099.5 643 L1100 643.3 L1100.5 644 L1101 644.8 L1101.5 645 L1102 644.3 L1102.5 644.3 L1103 643.9 L1103.5 642.9 L1104 642.7 L1104.5 643.5 L1105 644.9 L1105.5 644.4 L1106 644.8 L1106.5 645.4 L1107 644.6 L1107.5 642.8 L1108 643 L1108.5 630.2 L1109 615 L1109.5 613.8 L1110 614.4 L1110.5 614 L1111 613.6 L1111.5 612.9 L1112 611.8 L1112.5 611.3 L1113 611.3 L1113.5 611.4 L1114 611.1 L1114.5 611.3 L1115 611.1 L1115.5 611.1 L1116 612.8 L1116.5 630.9 L1117 643.3 L1117.5 642.8 L1118 642.7 L1118.5 642.2 L1119 643.4 L1119.5 645.2 L1120 645.9 L1120.5 646.7 L1121 646.3 L1121.5 644.1 L1122 642 L1122.5 641.3 L1123 642.5 L1123.5 643.4 L1124 643.3 L1124.5 642.2 L1125 642.8 L1125.5 643.8 L1126 643.3 L1126.5 643.9 L1127 645.2 L1127.5 644 L1128 643.8 L1128.5 644.4 L1129 643.7 L1129.5 641.6 L1130 640.8 L1130.5 629.9 L1131 616.9 L1131.5 615.5 L1132 615.3 L1132.5 613.9 L1133 610.8 L1133.5 610.3 L1134 609.7 L1134.5 609.7 L1135 610.7 L1135.5 611.9 L1136 613.2 L1136.5 613.4 L1137 613.4 L1137.5 613.2 L1138 612.7 L1138.5 611 L1139 612.5 L1139.5 631 L1140 643.3 L1140.5 643.7 L1141 645.2 L1141.5 646.2 L1142 645 L1142.5 644.7 L1143 644.3 L1143.5 645.9 L1144 646.4 L1144.5 644.4 L1145 643.5 L1145.5 644.2 L1146 644.8 L1146.5 644.3 L1147 645.3 L1147.5 645.4 L1148 644.8 L1148.5 643.2 L1149 641.1 L1149.5 640.3 L1150 639.7 L1150.5 641.4 L1151 644.8 L1151.5 645.8 L1152 645.2 L1152.5 633.4 L1153 616.2 L1153.5 612.6 L1154 613.7 L1154.5 612.8 L1155 612.4 L1155.5 613.4 L1156 612.3 L1156.5 611.6 L1157 610.5 L1157.5 611.3 L1158 612.1 L1158.5 611 L1159 611.2 L1159.5 612.7 L1160 613.2 L1160.5 613.2 L1161 628.2 L1161.5 644.5 L1162 644.9 L1162.5 644.8 L1163 645.1 L1163.5 644.8 L1164 644.1 L1164.5 644.1 L1165 643.4 L1165.5 642 L1166 643.4 L1166.5 644.4 L1167 643 L1167.5 642.1 L1168 641.5 L1168.5 641.9 L1169 643.5 L1169.5 642.7 L1170 642.3 L1170.5 643.4 L1171 645.1 L1171.5 647 L1172 644.9 L1172.5 642.5 L1173 642.9 L1173.5 641.3 L1174 639 L1174.5 629.6 L1175 617.1 L1175.5 614.6 L1176 615.3 L1176.5 614.7 L1177 614.8 L1177.5 614.9 L1178 616 L1178.5 615 L1179 614.9 L1179.5 615.1 L1180 614.2 L1180.5 614.1 L1181 613.9 L1181.5 612.8 L1182 612.6 L1182.5 612.3 L1183 611.9 L1183.5 618.3 L1184 635.5 L1184.5 642.4 L1185 640.6 L1185.5 639.5 L1186 641.1 L1186.5 643.7 L1187 643.9 L1187.5 643.6 L1188 643.6 L1188.5 642.7 L1189 643.1 L1189.5 644.3 L1190 643.1 L1190.5 641.1 L1191 641.4 L1191.5 642.8 L1192 643.4 L1192.5 644.9 L1193 645.4 L1193.5 644 L1194 643.3 L1194.5 643.3 L1195 643.6 L1195.5 643.8 L1196 644.1 L1196.5 634.3 L1197 617.8 L1197.5 611.9 L1198 612.4 L1198.5 611.6 L1199 611.3 L1199.5 613 L1200 611.7 L1200.5 611.5 L1201 612.3 L1201.5 611.7 L1202 610.1 L1202.5 609.2 L1203 609.5 L1203.5 612.6 L1204 614.7 L1204.5 613.7 L1205 612.5 L1205.5 611.6 L1206 627.4 L1206.5 642.3 L1207 643.4 L1207.5 644.3 L1208 642.6 L1208.5 642.4 L1209 643 L1209.5 642.4 L1210 643.8 L1210.5 643.6 L1211 593.7 L1211.5 535.9 L1212 593.7 L1212.5 643.7 L1213 644.3 L1213.5 644.4 L1214 643.1 L1214.5 642.5 L1215 642 L1215.5 642.3 L1216 643 L1216.5 642.9 L1217 644.8 L1217.5 645.4 L1218 644.6 L1218.5 635.9 L1219 620 L1219.5 610.4 L1220 610.5 L1220.5 610.2 L1221 610.4 L1221.5 612.3 L1222 612.7 L1222.5 612.1 L1223 610.9 L1223.5 610.7 L1224 611.5 L1224.5 612 L1225 613.2 L1225.5 611.9 L1226 611.1 L1226.5 612.1 L1227 628.8 L1227.5 644.6 L1228 644 L1228.5 641.7 L1229 640.5 L1229.5 641.9 L1230 643.9 L1230.5 645.8 L1231 645.2 L1231.5 644.9 L1232 646.1 L1232.5 646.1 L1233 644.8 L1233.5 644.5 L1234 644 L1234.5 643.9 L1235 643.7 L1235.5 644.7 L1236 645.7 L1236.5 644.9 L1237 644.1 L1237.5 643.7 L1238 644.3 L1238.5 644.1 L1239 642.7 L1239.5 641.8 L1240 641.5 L1240.5 635.2 L1241 621.7 L1241.5 613.2 L1242 611.2 L1242.5 611 L1243 611.6 L1243.5 613.2 L1244 614.3 L1244.5 614 L1245 612.8 L1245.5 614.5 L1246 615.7 L1246.5 613.8 L1247 611.6 L1247.5 611.8 L1248 612.2 L1248.5 612.4 L1249 619.1 L1249.5 636 L1250 641.9 L1250.5 641.6 L1251 643 L1251.5 644.7 L1252 645 L1252.5 643.4 L1253 641.7 L1253.5 641.6 L1254 641.2 L1254.5 641.7 L1255 642.7 L1255.5 643.8 L1256 644.3 L1256.5 645 L1257 645.6 L1257.5 645.9 L1258 644 L1258.5 642.3 L1259 642.9 L1259.5 643.8 L1260 644.1 L1260.5 643.3 L1261 643.7 L1261.5 643.4 L1262 643.9 L1262.5 639.2 L1263 622.6 L1263.5 612.8 L1264 612.3 L1264.5 611.4 L1265 611.7 L1265.5 611.4 L1266 611.2 L1266.5 611.8 L1267 611.3 L1267.5 610.7 L1268 611.9 L1268.5 612.9 L1269 611.4 L1269.5 610.5 L1270 612.1 L1270.5 612.4 L1271 611.9 L1271.5 618.7 L1272 636.8 L1272.5 645.1 L1273 647 L1273.5 646.8 L1274 644.7 L1274.5 644 L1275 644.3 L1275.5 643.8 L1276 642.3 L1276.5 643.5 L1277 644 L1277.5 642.4 L1278 642.7 L1278.5 643.4 L1279 642.8 L1279.5 642.9 L1280 643.1 L1280.5 643.8 L1281 644.4 L1281.5 643.4 L1282 643.9 L1282.5 645.2 L1283 644.8 L1283.5 643.6 L1284 643.9 L1284.5 639.9 L1285 625.4 L1285.5 614.9 L1286 613.3 L1286.5 612.9 L1287 612.8 L1287.5 612.9 L1288 613.6 L1288.5 614 L1289 612.4 L1289.5 611.5 L1290 612 L1290.5 610.2 L1291 610.4 L1291.5 612.5 L1292 612.9 L1292.5 613.9 L1293 622.7 L1293.5 638.6 L1294 642.9 L1294.5 643.2 L1295 642.9 L1295.5 642.3 L1296 643.1 L1296.5 644.1 L1297 643.5 L1297.5 643.4 L1298 644.6 L1298.5 644.9 L1299 644.8 L1299.5 644.6 L1300 643.3 L1300.5 641.9 L1301 640.9 L1301.5 641.3 L1302 641.7 L1302.5 641.7 L1303 642.2 L1303.5 643.3 L1304 643.2 L1304.5 643.4 L1305 644.1 L1305.5 644.7 L1306 644.9 L1306.5 642.5 L1307 626.3 L1307.5 611.2 L1308 611.6 L1308.5 612.1 L1309 611.8 L1309.5 611.8 L1310 610.3 L1310.5 609.6 L1311 611.6 L1311.5 612.2 L1312 612.4 L1312.5 615 L1313 615.7 L1313.5 615.4 L1314 615.1 L1314.5 617.9 L1315 630.9 L1315.5 637 L1316 638.1 L1316.5 639.3 L1317 642 L1317.5 644 L1318 644 L1318.5 644.9 L1319 646 L1319.5 644.8 L1320 642.5 L1320.5 643.5 L1321 644.4 L1321.5 644.6 L1322 644.2 L1322.5 644.4 L1323 645.1 L1323.5 646.1 L1324 646.3 L1324.5 645.2 L1325 643 L1325.5 641.1 L1326 641 L1326.5 641.3 L1327 642.6 L1327.5 644.3 L1328 645.4 L1328.5 644.3 L1329 628 L1329.5 612.5 L1330 611.6 L1330.5 611.3 L1331 611.9 L1331.5 612.4 L1332 611.4 L1332.5 612.4 L1333 613.6 L1333.5 612.7 L1334 611.9 L1334.5 611.4 L1335 610.2 L1335.5 609 L1336 608.8 L1336.5 610.4 L1337 611.9 L1337.5 628.1 L1338 643.7 L1338.5 644.2 L1339 643.4 L1339.5 642.4 L1340 640.6 L1340.5 641 L1341 641.2 L1341.5 641.7 L1342 643.2 L1342.5 645.1 L1343 645.1 L1343.5 642.8 L1344 642.7 L1344.5 642.5 L1345 641.6 L1345.5 642.8 L1346 643.2 L1346.5 643 L1347 642.4 L1347.5 642.7 L1348 643.4 L1348.5 643.8 L1349 643.3 L1349.5 643.6 L1350 645.5 L1350.5 645.1 L1351 627.6 L1351.5 610 L1352 610.1 L1352.5 611.9 L1353 613.9 L1353.5 613.8 L1354 613.3 L1354.5 614.5 L1355 613.9 L1355.5 613.3 L1356 612.7 L1356.5 614 L1357 614.4 L1357.5 614.7 L1358 616.4 L1358.5 614 L1359 613.2 L1359.5 624.9 L1360 642.5 L1360.5 645 L1361 644.7 L1361.5 644.9 L1362 644.3 L1362.5 642.6 L1363 643.3 L1363.5 644.3 L1364 644.3 L1364.5 643.6 L1365 642.3 L1365.5 642.4 L1366 643.9 L1366.5 646.3 L1367 644.1 L1367.5 641.1 L1368 639.5 L1368.5 640.7 L1369 642.1 L1369.5 642 L1370 643.4 L1370.5 643.9 L1371 640.9 L1371.5 637.6 L1372 637.4 L1372.5 640.2 L1373 629.5 L1373.5 614.8 L1374 614.1 L1374.5 614.3 L1375 615 L1375.5 617.9 L1376 617 L1376.5 614.2 L1377 613.2 L1377.5 613.2 L1378 614.4 L1378.5 614.6 L1379 613.6 L1379.5 614.5 L1380 615.7 L1380.5 614.6 L1381 628.7 L1381.5 641.9 L1382 642.7 L1382.5 643.9 L1383 645.1 L1383.5 645.9 L1384 645.2 L1384.5 644.3 L1385 644.1 L1385.5 643.5 L1386 642.9 L1386.5 642.9 L1387 643 L1387.5 643 L1388 643.4 L1388.5 643.6 L1389 644.1 L1389.5 644.9 L1390 643.9 L1390.5 644.3 L1391 643.5 L1391.5 643 L1392 642.7 L1392.5 643.7 L1393 644.2 L1393.5 643.1 L1394 643.2 L1394.5 643.5 L1395 629.4 L1395.5 612.6 L1396 612.2 L1396.5 614.2 L1397 615.3 L1397.5 615.3 L1398 614.4 L1398.5 614.1 L1399 612.7 L1399.5 612.8 L1400 612.8 L1400.5 612.2 L1401 613.4 L1401.5 612.3 L1402 611.9 L1402.5 612.2 L1403 613 L1403.5 614.1 L1404 628.8 L1404.5 641.4 L1405 641.9 L1405.5 644.1 L1406 645 L1406.5 644.8 L1407 646.4 L1407.5 647.1 L1408 645.7 L1408.5 645 L1409 644.7 L1409.5 644.4 L1410 643.9 L1410.5 644.2 L1411 644.7 L1411.5 644.3 L1412 643 L1412.5 642.1 L1413 642.3 L1413.5 644.2 L1414 647.3 L1414.5 646.5 L1415 644.7 L1415.5 644.5 L1416 644.7 L1416.5 643 L1417 631 L1417.5 615.7 L1418 609.8 L1418.5 609.8 L1419 611.7 L1419.5 610.2 L1420 608.3 L1420.5 607.7 L1421 608.7 L1421.5 609.4 L1422 609.7 L1422.5 608.9 L1423 608 L1423.5 609.3 L1424 611 L1424.5 610.2 L1425 609.2 L1425.5 613.9 L1426 632.3 L1426.5 644.9 L1427 643.4 L1427.5 642.5 L1428 644.2 L1428.5 643.9 L1429 643.7 L1429.5 644.1 L1430 644.4 L1430.5 643.8 L1431 642.7 L1431.5 643.1 L1432 643.8 L1432.5 643.2 L1433 644.1 L1433.5 643.5 L1434 642.8 L1434.5 642.3 L1435 642.4 L1435.5 642.5 L1436 642.9 L1436.5 642.5 L1437 642 L1437.5 641.7 L1438 642.9 L1438.5 642.6 L1439 632.6 L1439.5 618.5 L1440 613.2 L1440.5 612.2 L1441 612.4 L1441.5 611.3 L1442 610.3 L1442.5 611.4 L1443 612.6 L1443.5 615 L1444 616.6 L1444.5 614.5 L1445 613 L1445.5 612.6 L1446 613.2 L1446.5 614.2 L1447 614.3 L1447.5 614.1 L1448 621.1 L1448.5 636.9 L1449 644.5 L1449.5 645.2 L1450 643.6 L1450.5 642.9 L1451 643.4 L1451.5 642.5 L1452 642 L1452.5 642.6 L1453 642.6 L1453.5 643.8 L1454 645.6 L1454.5 645.2 L1455 644.3 L1455.5 643.9 L1456 644.7 L1456.5 645.1 L1457 645 L1457.5 644.2 L1458 643.3 L1458.5 642.4 L1459 642.4 L1459.5 643.1 L1460 643.4 L1460.5 643.5 L1461 633.5 L1461.5 618.7 L1462 612.5 L1462.5 611.1 L1463 610.6 L1463.5 610.8 L1464 610.5 L1464.5 610.5 L1465 611 L1465.5 610.9 L1466 612.2 L1466.5 611.8 L1467 610.8 L1467.5 610.8 L1468 611.5 L1468.5 612.5 L1469 625.7 L1469.5 644.6 L1470 645.2 L1470.5 644.9 L1471 643.2 L1471.5 642.2 L1472 642.9 L1472.5 643.3 L1473 644.1 L1473.5 642.9 L1474 642 L1474.5 643.5 L1475 642.6 L1475.5 643 L1476 645.8 L1476.5 646.5 L1477 645.1 L1477.5 643.4 L1478 643.2 L1478.5 642 L1479 639.8 L1479.5 639.2 L1480 640.1 L1480.5 641.6 L1481 642.3 L1481.5 643.1 L1482 642.6 L1482.5 643.7 L1483 636.8 L1483.5 621.5 L1484 616.5 L1484.5 616.1 L1485 614.4 L1485.5 614.4 L1486 615.4 L1486.5 616.6 L1487 617.3 L1487.5 616.7 L1488 616.4 L1488.5 616.1 L1489 616.4 L1489.5 615.9 L1490 614.6 L1490.5 615.6 L1491 614.6 L1491.5 621.7 L1492 637.3 L1492.5 643.1 L1493 643.4 L1493.5 643.5 L1494 643.6 L1494.5 643.2 L1495 642.6 L1495.5 643 L1496 644.8 L1496.5 646.2 L1497 645.5 L1497.5 645.2 L1498 646.5 L1498.5 645.3 L1499 644 L1499.5 644.7 L1500 644.3 L1500.5 642 L1501 641.7 L1501.5 642.7 L1502 642 L1502.5 642.3 L1503 643.1 L1503.5 642 L1504 643.7 L1504.5 644.7 L1505 637.4 L1505.5 621.1 L1506 612.2 L1506.5 613.3 L1507 614.2 L1507.5 614.2 L1508 612.7 L1508.5 611.2 L1509 611.7 L1509.5 611.4 L1510 609.5 L1510.5 609.1 L1511 610 L1511.5 610.7 L1512 610.6 L1512.5 610.4 L1513 617.4 L1513.5 635.7 L1514 644.4 L1514.5 645.4 L1515 645.2 L1515.5 644.2 L1516 642.5 L1516.5 641.2 L1517 641.5 L1517.5 642.8 L1518 644.1 L1518.5 646.4 L1519 647.5 L1519.5 646.1 L1520 646.2 L1520.5 646.2 L1521 645.4 L1521.5 644.4 L1522 644.8 L1522.5 644.4 L1523 645 L1523.5 646.1 L1524 645.9 L1524.5 644 L1525 642.9 L1525.5 641.9 L1526 641.1 L1526.5 641.3 L1527 635.8 L1527.5 621.5 L1528 613.1 L1528.5 611.7 L1529 612.3 L1529.5 613.2 L1530 613 L1530.5 612.5 L1531 612 L1531.5 611.7 L1532 612.9 L1532.5 614.6 L1533 615.4 L1533.5 615 L1534 614.2 L1534.5 613.2 L1535 617.2 L1535.5 633.6 L1536 644.6 L1536.5 644.2 L1537 644.2 L1537.5 643.6 L1538 643.1 L1538.5 642.7 L1539 642.6 L1539.5 642.4 L1540 642.5 L1540.5 642.4 L1541 642.1 L1541.5 642.6 L1542 643.9 L1542.5 644.9 L1543 646.7 L1543.5 647.4 L1544 646.3 L1544.5 645.7 L1545 646 L1545.5 644.7 L1546 642.4 L1546.5 642.9 L1547 643.3 L1547.5 641.6 L1548 642.7 L1548.5 643.8 L1549 639.5 L1549.5 619.9 L1550 612.8 L1550.5 612.3 L1551 612.3 L1551.5 612.3 L1552 612.3 L1552.5 612.3 L1553 612.3 L1553.5 612.3 L1554 612.3 L1554.5 612.3 L1554.5 674.5 L1003 674.5 Z" fill="#7eb26d" fill-opacity="0.8"/><path d="M1003 610.1 L1003.5 609.8 L1004 610 L1004.5 610 L1005 609.2 L1005.5 609.3 L1006 610.3 L1006.5 610.4 L1007 610.2 L1007.5 631.2 L1008 642.6 L1008.5 641.4 L1009 640.9 L1009.5 641.5 L1010 643.6 L1010.5 645 L1011 644.8 L1011.5 641.6 L1012 640.3 L1012.5 640.5 L1013 640.5 L1013.5 640 L1014 640.2 L1014.5 641.1 L1015 642.6 L1015.5 644.2 L1016 644.2 L1016.5 644.9 L1017 645.7 L1017.5 644.8 L1018 642.4 L1018.5 641.7 L1019 642.5 L1019.5 641.2 L1020 638.8 L1020.5 626.5 L1021 613.2 L1021.5 612 L1022 611.8 L1022.5 613 L1023 614.3 L1023.5 614.9 L1024 615.5 L1024.5 615.5 L1025 614.8 L1025.5 613.7 L1026 612.9 L1026.5 614.3 L1027 614.2 L1027.5 613.2 L1028 611.6 L1028.5 623.5 L1029 640.5 L1029.5 641.9 L1030 641.6 L1030.5 643.1 L1031 644.8 L1031.5 645.1 L1032 643.9 L1032.5 642.5 L1033 643 L1033.5 644.1 L1034 644.3 L1034.5 643.3 L1035 643.3 L1035.5 643.7 L1036 643.1 L1036.5 642.2 L1037 642.5 L1037.5 641.7 L1038 641.8 L1038.5 642.8 L1039 643.1 L1039.5 644.1 L1040 645 L1040.5 645 L1041 644.8 L1041.5 643.8 L1042 641.6 L1042.5 627.1 L1043 614.1 L1043.5 613.9 L1044 614.6 L1044.5 616.4 L1045 617.8 L1045.5 615.7 L1046 613.5 L1046.5 614.7 L1047 616.7 L1047.5 616.3 L1048 615.4 L1048.5 612.9 L1049 613.7 L1049.5 615.1 L1050 618 L1050.5 634.1 L1051 641.3 L1051.5 643.8 L1052 646.3 L1052.5 645.9 L1053 645 L1053.5 644.6 L1054 644.7 L1054.5 644.8 L1055 644.2 L1055.5 644.9 L1056 645.9 L1056.5 645.6 L1057 644.4 L1057.5 643.1 L1058 643.2 L1058.5 644 L1059 643.9 L1059.5 642.8 L1060 642 L1060.5 643.4 L1061 643.4 L1061.5 643.5 L1062 644.5 L1062.5 644.1 L1063 643.9 L1063.5 644 L1064 642.5 L1064.5 629.3 L1065 617.2 L1065.5 616.9 L1066 615.7 L1066.5 616.2 L1067 618.1 L1067.5 618.5 L1068 616.7 L1068.5 614.8 L1069 614.8 L1069.5 617.1 L1070 619.7 L1070.5 618.3 L1071 617.1 L1071.5 617 L1072 617.4 L1072.5 616.9 L1073 615.1 L1073.5 626 L1074 642.2 L1074.5 641.1 L1075 640.8 L1075.5 642 L1076 643.1 L1076.5 642.2 L1077 642.7 L1077.5 642.3 L1078 641.9 L1078.5 643.5 L1079 643.3 L1079.5 643.4 L1080 644.3 L1080.5 644.7 L1081 644.1 L1081.5 643.7 L1082 642.5 L1082.5 642.6 L1083 644.1 L1083.5 643.3 L1084 642.4 L1084.5 643.1 L1085 643.8 L1085.5 643.8 L1086 644.7 L1086.5 629.8 L1087 614.6 L1087.5 616.7 L1088 618.1 L1088.5 617.2 L1089 614.6 L1089.5 613.5 L1090 613.2 L1090.5 613 L1091 613.8 L1091.5 615.3 L1092 616.4 L1092.5 615.5 L1093 612.3 L1093.5 612.1 L1094 614.8 L1094.5 632.1 L1095 643.7 L1095.5 644.5 L1096 645.5 L1096.5 643.9 L1097 643.2 L1097.5 644 L1098 644.1 L1098.5 643.1 L1099 642.4 L1099.5 643 L1100 643.3 L1100.5 644 L1101 644.8 L1101.5 645 L1102 644.3 L1102.5 644.3 L1103 643.9 L1103.5 642.9 L1104 642.7 L1104.5 643.5 L1105 644.9 L1105.5 644.4 L1106 644.8 L1106.5 645.4 L1107 644.6 L1107.5 642.8 L1108 643 L1108.5 630.2 L1109 615 L1109.5 613.8 L1110 614.4 L1110.5 614 L1111 613.6 L1111.5 612.9 L1112 611.8 L1112.5 611.3 L1113 611.3 L1113.5 611.4 L1114 611.1 L1114.5 611.3 L1115 611.1 L1115.5 611.1 L1116 612.8 L1116.5 630.9 L1117 643.3 L1117.5 642.8 L1118 642.7 L1118.5 642.2 L1119 643.4 L1119.5 645.2 L1120 645.9 L1120.5 646.7 L1121 646.3 L1121.5 644.1 L1122 642 L1122.5 641.3 L1123 642.5 L1123.5 643.4 L1124 643.3 L1124.5 642.2 L1125 642.8 L1125.5 643.8 L1126 643.3 L1126.5 643.9 L1127 645.2 L1127.5 644 L1128 643.8 L1128.5 644.4 L1129 643.7 L1129.5 641.6 L1130 640.8 L1130.5 629.9 L1131 616.9 L1131.5 615.5 L1132 615.3 L1132.5 613.9 L1133 610.8 L1133.5 610.3 L1134 609.7 L1134.5 609.7 L1135 610.7 L1135.5 611.9 L1136 613.2 L1136.5 613.4 L1137 613.4 L1137.5 613.2 L1138 612.7 L1138.5 611 L1139 612.5 L1139.5 631 L1140 643.3 L1140.5 643.7 L1141 645.2 L1141.5 646.2 L1142 645 L1142.5 644.7 L1143 644.3 L1143.5 645.9 L1144 646.4 L1144.5 644.4 L1145 643.5 L1145.5 644.2 L1146 644.8 L1146.5 644.3 L1147 645.3 L1147.5 645.4 L1148 644.8 L1148.5 643.2 L1149 641.1 L1149.5 640.3 L1150 639.7 L1150.5 641.4 L1151 644.8 L1151.5 645.8 L1152 645.2 L1152.5 633.4 L1153 616.2 L1153.5 612.6 L1154 613.7 L1154.5 612.8 L1155 612.4 L1155.5 613.4 L1156 612.3 L1156.5 611.6 L1157 610.5 L1157.5 611.3 L1158 612.1 L1158.5 611 L1159 611.2 L1159.5 612.7 L1160 613.2 L1160.5 613.2 L1161 628.2 L1161.5 644.5 L1162 644.9 L1162.5 644.8 L1163 645.1 L1163.5 644.8 L1164 644.1 L1164.5 644.1 L1165 643.4 L1165.5 642 L1166 643.4 L1166.5 644.4 L1167 643 L1167.5 642.1 L1168 641.5 L1168.5 641.9 L1169 643.5 L1169.5 642.7 L1170 642.3 L1170.5 643.4 L1171 645.1 L1171.5 647 L1172 644.9 L1172.5 642.5 L1173 642.9 L1173.5 641.3 L1174 639 L1174.5 629.6 L1175 617.1 L1175.5 614.6 L1176 615.3 L1176.5 614.7 L1177 614.8 L1177.5 614.9 L1178 616 L1178.5 615 L1179 614.9 L1179.5 615.1 L1180 614.2 L1180.5 614.1 L1181 613.9 L1181.5 612.8 L1182 612.6 L1182.5 612.3 L1183 611.9 L1183.5 618.3 L1184 635.5 L1184.5 642.4 L1185 640.6 L1185.5 639.5 L1186 641.1 L1186.5 643.7 L1187 643.9 L1187.5 643.6 L1188 643.6 L1188.5 642.7 L1189 643.1 L1189.5 644.3 L1190 643.1 L1190.5 641.1 L1191 641.4 L1191.5 642.8 L1192 643.4 L1192.5 644.9 L1193 645.4 L1193.5 644 L1194 643.3 L1194.5 643.3 L1195 643.6 L1195.5 643.8 L1196 644.1 L1196.5 634.3 L1197 617.8 L1197.5 611.9 L1198 612.4 L1198.5 611.6 L1199 611.3 L1199.5 613 L1200 611.7 L1200.5 611.5 L1201 612.3 L1201.5 611.7 L1202 610.1 L1202.5 609.2 L1203 609.5 L1203.5 612.6 L1204 614.7 L1204.5 613.7 L1205 612.5 L1205.5 611.6 L1206 627.4 L1206.5 642.3 L1207 643.4 L1207.5 644.3 L1208 642.6 L1208.5 642.4 L1209 643 L1209.5 642.4 L1210 643.8 L1210.5 643.6 L1211 593.7 L1211.5 535.9 L1212 593.7 L1212.5 643.7 L1213 644.3 L1213.5 644.4 L1214 643.1 L1214.5 642.5 L1215 642 L1215.5 642.3 L1216 643 L1216.5 642.9 L1217 644.8 L1217.5 645.4 L1218 644.6 L1218.5 635.9 L1219 620 L1219.5 610.4 L1220 610.5 L1220.5 610.2 L1221 610.4 L1221.5 612.3 L1222 612.7 L1222.5 612.1 L1223 610.9 L1223.5 610.7 L1224 611.5 L1224.5 612 L1225 613.2 L1225.5 611.9 L1226 611.1 L1226.5 612.1 L1227 628.8 L1227.5 644.6 L1228 644 L1228.5 641.7 L1229 640.5 L1229.5 641.9 L1230 643.9 L1230.5 645.8 L1231 645.2 L1231.5 644.9 L1232 646.1 L1232.5 646.1 L1233 644.8 L1233.5 644.5 L1234 644 L1234.5 643.9 L1235 643.7 L1235.5 644.7 L1236 645.7 L1236.5 644.9 L1237 644.1 L1237.5 643.7 L1238 644.3 L1238.5 644.1 L1239 642.7 L1239.5 641.8 L1240 641.5 L1240.5 635.2 L1241 621.7 L1241.5 613.2 L1242 611.2 L1242.5 611 L1243 611.6 L1243.5 613.2 L1244 614.3 L1244.5 614 L1245 612.8 L1245.5 614.5 L1246 615.7 L1246.5 613.8 L1247 611.6 L1247.5 611.8 L1248 612.2 L1248.5 612.4 L1249 619.1 L1249.5 636 L1250 641.9 L1250.5 641.6 L1251 643 L1251.5 644.7 L1252 645 L1252.5 643.4 L1253 641.7 L1253.5 641.6 L1254 641.2 L1254.5 641.7 L1255 642.7 L1255.5 643.8 L1256 644.3 L1256.5 645 L1257 645.6 L1257.5 645.9 L1258 644 L1258.5 642.3 L1259 642.9 L1259.5 643.8 L1260 644.1 L1260.5 643.3 L1261 643.7 L1261.5 643.4 L1262 643.9 L1262.5 639.2 L1263 622.6 L1263.5 612.8 L1264 612.3 L1264.5 611.4 L1265 611.7 L1265.5 611.4 L1266 611.2 L1266.5 611.8 L1267 611.3 L1267.5 610.7 L1268 611.9 L1268.5 612.9 L1269 611.4 L1269.5 610.5 L1270 612.1 L1270.5 612.4 L1271 611.9 L1271.5 618.7 L1272 636.8 L1272.5 645.1 L1273 647 L1273.5 646.8 L1274 644.7 L1274.5 644 L1275 644.3 L1275.5 643.8 L1276 642.3 L1276.5 643.5 L1277 644 L1277.5 642.4 L1278 642.7 L1278.5 643.4 L1279 642.8 L1279.5 642.9 L1280 643.1 L1280.5 643.8 L1281 644.4 L1281.5 643.4 L1282 643.9 L1282.5 645.2 L1283 644.8 L1283.5 643.6 L1284 643.9 L1284.5 639.9 L1285 625.4 L1285.5 614.9 L1286 613.3 L1286.5 612.9 L1287 612.8 L1287.5 612.9 L1288 613.6 L1288.5 614 L1289 612.4 L1289.5 611.5 L1290 612 L1290.5 610.2 L1291 610.4 L1291.5 612.5 L1292 612.9 L1292.5 613.9 L1293 622.7 L1293.5 638.6 L1294 642.9 L1294.5 643.2 L1295 642.9 L1295.5 642.3 L1296 643.1 L1296.5 644.1 L1297 643.5 L1297.5 643.4 L1298 644.6 L1298.5 644.9 L1299 644.8 L1299.5 644.6 L1300 643.3 L1300.5 641.9 L1301 640.9 L1301.5 641.3 L1302 641.7 L1302.5 641.7 L1303 642.2 L1303.5 643.3 L1304 643.2 L1304.5 643.4 L1305 644.1 L1305.5 644.7 L1306 644.9 L1306.5 642.5 L1307 626.3 L1307.5 611.2 L1308 611.6 L1308.5 612.1 L1309 611.8 L1309.5 611.8 L1310 610.3 L1310.5 609.6 L1311 611.6 L1311.5 612.2 L1312 612.4 L1312.5 615 L1313 615.7 L1313.5 615.4 L1314 615.1 L1314.5 617.9 L1315 630.9 L1315.5 637 L1316 638.1 L1316.5 639.3 L1317 642 L1317.5 644 L1318 644 L1318.5 644.9 L1319 646 L1319.5 644.8 L1320 642.5 L1320.5 643.5 L1321 644.4 L1321.5 644.6 L1322 644.2 L1322.5 644.4 L1323 645.1 L1323.5 646.1 L1324 646.3 L1324.5 645.2 L1325 643 L1325.5 641.1 L1326 641 L1326.5 641.3 L1327 642.6 L1327.5 644.3 L1328 645.4 L1328.5 644.3 L1329 628 L1329.5 612.5 L1330 611.6 L1330.5 611.3 L1331 611.9 L1331.5 612.4 L1332 611.4 L1332.5 612.4 L1333 613.6 L1333.5 612.7 L1334 611.9 L1334.5 611.4 L1335 610.2 L1335.5 609 L1336 608.8 L1336.5 610.4 L1337 611.9 L1337.5 628.1 L1338 643.7 L1338.5 644.2 L1339 643.4 L1339.5 642.4 L1340 640.6 L1340.5 641 L1341 641.2 L1341.5 641.7 L1342 643.2 L1342.5 645.1 L1343 645.1 L1343.5 642.8 L1344 642.7 L1344.5 642.5 L1345 641.6 L1345.5 642.8 L1346 643.2 L1346.5 643 L1347 642.4 L1347.5 642.7 L1348 643.4 L1348.5 643.8 L1349 643.3 L1349.5 643.6 L1350 645.5 L1350.5 645.1 L1351 627.6 L1351.5 610 L1352 610.1 L1352.5 611.9 L1353 613.9 L1353.5 613.8 L1354 613.3 L1354.5 614.5 L1355 613.9 L1355.5 613.3 L1356 612.7 L1356.5 614 L1357 614.4 L1357.5 614.7 L1358 616.4 L1358.5 614 L1359 613.2 L1359.5 624.9 L1360 642.5 L1360.5 645 L1361 644.7 L1361.5 644.9 L1362 644.3 L1362.5 642.6 L1363 643.3 L1363.5 644.3 L1364 644.3 L1364.5 643.6 L1365 642.3 L1365.5 642.4 L1366 643.9 L1366.5 646.3 L1367 644.1 L1367.5 641.1 L1368 639.5 L1368.5 640.7 L1369 642.1 L1369.5 642 L1370 643.4 L1370.5 643.9 L1371 640.9 L1371.5 637.6 L1372 637.4 L1372.5 640.2 L1373 629.5 L1373.5 614.8 L1374 614.1 L1374.5 614.3 L1375 615 L1375.5 617.9 L1376 617 L1376.5 614.2 L1377 613.2 L1377.5 613.2 L1378 614.4 L1378.5 614.6 L1379 613.6 L1379.5 614.5 L1380 615.7 L1380.5 614.6 L1381 628.7 L1381.5 641.9 L1382 642.7 L1382.5 643.9 L1383 645.1 L1383.5 645.9 L1384 645.2 L1384.5 644.3 L1385 644.1 L1385.5 643.5 L1386 642.9 L1386.5 642.9 L1387 643 L1387.5 643 L1388 643.4 L1388.5 643.6 L1389 644.1 L1389.5 644.9 L1390 643.9 L1390.5 644.3 L1391 643.5 L1391.5 643 L1392 642.7 L1392.5 643.7 L1393 644.2 L1393.5 643.1 L1394 643.2 L1394.5 643.5 L1395 629.4 L1395.5 612.6 L1396 612.2 L1396.5 614.2 L1397 615.3 L1397.5 615.3 L1398 614.4 L1398.5 614.1 L1399 612.7 L1399.5 612.8 L1400 612.8 L1400.5 612.2 L1401 613.4 L1401.5 612.3 L1402 611.9 L1402.5 612.2 L1403 613 L1403.5 614.1 L1404 628.8 L1404.5 641.4 L1405 641.9 L1405.5 644.1 L1406 645 L1406.5 644.8 L1407 646.4 L1407.5 647.1 L1408 645.7 L1408.5 645 L1409 644.7 L1409.5 644.4 L1410 643.9 L1410.5 644.2 L1411 644.7 L1411.5 644.3 L1412 643 L1412.5 642.1 L1413 642.3 L1413.5 644.2 L1414 647.3 L1414.5 646.5 L1415 644.7 L1415.5 644.5 L1416 644.7 L1416.5 643 L1417 631 L1417.5 615.7 L1418 609.8 L1418.5 609.8 L1419 611.7 L1419.5 610.2 L1420 608.3 L1420.5 607.7 L1421 608.7 L1421.5 609.4 L1422 609.7 L1422.5 608.9 L1423 608 L1423.5 609.3 L1424 611 L1424.5 610.2 L1425 609.2 L1425.5 613.9 L1426 632.3 L1426.5 644.9 L1427 643.4 L1427.5 642.5 L1428 644.2 L1428.5 643.9 L1429 643.7 L1429.5 644.1 L1430 644.4 L1430.5 643.8 L1431 642.7 L1431.5 643.1 L1432 643.8 L1432.5 643.2 L1433 644.1 L1433.5 643.5 L1434 642.8 L1434.5 642.3 L1435 642.4 L1435.5 642.5 L1436 642.9 L1436.5 642.5 L1437 642 L1437.5 641.7 L1438 642.9 L1438.5 642.6 L1439 632.6 L1439.5 618.5 L1440 613.2 L1440.5 612.2 L1441 612.4 L1441.5 611.3 L1442 610.3 L1442.5 611.4 L1443 612.6 L1443.5 615 L1444 616.6 L1444.5 614.5 L1445 613 L1445.5 612.6 L1446 613.2 L1446.5 614.2 L1447 614.3 L1447.5 614.1 L1448 621.1 L1448.5 636.9 L1449 644.5 L1449.5 645.2 L1450 643.6 L1450.5 642.9 L1451 643.4 L1451.5 642.5 L1452 642 L1452.5 642.6 L1453 642.6 L1453.5 643.8 L1454 645.6 L1454.5 645.2 L1455 644.3 L1455.5 643.9 L1456 644.7 L1456.5 645.1 L1457 645 L1457.5 644.2 L1458 643.3 L1458.5 642.4 L1459 642.4 L1459.5 643.1 L1460 643.4 L1460.5 643.5 L1461 633.5 L1461.5 618.7 L1462 612.5 L1462.5 611.1 L1463 610.6 L1463.5 610.8 L1464 610.5 L1464.5 610.5 L1465 611 L1465.5 610.9 L1466 612.2 L1466.5 611.8 L1467 610.8 L1467.5 610.8 L1468 611.5 L1468.5 612.5 L1469 625.7 L1469.5 644.6 L1470 645.2 L1470.5 644.9 L1471 643.2 L1471.5 642.2 L1472 642.9 L1472.5 643.3 L1473 644.1 L1473.5 642.9 L1474 642 L1474.5 643.5 L1475 642.6 L1475.5 643 L1476 645.8 L1476.5 646.5 L1477 645.1 L1477.5 643.4 L1478 643.2 L1478.5 642 L1479 639.8 L1479.5 639.2 L1480 640.1 L1480.5 641.6 L1481 642.3 L1481.5 643.1 L1482 642.6 L1482.5 643.7 L1483 636.8 L1483.5 621.5 L1484 616.5 L1484.5 616.1 L1485 614.4 L1485.5 614.4 L1486 615.4 L1486.5 616.6 L1487 617.3 L1487.5 616.7 L1488 616.4 L1488.5 616.1 L1489 616.4 L1489.5 615.9 L1490 614.6 L1490.5 615.6 L1491 614.6 L1491.5 621.7 L1492 637.3 L1492.5 643.1 L1493 643.4 L1493.5 643.5 L1494 643.6 L1494.5 643.2 L1495 642.6 L1495.5 643 L1496 644.8 L1496.5 646.2 L1497 645.5 L1497.5 645.2 L1498 646.5 L1498.5 645.3 L1499 644 L1499.5 644.7 L1500 644.3 L1500.5 642 L1501 641.7 L1501.5 642.7 L1502 642 L1502.5 642.3 L1503 643.1 L1503.5 642 L1504 643.7 L1504.5 644.7 L1505 637.4 L1505.5 621.1 L1506 612.2 L1506.5 613.3 L1507 614.2 L1507.5 614.2 L1508 612.7 L1508.5 611.2 L1509 611.7 L1509.5 611.4 L1510 609.5 L1510.5 609.1 L1511 610 L1511.5 610.7 L1512 610.6 L1512.5 610.4 L1513 617.4 L1513.5 635.7 L1514 644.4 L1514.5 645.4 L1515 645.2 L1515.5 644.2 L1516 642.5 L1516.5 641.2 L1517 641.5 L1517.5 642.8 L1518 644.1 L1518.5 646.4 L1519 647.5 L1519.5 646.1 L1520 646.2 L1520.5 646.2 L1521 645.4 L1521.5 644.4 L1522 644.8 L1522.5 644.4 L1523 645 L1523.5 646.1 L1524 645.9 L1524.5 644 L1525 642.9 L1525.5 641.9 L1526 641.1 L1526.5 641.3 L1527 635.8 L1527.5 621.5 L1528 613.1 L1528.5 611.7 L1529 612.3 L1529.5 613.2 L1530 613 L1530.5 612.5 L1531 612 L1531.5 611.7 L1532 612.9 L1532.5 614.6 L1533 615.4 L1533.5 615 L1534 614.2 L1534.5 613.2 L1535 617.2 L1535.5 633.6 L1536 644.6 L1536.5 644.2 L1537 644.2 L1537.5 643.6 L1538 643.1 L1538.5 642.7 L1539 642.6 L1539.5 642.4 L1540 642.5 L1540.5 642.4 L1541 642.1 L1541.5 642.6 L1542 643.9 L1542.5 644.9 L1543 646.7 L1543.5 647.4 L1544 646.3 L1544.5 645.7 L1545 646 L1545.5 644.7 L1546 642.4 L1546.5 642.9 L1547 643.3 L1547.5 641.6 L1548 642.7 L1548.5 643.8 L1549 639.5 L1549.5 619.9 L1550 612.8 L1550.5 612.3 L1551 612.3 L1551.5 612.3 L1552 612.3 L1552.5 612.3 L1553 612.3 L1553.5 612.3 L1554 612.3 L1554.5 612.3" fill="none" stroke="#7eb26d" stroke-width="2.6" stroke-linejoin="round"/><rect x="983" y="708.9" width="12" height="4" rx="1" fill="#7eb26d"/><text x="998.9" y="713.5" class="lg" textLength="77.7" lengthAdjust="spacingAndGlyphs">Load-power.last</text><text x="1083.1" y="713.5" class="lg" textLength="42.4" lengthAdjust="spacingAndGlyphs">Min: 5 W</text><text x="1131.6" y="713.5" class="lg" textLength="50.9" lengthAdjust="spacingAndGlyphs">Max: 24 W</text><text x="1189" y="713.5" class="lg" textLength="42" lengthAdjust="spacingAndGlyphs">Avg: 7 W</text><text x="1237.6" y="713.5" class="lg" textLength="66.4" lengthAdjust="spacingAndGlyphs">Current: 11 W</text><line x1="72" y1="773.1" x2="300.8" y2="773.1" class="g"/><line x1="72" y1="808.5" x2="300.8" y2="808.5" class="g"/><line x1="72" y1="843.8" x2="300.8" y2="843.8" class="g"/><line x1="72" y1="879.1" x2="300.8" y2="879.1" class="g"/><line x1="72" y1="914.5" x2="300.8" y2="914.5" class="g"/><line x1="80.6" y1="773.1" x2="80.6" y2="914.5" class="g"/><line x1="154.4" y1="773.1" x2="154.4" y2="914.5" class="g"/><line x1="227.3" y1="773.1" x2="227.3" y2="914.5" class="g"/><line x1="300.4" y1="773.1" x2="300.4" y2="914.5" class="g"/><text x="67" y="775.7" class="yl">25.0 °C</text><text x="67" y="811.1" class="yl">20.0 °C</text><text x="67" y="846.4" class="yl">15.0 °C</text><text x="67" y="881.8" class="yl">10.0 °C</text><text x="67" y="917.1" class="yl">5.0 °C</text><text x="80.6" y="930.8" class="xl">5/8</text><text x="154.4" y="930.8" class="xl">5/16</text><text x="227.3" y="930.8" class="xl">5/24</text><text x="300.4" y="930.8" class="xl">6/1</text><path d="M71.3 863.3 L71.5 869.3 L72.4 868.8 L72.8 865.3 L73.2 860 L73.7 853.4 L74.3 846 L74.9 838.5 L75.5 831.2 L76.1 824.9 L76.7 819.9 L77.3 817 L77.8 816.6 L78.4 820.8 L79 829.7 L79.5 841.6 L80 855 L80.5 868.1 L81 879.3 L81.6 887 L82.2 889.4 L82.7 886.8 L83.2 880.5 L83.8 871.5 L84.3 860.6 L84.9 848.8 L85.5 836.8 L86 825.7 L86.6 816.2 L87.1 809.2 L87.6 805.7 L88.2 806.6 L88.8 812 L89.3 820.6 L89.8 830.9 L90.3 841.3 L90.9 850.4 L91.4 856.8 L92 859 L92.5 856.7 L93 851.1 L93.5 843.2 L94 834 L94.6 824.2 L95.1 814.9 L95.7 807 L96.2 801.5 L96.7 799.2 L97.2 800.4 L97.8 804.2 L98.3 810.1 L98.8 817.3 L99.4 825.2 L99.9 833.1 L100.4 840.5 L100.9 846.6 L101.3 850.8 L101.8 852.5 L102.4 847.2 L102.9 834.2 L103.4 818.9 L103.9 806.6 L104.6 802.9 L105 806.2 L105.5 813 L106 822.3 L106.5 833.1 L107.1 844.4 L107.6 855.2 L108.2 864.7 L108.8 871.7 L109.4 875.3 L109.9 875.3 L110.4 873.1 L110.9 869 L111.5 863.7 L112.1 857.6 L112.6 851.2 L113.2 845 L113.7 839.4 L114.3 835.1 L114.8 832.4 L115.2 831.8 L115.9 835.7 L116.5 843.9 L117 854.8 L117.5 866.7 L118.1 877.8 L118.6 886.3 L119.2 890.5 L119.7 890 L120.2 886.4 L120.8 880.6 L121.3 873.6 L121.9 866.5 L122.4 860.1 L123 855.4 L123.5 853.6 L124 854.8 L124.6 858.3 L125.1 863.4 L125.6 869.3 L126.2 875.4 L126.7 880.9 L127.3 885.1 L127.9 887.3 L128.3 887.2 L128.8 885.8 L129.3 883.3 L129.8 880.3 L130.4 876.9 L130.9 873.5 L131.4 870.6 L131.9 868.4 L132.4 867.3 L132.9 867.7 L133.4 870.9 L134 876.7 L134.5 884.2 L135 892.3 L135.6 900.1 L136.1 906.5 L136.6 910.5 L137.2 911.2 L137.7 908.1 L138.3 901.7 L138.8 893 L139.3 883 L139.9 872.6 L140.4 862.8 L141 854.4 L141.5 848.5 L142 845.9 L142.6 847.8 L143.1 853.7 L143.7 862.3 L144.2 872.4 L144.7 882.6 L145.3 891.8 L145.8 898.4 L146.3 901.4 L146.9 900.2 L147.4 895.7 L148 889 L148.5 881.1 L149 872.9 L149.6 865.5 L150.1 859.8 L150.7 856.8 L151.2 856.9 L151.7 858.9 L152.2 862.4 L152.8 866.7 L153.3 871.3 L153.8 875.6 L154.4 878.9 L154.9 880.9 L155.5 880.7 L156 878.5 L156.5 874.4 L157 869 L157.6 862.6 L158.1 855.9 L158.7 849.3 L159.2 843.2 L159.7 838.1 L160.2 834.5 L160.7 832.9 L161.3 834.1 L161.8 838.3 L162.3 844.4 L162.8 851.6 L163.3 858.8 L163.8 865.1 L164.3 869.5 L164.8 871 L165.3 869.4 L165.8 865.6 L166.3 860.2 L166.9 853.9 L167.4 847.1 L167.9 840.6 L168.4 834.9 L168.9 830.7 L169.4 828.5 L169.9 828.8 L170.5 831.2 L171 835.1 L171.5 839.8 L172 844.8 L172.5 849.3 L173 852.8 L173.5 854.6 L174.1 854.6 L174.6 853.3 L175.1 851.1 L175.6 848.4 L176.2 845.6 L176.7 843.1 L177.3 841.2 L177.9 840.5 L178.4 841 L178.9 842.4 L179.5 844.4 L180 846.8 L180.6 849.3 L181.1 851.6 L181.7 853.4 L182.2 854.5 L182.8 854.7 L183.3 853.6 L183.8 850.5 L184.4 845.6 L184.9 839.2 L185.4 832 L185.9 824.5 L186.4 817.4 L186.9 811.2 L187.4 806.4 L187.9 803.7 L188.3 803.5 L188.9 808.1 L189.5 817.5 L190 829.9 L190.5 843.8 L191 857.5 L191.6 869.3 L192.1 877.6 L192.7 880.7 L193.2 878.3 L193.7 871.5 L194.3 861.8 L194.8 850.1 L195.3 837.7 L195.9 825.6 L196.4 815.2 L196.9 807.4 L197.5 803.5 L198 804.4 L198.6 809.7 L199.1 817.8 L199.6 827.5 L200.2 837.3 L200.7 845.6 L201.3 851.2 L201.8 852.5 L202.3 849.3 L202.9 842.6 L203.4 833.4 L204 822.8 L204.6 811.7 L205.1 801.2 L205.6 792.2 L206.1 785.8 L206.6 782.9 L207.2 785.8 L207.8 795 L208.2 807.7 L208.7 821.1 L209.3 832.2 L209.9 838.3 L210.3 838.9 L210.8 837.3 L211.3 834.2 L211.8 830.2 L212.3 825.7 L212.8 821.3 L213.3 817.6 L213.9 815.1 L214.4 814.4 L214.9 815.6 L215.5 818.1 L216 821.8 L216.6 826.1 L217.1 830.6 L217.7 835.2 L218.3 839.2 L218.8 842.4 L219.3 844.4 L219.9 844.9 L220.4 843 L221 839.1 L221.5 833.6 L222.1 827.2 L222.6 820.6 L223.1 814.4 L223.6 809.3 L224.1 805.8 L224.7 804.6 L225.2 806.5 L225.8 811.2 L226.3 817.8 L226.9 825.3 L227.4 833.1 L227.9 840 L228.5 845.3 L229 848.1 L229.5 848 L230.1 845.6 L230.6 841.7 L231.2 837 L231.7 832.1 L232.2 827.9 L232.8 825 L233.4 824.2 L233.9 825.6 L234.4 828.6 L235 832.8 L235.5 837.7 L236.1 842.7 L236.6 847.5 L237.1 851.4 L237.6 853.9 L238.1 854.6 L238.7 852.2 L239.3 846.7 L239.8 839.5 L240.3 831.6 L240.9 824.6 L241.4 819.5 L242.1 817.7 L242.5 819 L243.1 822.3 L243.6 827 L244.2 832.7 L244.8 838.9 L245.4 844.9 L245.9 850.4 L246.5 854.7 L247 857.4 L247.5 857.9 L248.1 854.1 L248.7 846 L249.2 835.3 L249.8 824 L250.3 813.7 L250.8 806.2 L251.4 803.5 L251.9 805.6 L252.4 810.8 L252.9 818.3 L253.5 827.2 L254 836.6 L254.6 845.5 L255.1 853.2 L255.7 858.7 L256.2 861.2 L256.7 860 L257.3 855.9 L257.8 849.6 L258.3 842.1 L258.8 834.1 L259.4 826.4 L259.9 820.1 L260.4 815.8 L261 814.4 L261.5 816.3 L262 820.7 L262.5 827.1 L263 834.7 L263.5 842.8 L264 850.8 L264.5 858 L265 863.6 L265.5 867.1 L266 867.7 L266.6 863.4 L267.1 854.3 L267.7 842.1 L268.2 828.5 L268.7 815 L269.3 803.5 L269.8 795.5 L270.3 792.6 L270.9 796.4 L271.4 805.7 L271.9 818.8 L272.5 833.6 L273 848.3 L273.6 861.1 L274.1 870 L274.7 873.1 L275.2 870.5 L275.7 863.9 L276.2 854.3 L276.7 842.7 L277.2 830.1 L277.7 817.5 L278.2 805.9 L278.7 796.3 L279.2 789.8 L279.7 787.2 L280.3 790.4 L280.8 799.2 L281.4 811.8 L281.9 826.4 L282.5 841.3 L283 854.5 L283.5 864.3 L284 868.8 L284.6 867.2 L285.1 861 L285.6 851.6 L286.1 840.4 L286.6 829 L287.1 818.8 L287.6 811.3 L288.2 807.9 L288.6 808.8 L289.1 812.5 L289.6 818.2 L290.1 825.3 L290.6 833 L291.1 840.5 L291.7 847.3 L292.2 852.6 L292.7 855.6 L293.2 855.7 L293.7 852.4 L294.2 845.9 L294.8 837.2 L295.3 826.9 L295.8 815.9 L296.4 804.9 L296.9 794.6 L297.3 786 L297.8 779.6 L298.2 776.3 L298.9 778.9 L299.5 789.4 L300.1 803.7 L300.5 817.5 L300.8 826.4 L300.8 914.5 L71.3 914.5 Z" fill="#7eb26d" fill-opacity="0.8"/><path d="M71.3 863.3 L71.5 869.3 L72.4 868.8 L72.8 865.3 L73.2 860 L73.7 853.4 L74.3 846 L74.9 838.5 L75.5 831.2 L76.1 824.9 L76.7 819.9 L77.3 817 L77.8 816.6 L78.4 820.8 L79 829.7 L79.5 841.6 L80 855 L80.5 868.1 L81 879.3 L81.6 887 L82.2 889.4 L82.7 886.8 L83.2 880.5 L83.8 871.5 L84.3 860.6 L84.9 848.8 L85.5 836.8 L86 825.7 L86.6 816.2 L87.1 809.2 L87.6 805.7 L88.2 806.6 L88.8 812 L89.3 820.6 L89.8 830.9 L90.3 841.3 L90.9 850.4 L91.4 856.8 L92 859 L92.5 856.7 L93 851.1 L93.5 843.2 L94 834 L94.6 824.2 L95.1 814.9 L95.7 807 L96.2 801.5 L96.7 799.2 L97.2 800.4 L97.8 804.2 L98.3 810.1 L98.8 817.3 L99.4 825.2 L99.9 833.1 L100.4 840.5 L100.9 846.6 L101.3 850.8 L101.8 852.5 L102.4 847.2 L102.9 834.2 L103.4 818.9 L103.9 806.6 L104.6 802.9 L105 806.2 L105.5 813 L106 822.3 L106.5 833.1 L107.1 844.4 L107.6 855.2 L108.2 864.7 L108.8 871.7 L109.4 875.3 L109.9 875.3 L110.4 873.1 L110.9 869 L111.5 863.7 L112.1 857.6 L112.6 851.2 L113.2 845 L113.7 839.4 L114.3 835.1 L114.8 832.4 L115.2 831.8 L115.9 835.7 L116.5 843.9 L117 854.8 L117.5 866.7 L118.1 877.8 L118.6 886.3 L119.2 890.5 L119.7 890 L120.2 886.4 L120.8 880.6 L121.3 873.6 L121.9 866.5 L122.4 860.1 L123 855.4 L123.5 853.6 L124 854.8 L124.6 858.3 L125.1 863.4 L125.6 869.3 L126.2 875.4 L126.7 880.9 L127.3 885.1 L127.9 887.3 L128.3 887.2 L128.8 885.8 L129.3 883.3 L129.8 880.3 L130.4 876.9 L130.9 873.5 L131.4 870.6 L131.9 868.4 L132.4 867.3 L132.9 867.7 L133.4 870.9 L134 876.7 L134.5 884.2 L135 892.3 L135.6 900.1 L136.1 906.5 L136.6 910.5 L137.2 911.2 L137.7 908.1 L138.3 901.7 L138.8 893 L139.3 883 L139.9 872.6 L140.4 862.8 L141 854.4 L141.5 848.5 L142 845.9 L142.6 847.8 L143.1 853.7 L143.7 862.3 L144.2 872.4 L144.7 882.6 L145.3 891.8 L145.8 898.4 L146.3 901.4 L146.9 900.2 L147.4 895.7 L148 889 L148.5 881.1 L149 872.9 L149.6 865.5 L150.1 859.8 L150.7 856.8 L151.2 856.9 L151.7 858.9 L152.2 862.4 L152.8 866.7 L153.3 871.3 L153.8 875.6 L154.4 878.9 L154.9 880.9 L155.5 880.7 L156 878.5 L156.5 874.4 L157 869 L157.6 862.6 L158.1 855.9 L158.7 849.3 L159.2 843.2 L159.7 838.1 L160.2 834.5 L160.7 832.9 L161.3 834.1 L161.8 838.3 L162.3 844.4 L162.8 851.6 L163.3 858.8 L163.8 865.1 L164.3 869.5 L164.8 871 L165.3 869.4 L165.8 865.6 L166.3 860.2 L166.9 853.9 L167.4 847.1 L167.9 840.6 L168.4 834.9 L168.9 830.7 L169.4 828.5 L169.9 828.8 L170.5 831.2 L171 835.1 L171.5 839.8 L172 844.8 L172.5 849.3 L173 852.8 L173.5 854.6 L174.1 854.6 L174.6 853.3 L175.1 851.1 L175.6 848.4 L176.2 845.6 L176.7 843.1 L177.3 841.2 L177.9 840.5 L178.4 841 L178.9 842.4 L179.5 844.4 L180 846.8 L180.6 849.3 L181.1 851.6 L181.7 853.4 L182.2 854.5 L182.8 854.7 L183.3 853.6 L183.8 850.5 L184.4 845.6 L184.9 839.2 L185.4 832 L185.9 824.5 L186.4 817.4 L186.9 811.2 L187.4 806.4 L187.9 803.7 L188.3 803.5 L188.9 808.1 L189.5 817.5 L190 829.9 L190.5 843.8 L191 857.5 L191.6 869.3 L192.1 877.6 L192.7 880.7 L193.2 878.3 L193.7 871.5 L194.3 861.8 L194.8 850.1 L195.3 837.7 L195.9 825.6 L196.4 815.2 L196.9 807.4 L197.5 803.5 L198 804.4 L198.6 809.7 L199.1 817.8 L199.6 827.5 L200.2 837.3 L200.7 845.6 L201.3 851.2 L201.8 852.5 L202.3 849.3 L202.9 842.6 L203.4 833.4 L204 822.8 L204.6 811.7 L205.1 801.2 L205.6 792.2 L206.1 785.8 L206.6 782.9 L207.2 785.8 L207.8 795 L208.2 807.7 L208.7 821.1 L209.3 832.2 L209.9 838.3 L210.3 838.9 L210.8 837.3 L211.3 834.2 L211.8 830.2 L212.3 825.7 L212.8 821.3 L213.3 817.6 L213.9 815.1 L214.4 814.4 L214.9 815.6 L215.5 818.1 L216 821.8 L216.6 826.1 L217.1 830.6 L217.7 835.2 L218.3 839.2 L218.8 842.4 L219.3 844.4 L219.9 844.9 L220.4 843 L221 839.1 L221.5 833.6 L222.1 827.2 L222.6 820.6 L223.1 814.4 L223.6 809.3 L224.1 805.8 L224.7 804.6 L225.2 806.5 L225.8 811.2 L226.3 817.8 L226.9 825.3 L227.4 833.1 L227.9 840 L228.5 845.3 L229 848.1 L229.5 848 L230.1 845.6 L230.6 841.7 L231.2 837 L231.7 832.1 L232.2 827.9 L232.8 825 L233.4 824.2 L233.9 825.6 L234.4 828.6 L235 832.8 L235.5 837.7 L236.1 842.7 L236.6 847.5 L237.1 851.4 L237.6 853.9 L238.1 854.6 L238.7 852.2 L239.3 846.7 L239.8 839.5 L240.3 831.6 L240.9 824.6 L241.4 819.5 L242.1 817.7 L242.5 819 L243.1 822.3 L243.6 827 L244.2 832.7 L244.8 838.9 L245.4 844.9 L245.9 850.4 L246.5 854.7 L247 857.4 L247.5 857.9 L248.1 854.1 L248.7 846 L249.2 835.3 L249.8 824 L250.3 813.7 L250.8 806.2 L251.4 803.5 L251.9 805.6 L252.4 810.8 L252.9 818.3 L253.5 827.2 L254 836.6 L254.6 845.5 L255.1 853.2 L255.7 858.7 L256.2 861.2 L256.7 860 L257.3 855.9 L257.8 849.6 L258.3 842.1 L258.8 834.1 L259.4 826.4 L259.9 820.1 L260.4 815.8 L261 814.4 L261.5 816.3 L262 820.7 L262.5 827.1 L263 834.7 L263.5 842.8 L264 850.8 L264.5 858 L265 863.6 L265.5 867.1 L266 867.7 L266.6 863.4 L267.1 854.3 L267.7 842.1 L268.2 828.5 L268.7 815 L269.3 803.5 L269.8 795.5 L270.3 792.6 L270.9 796.4 L271.4 805.7 L271.9 818.8 L272.5 833.6 L273 848.3 L273.6 861.1 L274.1 870 L274.7 873.1 L275.2 870.5 L275.7 863.9 L276.2 854.3 L276.7 842.7 L277.2 830.1 L277.7 817.5 L278.2 805.9 L278.7 796.3 L279.2 789.8 L279.7 787.2 L280.3 790.4 L280.8 799.2 L281.4 811.8 L281.9 826.4 L282.5 841.3 L283 854.5 L283.5 864.3 L284 868.8 L284.6 867.2 L285.1 861 L285.6 851.6 L286.1 840.4 L286.6 829 L287.1 818.8 L287.6 811.3 L288.2 807.9 L288.6 808.8 L289.1 812.5 L289.6 818.2 L290.1 825.3 L290.6 833 L291.1 840.5 L291.7 847.3 L292.2 852.6 L292.7 855.6 L293.2 855.7 L293.7 852.4 L294.2 845.9 L294.8 837.2 L295.3 826.9 L295.8 815.9 L296.4 804.9 L296.9 794.6 L297.3 786 L297.8 779.6 L298.2 776.3 L298.9 778.9 L299.5 789.4 L300.1 803.7 L300.5 817.5 L300.8 826.4" fill="none" stroke="#7eb26d" stroke-width="3.0" stroke-linejoin="round"/><rect x="42.4" y="948.9" width="12" height="4" rx="1" fill="#7eb26d"/><text x="57.8" y="953.5" class="lg" textLength="119" lengthAdjust="spacingAndGlyphs">Battery-temperature.last</text><text x="182.9" y="953.5" class="lg" textLength="67.4" lengthAdjust="spacingAndGlyphs">Current: 17 °C</text><line x1="1640" y1="773" x2="1868.7" y2="773" class="g"/><line x1="1640" y1="808.3" x2="1868.7" y2="808.3" class="g"/><line x1="1640" y1="843.6" x2="1868.7" y2="843.6" class="g"/><line x1="1640" y1="879" x2="1868.7" y2="879" class="g"/><line x1="1640" y1="914.3" x2="1868.7" y2="914.3" class="g"/><line x1="1648.5" y1="773" x2="1648.5" y2="914.3" class="g"/><line x1="1722.4" y1="773" x2="1722.4" y2="914.3" class="g"/><line x1="1795.2" y1="773" x2="1795.2" y2="914.3" class="g"/><line x1="1868.7" y1="773" x2="1868.7" y2="914.3" class="g"/><text x="1635" y="775.6" class="yl">40.0 °C</text><text x="1635" y="810.9" class="yl">30.0 °C</text><text x="1635" y="846.2" class="yl">20.0 °C</text><text x="1635" y="881.6" class="yl">10.0 °C</text><text x="1635" y="916.9" class="yl">0 °C</text><text x="1648.5" y="930.8" class="xl">5/8</text><text x="1722.4" y="930.8" class="xl">5/16</text><text x="1795.2" y="930.8" class="xl">5/24</text><text x="1868.7" y="930.8" class="xl">6/1</text><path d="M1640 872 L1640.3 869.7 L1640.7 866.5 L1641.2 862.6 L1641.7 858.1 L1642.3 853.4 L1642.9 848.6 L1643.5 844 L1644.1 839.8 L1644.7 836.2 L1645.3 833.6 L1645.8 832 L1646.3 831.7 L1647 835.3 L1647.6 843.2 L1648.1 853.6 L1648.6 864.7 L1649.1 874.6 L1649.6 881.6 L1650.2 883.9 L1650.7 881.9 L1651.2 877.1 L1651.8 870.3 L1652.3 862.2 L1652.9 853.3 L1653.5 844.5 L1654.1 836.2 L1654.6 829.3 L1655.1 824.3 L1655.7 822 L1656.2 823.1 L1656.8 827.9 L1657.4 835.2 L1657.9 843.8 L1658.4 852.4 L1658.9 860.1 L1659.5 865.5 L1660 867.6 L1660.5 865.7 L1661.1 860.6 L1661.6 853.4 L1662.2 845.1 L1662.7 836.7 L1663.3 829.4 L1663.8 824.1 L1664.3 822 L1664.9 823.5 L1665.5 828.1 L1666 834.8 L1666.6 842.4 L1667.1 850.1 L1667.7 856.8 L1668.2 861.5 L1668.7 863.3 L1669.2 860.7 L1669.7 854.4 L1670.2 845.8 L1670.7 836.6 L1671.2 828.3 L1671.8 822.5 L1672.4 820.9 L1672.8 822.6 L1673.3 826.2 L1673.8 831.4 L1674.3 837.7 L1674.9 844.7 L1675.4 851.8 L1676 858.8 L1676.5 865.2 L1677 870.5 L1677.6 874.4 L1678 876.3 L1678.6 875.8 L1679.2 872.7 L1679.7 867.8 L1680.3 861.7 L1680.8 855.2 L1681.3 849 L1681.8 843.8 L1682.3 840.3 L1682.8 839.3 L1683.4 842.2 L1684 848.5 L1684.5 857 L1685 866.2 L1685.6 874.9 L1686.1 881.6 L1686.7 885 L1687.2 885 L1687.7 883.3 L1688.2 880.4 L1688.8 876.7 L1689.3 872.5 L1689.9 868.1 L1690.4 864.1 L1690.9 860.6 L1691.5 858.2 L1692 857.2 L1692.5 857.9 L1693.1 860.3 L1693.6 863.9 L1694.1 868.1 L1694.7 872.4 L1695.2 876.3 L1695.7 879.2 L1696.3 880.7 L1696.8 880.5 L1697.3 879.4 L1697.8 877.5 L1698.3 875.2 L1698.8 872.6 L1699.4 870.1 L1699.9 867.9 L1700.4 866.2 L1700.8 865.3 L1701.3 865.4 L1701.9 868.1 L1702.5 873.1 L1703 879.4 L1703.6 886 L1704.1 891.6 L1704.6 895.3 L1705.2 895.9 L1705.7 893.4 L1706.2 888.6 L1706.7 882.1 L1707.2 874.6 L1707.7 866.8 L1708.3 859.4 L1708.8 853.2 L1709.3 848.8 L1709.8 847 L1710.3 848.4 L1710.9 852.9 L1711.4 859.5 L1712 867.2 L1712.5 875 L1713.1 882 L1713.6 887.1 L1714.1 889.3 L1714.7 888.4 L1715.2 884.9 L1715.7 879.8 L1716.2 873.7 L1716.7 867.5 L1717.2 861.9 L1717.7 857.7 L1718.3 855.7 L1718.8 856 L1719.3 858.1 L1719.8 861.2 L1720.3 865.1 L1720.8 869.3 L1721.4 873.1 L1721.9 876.3 L1722.5 878.2 L1723 878.5 L1723.6 877 L1724.1 874 L1724.7 869.9 L1725.2 865.1 L1725.8 859.9 L1726.4 854.8 L1726.9 850.2 L1727.5 846.3 L1728 843.7 L1728.5 842.6 L1729.1 844.3 L1729.7 848.9 L1730.2 855.3 L1730.7 862.4 L1731.3 868.8 L1731.8 873.5 L1732.4 875.2 L1732.9 874 L1733.4 870.9 L1734 866.4 L1734.5 861.1 L1735.1 855.5 L1735.6 850.1 L1736.2 845.4 L1736.7 842 L1737.2 840.4 L1737.8 841.2 L1738.3 844.3 L1738.9 849 L1739.4 854.2 L1740 859.3 L1740.5 863.3 L1741.1 865.4 L1741.6 865.4 L1742.1 864.2 L1742.7 862.2 L1743.2 859.7 L1743.8 857 L1744.3 854.7 L1744.9 853 L1745.4 852.4 L1745.9 853 L1746.4 854.6 L1747 856.8 L1747.5 859.3 L1748 861.9 L1748.5 864.1 L1749.1 865.6 L1749.6 866.2 L1750.2 865.4 L1750.7 863.4 L1751.2 860.1 L1751.8 855.8 L1752.4 850.8 L1752.9 845.4 L1753.5 840.1 L1754.1 835.1 L1754.6 830.8 L1755.1 827.5 L1755.6 825.5 L1756.1 825.2 L1756.7 829 L1757.3 837.1 L1757.8 847.8 L1758.3 859.1 L1758.8 869.4 L1759.4 876.8 L1760 879.6 L1760.5 877.9 L1761 873.6 L1761.6 867.4 L1762.1 859.8 L1762.7 851.6 L1763.3 843.3 L1763.9 835.5 L1764.4 828.9 L1764.9 824.2 L1765.4 822 L1766.1 823.5 L1766.6 829.2 L1767.1 837.6 L1767.7 846.8 L1768.2 855.3 L1768.7 861.3 L1769.3 863.3 L1769.8 861.5 L1770.3 857.4 L1770.9 851.7 L1771.4 844.9 L1772 837.6 L1772.5 830.2 L1773.1 823.5 L1773.6 817.8 L1774.1 813.9 L1774.6 812.2 L1775.2 814.7 L1775.8 822 L1776.4 832 L1776.9 842.4 L1777.5 851 L1778 855.7 L1778.5 855.7 L1779 853.1 L1779.5 848.9 L1780 844.1 L1780.6 839.5 L1781.1 836.2 L1781.7 835 L1782.2 835.8 L1782.7 837.8 L1783.2 840.6 L1783.8 844 L1784.3 847.6 L1784.9 851.1 L1785.5 854.3 L1786.1 856.9 L1786.6 858.5 L1787.2 858.9 L1787.7 857.8 L1788.3 855.3 L1788.9 851.8 L1789.4 847.6 L1790 843.1 L1790.6 838.6 L1791.1 834.6 L1791.6 831.3 L1792.1 829.2 L1792.6 828.5 L1793.2 830.4 L1793.8 835 L1794.2 841.3 L1794.7 848.2 L1795.2 854.6 L1795.7 859.7 L1796.3 862.2 L1796.8 862.1 L1797.2 860.8 L1797.7 858.6 L1798.2 855.8 L1798.8 852.6 L1799.3 849.3 L1799.8 846.3 L1800.3 843.8 L1800.8 842.1 L1801.3 841.5 L1801.9 842.6 L1802.4 845.2 L1803 848.9 L1803.5 853 L1804.1 857.1 L1804.6 860.5 L1805.1 862.8 L1805.7 863.3 L1806.2 861.5 L1806.7 857.8 L1807.3 852.8 L1807.8 847.2 L1808.3 841.8 L1808.9 837.1 L1809.4 833.9 L1810 832.8 L1810.5 834 L1811 836.9 L1811.5 840.9 L1812 845.8 L1812.5 851 L1813 856.2 L1813.5 860.8 L1814 864.6 L1814.5 867 L1815 867.6 L1815.6 865.4 L1816.1 860.3 L1816.7 853.3 L1817.2 845.5 L1817.7 837.7 L1818.2 831 L1818.8 826.3 L1819.3 824.6 L1819.9 826.1 L1820.4 830.1 L1820.9 835.9 L1821.4 842.7 L1822 850 L1822.5 856.9 L1823.1 862.8 L1823.6 866.9 L1824.1 868.7 L1824.7 867.6 L1825.2 864.2 L1825.8 859 L1826.3 852.9 L1826.8 846.3 L1827.4 840.2 L1827.9 835 L1828.4 831.4 L1828.9 830.2 L1829.5 832.8 L1830.1 839.1 L1830.6 847.5 L1831.1 856.5 L1831.6 864.6 L1832.2 870.3 L1832.8 872 L1833.3 870 L1833.8 865.6 L1834.4 859.5 L1834.9 852.3 L1835.5 844.5 L1836.1 836.7 L1836.7 829.7 L1837.2 823.9 L1837.8 820 L1838.3 818.7 L1838.9 821.2 L1839.4 827.6 L1840 836.6 L1840.5 846.8 L1841 857 L1841.5 865.8 L1842.1 871.9 L1842.6 874.1 L1843.1 872 L1843.7 866.5 L1844.2 858.6 L1844.8 849.3 L1845.3 839.6 L1845.8 830.4 L1846.4 822.5 L1846.9 817.1 L1847.4 815 L1848 818 L1848.6 825.9 L1849.1 836.8 L1849.6 848.9 L1850.2 860 L1850.7 868.4 L1851.3 872 L1851.8 870.3 L1852.3 865.1 L1852.9 857.4 L1853.4 848.5 L1854 839.4 L1854.5 831.4 L1855.1 825.6 L1855.7 823 L1856.1 824 L1856.6 827.1 L1857.1 831.9 L1857.6 837.7 L1858.1 844.1 L1858.6 850.5 L1859.1 856.2 L1859.6 860.8 L1860.1 863.7 L1860.7 864.3 L1861.2 862.3 L1861.8 857.9 L1862.3 851.8 L1862.9 844.5 L1863.5 836.7 L1864.1 828.8 L1864.7 821.6 L1865.2 815.4 L1865.7 811 L1866.1 808.9 L1866.8 811.5 L1867.5 820 L1868 831.3 L1868.4 842.1 L1868.7 849.1 L1868.7 914.3 L1640 914.3 Z" fill="#7eb26d" fill-opacity="0.8"/><path d="M1640 872 L1640.3 869.7 L1640.7 866.5 L1641.2 862.6 L1641.7 858.1 L1642.3 853.4 L1642.9 848.6 L1643.5 844 L1644.1 839.8 L1644.7 836.2 L1645.3 833.6 L1645.8 832 L1646.3 831.7 L1647 835.3 L1647.6 843.2 L1648.1 853.6 L1648.6 864.7 L1649.1 874.6 L1649.6 881.6 L1650.2 883.9 L1650.7 881.9 L1651.2 877.1 L1651.8 870.3 L1652.3 862.2 L1652.9 853.3 L1653.5 844.5 L1654.1 836.2 L1654.6 829.3 L1655.1 824.3 L1655.7 822 L1656.2 823.1 L1656.8 827.9 L1657.4 835.2 L1657.9 843.8 L1658.4 852.4 L1658.9 860.1 L1659.5 865.5 L1660 867.6 L1660.5 865.7 L1661.1 860.6 L1661.6 853.4 L1662.2 845.1 L1662.7 836.7 L1663.3 829.4 L1663.8 824.1 L1664.3 822 L1664.9 823.5 L1665.5 828.1 L1666 834.8 L1666.6 842.4 L1667.1 850.1 L1667.7 856.8 L1668.2 861.5 L1668.7 863.3 L1669.2 860.7 L1669.7 854.4 L1670.2 845.8 L1670.7 836.6 L1671.2 828.3 L1671.8 822.5 L1672.4 820.9 L1672.8 822.6 L1673.3 826.2 L1673.8 831.4 L1674.3 837.7 L1674.9 844.7 L1675.4 851.8 L1676 858.8 L1676.5 865.2 L1677 870.5 L1677.6 874.4 L1678 876.3 L1678.6 875.8 L1679.2 872.7 L1679.7 867.8 L1680.3 861.7 L1680.8 855.2 L1681.3 849 L1681.8 843.8 L1682.3 840.3 L1682.8 839.3 L1683.4 842.2 L1684 848.5 L1684.5 857 L1685 866.2 L1685.6 874.9 L1686.1 881.6 L1686.7 885 L1687.2 885 L1687.7 883.3 L1688.2 880.4 L1688.8 876.7 L1689.3 872.5 L1689.9 868.1 L1690.4 864.1 L1690.9 860.6 L1691.5 858.2 L1692 857.2 L1692.5 857.9 L1693.1 860.3 L1693.6 863.9 L1694.1 868.1 L1694.7 872.4 L1695.2 876.3 L1695.7 879.2 L1696.3 880.7 L1696.8 880.5 L1697.3 879.4 L1697.8 877.5 L1698.3 875.2 L1698.8 872.6 L1699.4 870.1 L1699.9 867.9 L1700.4 866.2 L1700.8 865.3 L1701.3 865.4 L1701.9 868.1 L1702.5 873.1 L1703 879.4 L1703.6 886 L1704.1 891.6 L1704.6 895.3 L1705.2 895.9 L1705.7 893.4 L1706.2 888.6 L1706.7 882.1 L1707.2 874.6 L1707.7 866.8 L1708.3 859.4 L1708.8 853.2 L1709.3 848.8 L1709.8 847 L1710.3 848.4 L1710.9 852.9 L1711.4 859.5 L1712 867.2 L1712.5 875 L1713.1 882 L1713.6 887.1 L1714.1 889.3 L1714.7 888.4 L1715.2 884.9 L1715.7 879.8 L1716.2 873.7 L1716.7 867.5 L1717.2 861.9 L1717.7 857.7 L1718.3 855.7 L1718.8 856 L1719.3 858.1 L1719.8 861.2 L1720.3 865.1 L1720.8 869.3 L1721.4 873.1 L1721.9 876.3 L1722.5 878.2 L1723 878.5 L1723.6 877 L1724.1 874 L1724.7 869.9 L1725.2 865.1 L1725.8 859.9 L1726.4 854.8 L1726.9 850.2 L1727.5 846.3 L1728 843.7 L1728.5 842.6 L1729.1 844.3 L1729.7 848.9 L1730.2 855.3 L1730.7 862.4 L1731.3 868.8 L1731.8 873.5 L1732.4 875.2 L1732.9 874 L1733.4 870.9 L1734 866.4 L1734.5 861.1 L1735.1 855.5 L1735.6 850.1 L1736.2 845.4 L1736.7 842 L1737.2 840.4 L1737.8 841.2 L1738.3 844.3 L1738.9 849 L1739.4 854.2 L1740 859.3 L1740.5 863.3 L1741.1 865.4 L1741.6 865.4 L1742.1 864.2 L1742.7 862.2 L1743.2 859.7 L1743.8 857 L1744.3 854.7 L1744.9 853 L1745.4 852.4 L1745.9 853 L1746.4 854.6 L1747 856.8 L1747.5 859.3 L1748 861.9 L1748.5 864.1 L1749.1 865.6 L1749.6 866.2 L1750.2 865.4 L1750.7 863.4 L1751.2 860.1 L1751.8 855.8 L1752.4 850.8 L1752.9 845.4 L1753.5 840.1 L1754.1 835.1 L1754.6 830.8 L1755.1 827.5 L1755.6 825.5 L1756.1 825.2 L1756.7 829 L1757.3 837.1 L1757.8 847.8 L1758.3 859.1 L1758.8 869.4 L1759.4 876.8 L1760 879.6 L1760.5 877.9 L1761 873.6 L1761.6 867.4 L1762.1 859.8 L1762.7 851.6 L1763.3 843.3 L1763.9 835.5 L1764.4 828.9 L1764.9 824.2 L1765.4 822 L1766.1 823.5 L1766.6 829.2 L1767.1 837.6 L1767.7 846.8 L1768.2 855.3 L1768.7 861.3 L1769.3 863.3 L1769.8 861.5 L1770.3 857.4 L1770.9 851.7 L1771.4 844.9 L1772 837.6 L1772.5 830.2 L1773.1 823.5 L1773.6 817.8 L1774.1 813.9 L1774.6 812.2 L1775.2 814.7 L1775.8 822 L1776.4 832 L1776.9 842.4 L1777.5 851 L1778 855.7 L1778.5 855.7 L1779 853.1 L1779.5 848.9 L1780 844.1 L1780.6 839.5 L1781.1 836.2 L1781.7 835 L1782.2 835.8 L1782.7 837.8 L1783.2 840.6 L1783.8 844 L1784.3 847.6 L1784.9 851.1 L1785.5 854.3 L1786.1 856.9 L1786.6 858.5 L1787.2 858.9 L1787.7 857.8 L1788.3 855.3 L1788.9 851.8 L1789.4 847.6 L1790 843.1 L1790.6 838.6 L1791.1 834.6 L1791.6 831.3 L1792.1 829.2 L1792.6 828.5 L1793.2 830.4 L1793.8 835 L1794.2 841.3 L1794.7 848.2 L1795.2 854.6 L1795.7 859.7 L1796.3 862.2 L1796.8 862.1 L1797.2 860.8 L1797.7 858.6 L1798.2 855.8 L1798.8 852.6 L1799.3 849.3 L1799.8 846.3 L1800.3 843.8 L1800.8 842.1 L1801.3 841.5 L1801.9 842.6 L1802.4 845.2 L1803 848.9 L1803.5 853 L1804.1 857.1 L1804.6 860.5 L1805.1 862.8 L1805.7 863.3 L1806.2 861.5 L1806.7 857.8 L1807.3 852.8 L1807.8 847.2 L1808.3 841.8 L1808.9 837.1 L1809.4 833.9 L1810 832.8 L1810.5 834 L1811 836.9 L1811.5 840.9 L1812 845.8 L1812.5 851 L1813 856.2 L1813.5 860.8 L1814 864.6 L1814.5 867 L1815 867.6 L1815.6 865.4 L1816.1 860.3 L1816.7 853.3 L1817.2 845.5 L1817.7 837.7 L1818.2 831 L1818.8 826.3 L1819.3 824.6 L1819.9 826.1 L1820.4 830.1 L1820.9 835.9 L1821.4 842.7 L1822 850 L1822.5 856.9 L1823.1 862.8 L1823.6 866.9 L1824.1 868.7 L1824.7 867.6 L1825.2 864.2 L1825.8 859 L1826.3 852.9 L1826.8 846.3 L1827.4 840.2 L1827.9 835 L1828.4 831.4 L1828.9 830.2 L1829.5 832.8 L1830.1 839.1 L1830.6 847.5 L1831.1 856.5 L1831.6 864.6 L1832.2 870.3 L1832.8 872 L1833.3 870 L1833.8 865.6 L1834.4 859.5 L1834.9 852.3 L1835.5 844.5 L1836.1 836.7 L1836.7 829.7 L1837.2 823.9 L1837.8 820 L1838.3 818.7 L1838.9 821.2 L1839.4 827.6 L1840 836.6 L1840.5 846.8 L1841 857 L1841.5 865.8 L1842.1 871.9 L1842.6 874.1 L1843.1 872 L1843.7 866.5 L1844.2 858.6 L1844.8 849.3 L1845.3 839.6 L1845.8 830.4 L1846.4 822.5 L1846.9 817.1 L1847.4 815 L1848 818 L1848.6 825.9 L1849.1 836.8 L1849.6 848.9 L1850.2 860 L1850.7 868.4 L1851.3 872 L1851.8 870.3 L1852.3 865.1 L1852.9 857.4 L1853.4 848.5 L1854 839.4 L1854.5 831.4 L1855.1 825.6 L1855.7 823 L1856.1 824 L1856.6 827.1 L1857.1 831.9 L1857.6 837.7 L1858.1 844.1 L1858.6 850.5 L1859.1 856.2 L1859.6 860.8 L1860.1 863.7 L1860.7 864.3 L1861.2 862.3 L1861.8 857.9 L1862.3 851.8 L1862.9 844.5 L1863.5 836.7 L1864.1 828.8 L1864.7 821.6 L1865.2 815.4 L1865.7 811 L1866.1 808.9 L1866.8 811.5 L1867.5 820 L1868 831.3 L1868.4 842.1 L1868.7 849.1" fill="none" stroke="#7eb26d" stroke-width="3.0" stroke-linejoin="round"/><rect x="1610" y="948.9" width="12" height="4" rx="1" fill="#7eb26d"/><text x="1625.9" y="953.5" class="lg" textLength="122.1" lengthAdjust="spacingAndGlyphs">Charger-temperature.last</text><text x="1754.1" y="953.5" class="lg" textLength="67.9" lengthAdjust="spacingAndGlyphs">Current: 18 °C</text><path d="M26.2 634 L35.3 715 L41.2 553 L47 715 L52.8 618 L58.6 715 L64.5 600 L70.3 715 L76.2 609 L81.3 715 L86.5 611 L92.2 715 L98 640 L104.4 715 L110.8 588 L116.2 715 L121.5 635 L128.1 715 L134.7 628 L139 715 L143.3 632 L150.7 715 L158 629 L163.8 715 L169.5 640 L175.2 715 L180.8 605 L186.4 715 L192 640 L197.7 715 L203.3 613 L208.9 715 L214.5 621 L220.6 715 L226.7 637 L233.3 715 L240 630 L246.2 715 L252.5 618 L257.5 715 L262.5 657 L268.8 715 L275 658 L280.6 715 L286.2 632 L292 715 L297.8 658 L302.9 715 L308 624 L310 657 L313 664 L315.8 715 L315.8 715.2 L26.2 715.2 Z" fill="rgba(31,118,189,0.18)"/><path d="M26.2 634 L35.3 715 L41.2 553 L47 715 L52.8 618 L58.6 715 L64.5 600 L70.3 715 L76.2 609 L81.3 715 L86.5 611 L92.2 715 L98 640 L104.4 715 L110.8 588 L116.2 715 L121.5 635 L128.1 715 L134.7 628 L139 715 L143.3 632 L150.7 715 L158 629 L163.8 715 L169.5 640 L175.2 715 L180.8 605 L186.4 715 L192 640 L197.7 715 L203.3 613 L208.9 715 L214.5 621 L220.6 715 L226.7 637 L233.3 715 L240 630 L246.2 715 L252.5 618 L257.5 715 L262.5 657 L268.8 715 L275 658 L280.6 715 L286.2 632 L292 715 L297.8 658 L302.9 715 L308 624 L310 657 L313 664 L315.8 715" fill="none" stroke="rgb(31,120,193)" stroke-width="1" stroke-linejoin="miter"/><path d="M88.02 692.09 A88.3 88.3 0 1 1 255.98 692.09 L228.92 683.29 A59.85 59.85 0 1 0 115.08 683.29 Z" fill="#262626"/><path d="M81.65 694.16 A95.0 95.0 0 1 1 262.35 694.16 L257.31 692.52 A89.7 89.7 0 1 0 86.69 692.52 Z" fill="#548b45"/><text x="73.76" y="696.72" class="gl" transform="rotate(252.00 73.76 696.72)">0</text><text x="270.24" y="696.72" class="gl" transform="rotate(468.00 270.24 696.72)">200</text><text x="172.00" y="685.80" class="gv">0 W</text><path d="M1594.1 584.4 L1595.2 596 L1598.2 639 L1599.9 643 L1603.3 576.3 L1604.7 587.3 L1609.3 636 L1611.6 643 L1615 577.8 L1616.4 588.8 L1621 636 L1623.3 643 L1626.7 578.5 L1628.1 589.5 L1632.7 636 L1635 643 L1638.4 574.8 L1639.8 585.8 L1644.4 636 L1646.7 643 L1650.1 574.1 L1651.5 585.1 L1656.1 636 L1658.4 643 L1661.8 574.8 L1663.2 585.8 L1667.8 636 L1670.1 643 L1673.5 577.8 L1674.9 588.8 L1679.5 636 L1681.8 643 L1685.2 580 L1686.6 591 L1691.2 636 L1693.5 643 L1696.9 578.5 L1698.3 589.5 L1702.9 636 L1705.2 643 L1708.6 579 L1710 590 L1714.6 636 L1716.9 643 L1720.3 580 L1721.7 591 L1726.3 636 L1728.6 643 L1732 581 L1733.4 592 L1738 636 L1740.3 643 L1743.7 582 L1745.1 593 L1749.7 636 L1752 643 L1755.4 583 L1756.8 594 L1761.4 636 L1763.7 643 L1767.1 584 L1768.5 595 L1773.1 636 L1775.4 643 L1778.8 582 L1780.2 593 L1784.8 636 L1787.1 643 L1790.5 581 L1791.9 592 L1796.5 636 L1798.8 643 L1802.2 579.8 L1803.6 590.8 L1808.2 636 L1810.5 643 L1813.9 584 L1815.3 595 L1819.9 636 L1822.2 643 L1825.6 584 L1827 595 L1831.6 636 L1833.9 643 L1837.3 585 L1838.7 596 L1843.3 636 L1845.6 643 L1849 587.4 L1850.4 598.4 L1855 636 L1857.3 643 L1860.7 586.3 L1862.1 597.3 L1866.7 636 L1869 643 L1872.4 586.3 L1873.8 597.3 L1878.4 636 L1880.7 643 L1883.3 593.9 L1883.3 715.5 L1594.1 715.5 Z" fill="rgba(31,118,189,0.18)"/><path d="M1594.1 584.4 L1595.2 596 L1598.2 639 L1599.9 643 L1603.3 576.3 L1604.7 587.3 L1609.3 636 L1611.6 643 L1615 577.8 L1616.4 588.8 L1621 636 L1623.3 643 L1626.7 578.5 L1628.1 589.5 L1632.7 636 L1635 643 L1638.4 574.8 L1639.8 585.8 L1644.4 636 L1646.7 643 L1650.1 574.1 L1651.5 585.1 L1656.1 636 L1658.4 643 L1661.8 574.8 L1663.2 585.8 L1667.8 636 L1670.1 643 L1673.5 577.8 L1674.9 588.8 L1679.5 636 L1681.8 643 L1685.2 580 L1686.6 591 L1691.2 636 L1693.5 643 L1696.9 578.5 L1698.3 589.5 L1702.9 636 L1705.2 643 L1708.6 579 L1710 590 L1714.6 636 L1716.9 643 L1720.3 580 L1721.7 591 L1726.3 636 L1728.6 643 L1732 581 L1733.4 592 L1738 636 L1740.3 643 L1743.7 582 L1745.1 593 L1749.7 636 L1752 643 L1755.4 583 L1756.8 594 L1761.4 636 L1763.7 643 L1767.1 584 L1768.5 595 L1773.1 636 L1775.4 643 L1778.8 582 L1780.2 593 L1784.8 636 L1787.1 643 L1790.5 581 L1791.9 592 L1796.5 636 L1798.8 643 L1802.2 579.8 L1803.6 590.8 L1808.2 636 L1810.5 643 L1813.9 584 L1815.3 595 L1819.9 636 L1822.2 643 L1825.6 584 L1827 595 L1831.6 636 L1833.9 643 L1837.3 585 L1838.7 596 L1843.3 636 L1845.6 643 L1849 587.4 L1850.4 598.4 L1855 636 L1857.3 643 L1860.7 586.3 L1862.1 597.3 L1866.7 636 L1869 643 L1872.4 586.3 L1873.8 597.3 L1878.4 636 L1880.7 643 L1883.3 593.9" fill="none" stroke="rgb(31,120,193)" stroke-width="1" stroke-linejoin="miter"/><path d="M1655.52 692.09 A88.3 88.3 0 1 1 1823.48 692.09 L1796.42 683.29 A59.85 59.85 0 1 0 1682.58 683.29 Z" fill="#262626"/><path d="M1655.52 692.09 A88.3 88.3 0 0 1 1652.56 649.35 L1680.57 654.32 A59.85 59.85 0 0 0 1682.58 683.29 Z" fill="#548b45"/><path d="M1649.15 694.16 A95.0 95.0 0 1 1 1829.85 694.16 L1824.81 692.52 A89.7 89.7 0 1 0 1654.19 692.52 Z" fill="#548b45"/><text x="1641.26" y="696.72" class="gl" transform="rotate(252.00 1641.26 696.72)">0</text><text x="1837.74" y="696.72" class="gl" transform="rotate(468.00 1837.74 696.72)">5</text><text x="1739.50" y="685.80" class="gv">0.65 A</text><path d="M402.02 932.09 A88.3 88.3 0 1 1 569.98 932.09 L542.92 923.29 A59.85 59.85 0 1 0 429.08 923.29 Z" fill="#262626"/><path d="M402.02 932.09 A88.3 88.3 0 0 1 401.33 929.86 L428.61 921.79 A59.85 59.85 0 0 0 429.08 923.29 Z" fill="#548b45"/><path d="M395.65 934.16 A95.0 95.0 0 1 1 576.35 934.16 L571.31 932.52 A89.7 89.7 0 1 0 400.69 932.52 Z" fill="#548b45"/><text x="387.76" y="936.72" class="gl" transform="rotate(252.00 387.76 936.72)">0</text><text x="584.24" y="936.72" class="gl" transform="rotate(468.00 584.24 936.72)">10</text><text x="486.00" y="925.80" class="gv">0.07 A</text><path d="M1342.52 932.09 A88.3 88.3 0 1 1 1510.48 932.09 L1483.42 923.29 A59.85 59.85 0 1 0 1369.58 923.29 Z" fill="#262626"/><path d="M1342.52 932.09 A88.3 88.3 0 0 1 1378.07 830.97 L1393.67 854.76 A59.85 59.85 0 0 0 1369.58 923.29 Z" fill="#548b45"/><path d="M1336.15 934.16 A95.0 95.0 0 0 1 1335.44 877.72 L1340.52 879.23 A89.7 89.7 0 0 0 1341.19 932.52 Z" fill="#c41b0b"/><path d="M1335.44 877.72 A95.0 95.0 0 0 1 1521.31 898.83 L1516.02 899.17 A89.7 89.7 0 0 0 1340.52 879.23 Z" fill="#548b45"/><path d="M1521.31 898.83 A95.0 95.0 0 0 1 1516.85 934.16 L1511.81 932.52 A89.7 89.7 0 0 0 1516.02 899.17 Z" fill="#c41b0b"/><text x="1328.26" y="936.72" class="gl" transform="rotate(252.00 1328.26 936.72)">11</text><text x="1327.48" y="875.36" class="gl" transform="rotate(286.56 1327.48 875.36)">11.8</text><text x="1529.60" y="898.31" class="gl" transform="rotate(446.40 1529.60 898.31)">15.5</text><text x="1524.74" y="936.72" class="gl" transform="rotate(468.00 1524.74 936.72)">16</text><text x="1426.50" y="925.80" class="gv">12.73 V</text><text x="721.3" y="878.5" class="bv" style="font-size:44.7px" textLength="155.4" lengthAdjust="spacingAndGlyphs">0.27 kW</text><path d="M652.8 955.2 L778.9 955.2 L782.1 793.3 L785.4 955.2 L790.2 955.2 L793.7 815.4 L796.7 955.2 L808.2 955.2 L811 822 L814.7 955.2 L942.6 955.2 L942.6 955.2 L652.8 955.2 Z" fill="rgba(31,118,189,0.18)"/><path d="M652.8 955.2 L778.9 955.2 L782.1 793.3 L785.4 955.2 L790.2 955.2 L793.7 815.4 L796.7 955.2 L808.2 955.2 L811 822 L814.7 955.2 L942.6 955.2" fill="none" stroke="rgb(31,120,193)" stroke-width="1" stroke-linejoin="miter"/><text x="1035.3" y="878.5" class="bv" style="font-size:44.7px" textLength="155.4" lengthAdjust="spacingAndGlyphs">0.16 kW</text><path d="M966.8 955.2 L1092.9 955.2 L1096.1 870.9 L1099.4 955.2 L1104.2 955.2 L1107.7 839.3 L1110.7 955.2 L1122.2 955.2 L1125 793.3 L1128.7 955.2 L1256.6 955.2 L1256.6 955.2 L966.8 955.2 Z" fill="rgba(31,118,189,0.18)"/><path d="M966.8 955.2 L1092.9 955.2 L1096.1 870.9 L1099.4 955.2 L1104.2 955.2 L1107.7 839.3 L1110.7 955.2 L1122.2 955.2 L1125 793.3 L1128.7 955.2 L1256.6 955.2" fill="none" stroke="rgb(31,120,193)" stroke-width="1" stroke-linejoin="miter"/><text x="70.0" y="1059.4" class="bv" style="font-size:45.7px" textLength="204.3" lengthAdjust="spacingAndGlyphs">273.56 kW</text><text x="395.7" y="1059.4" class="bv" style="font-size:45.7px" textLength="181.0" lengthAdjust="spacingAndGlyphs">24.12 kW</text><text x="721.7" y="1059.4" class="bv" style="font-size:45.7px" textLength="155.6" lengthAdjust="spacingAndGlyphs">5.75 kW</text><text x="1011.7" y="1059.4" class="bv" style="font-size:45.7px" textLength="204.0" lengthAdjust="spacingAndGlyphs">192.96 kW</text><text x="1337.7" y="1059.4" class="bv" style="font-size:45.7px" textLength="180.4" lengthAdjust="spacingAndGlyphs">15.08 kW</text><text x="1661.7" y="1059.4" class="bv" style="font-size:45.7px" textLength="156.0" lengthAdjust="spacingAndGlyphs">3.88 kW</text><text x="485.5" y="158.0" class="tt">Solar-Panel Produktion (Watt)</text><text x="1426.0" y="158.0" class="tt">Solar Panel Spannung (Volt)</text><text x="172.0" y="518.0" class="tt">Solar-Panel Produktion (Watt)</text><text x="642.5" y="518.0" class="tt">Batterie Spannung (Volt)</text><text x="1269.5" y="518.0" class="tt">Aktueller Verbrauch (IP-CAMs &amp; Licht in Watt)</text><text x="1739.5" y="518.0" class="tt">Aktueller Verbrauch (Ampere)</text><text x="172.0" y="758.0" class="tt">Batterie-Temperatur (Celsius)</text><text x="486.0" y="758.0" class="tt">Batterie-Ladung (Ampere)</text><text x="799.0" y="758.0" class="tt">Solar Produktion gesamt (Tag)</text><text x="1113.0" y="758.0" class="tt">Verbrauch gesamt (Tag)</text><text x="1426.5" y="758.0" class="tt">Batterie-Spannung (Volt)</text><text x="1739.5" y="758.0" class="tt">EPSOLAR-Temperatur (Celsius)</text><text x="172.0" y="998.0" class="tt" textLength="231.6" lengthAdjust="spacingAndGlyphs">Solar Produktion gesamt (Seit 11/2016)</text><text x="486.0" y="998.0" class="tt">Solar Produktion in diesem Jahr</text><text x="799.0" y="998.0" class="tt">Solar Produktion in diesem Monat</text><text x="1113.0" y="998.0" class="tt" textLength="227.7" lengthAdjust="spacingAndGlyphs">Solar Verbrauch gesamt (Seit 10/2016)</text><text x="1426.5" y="998.0" class="tt">Solar Verbrauch in diesem Jahr</text><text x="1739.5" y="998.0" class="tt">Solar Verbrauch in diesem Monat</text></svg>
<svg style="position:absolute;left:0;top:0" width="1920" height="120" viewBox="0 0 1920 120">
<defs>
<linearGradient id="lg1" x1="0" y1="0" x2="0" y2="1"><stop offset="0" stop-color="#f05a28"/><stop offset="1" stop-color="#fbca0a"/></linearGradient>
</defs>
<!-- grafana logo -->
<g>
<path fill="url(#lg1)" d="M29.4 11.0 L32.6 14.6 L37.9 14.2 L38.6 17.2 L41.2 20.6 L42.8 25.4 L39.8 28.0 L41.9 33.4 L37.4 35.8 L33.9 41.5 L29.4 38.9 L21.2 40.2 L20.0 35.6 L13.8 30.2 L17.2 25.8 L17.0 16.0 L22.0 16.2 Z"/>
<circle cx="31.3" cy="27.3" r="9.1" fill="#202124"/>
<path d="M27.56 29.09 A4.6 4.6 0 1 1 31.60 32.48" fill="none" stroke="#f47a24" stroke-width="2.7"/>
</g>
<!-- grid icon -->
<g fill="#b0b1b2">
<rect x="64" y="17" width="10" height="10" rx="2"/><rect x="75.3" y="17" width="10" height="10" rx="2"/>
<rect x="64" y="28.2" width="10" height="10" rx="2"/><rect x="75.3" y="28.2" width="10" height="10" rx="2"/>
</g>
<text x="98" y="32.3" fill="#d8d9da" style="font-size:17.5px;font-family:'Liberation Sans',sans-serif" textLength="191" lengthAdjust="spacingAndGlyphs">Perles Insel-Solaranlage</text>
<path d="M295.8 27 L303.5 27 L299.65 31.7 Z" fill="#d8d9da"/>
<!-- buttons -->
<g fill="#29292c" stroke="#303033" stroke-width="1">
<rect x="1224.5" y="12.5" width="38" height="31" rx="2"/>
<rect x="1266.5" y="12.5" width="38" height="31" rx="2"/>
<rect x="1322.5" y="12.5" width="19" height="31" rx="2"/>
<rect x="1345.5" y="12.5" width="38" height="31" rx="2"/>
<rect x="1387.5" y="12.5" width="19" height="31" rx="2"/>
<rect x="1424.5" y="12.5" width="423" height="31" rx="2"/>
<rect x="1851.5" y="12.5" width="37" height="31" rx="2"/>
</g>
<!-- star -->
<path d="M1243.70 19.90 L1245.46 24.87 L1250.74 25.01 L1246.55 28.23 L1248.05 33.29 L1243.70 30.30 L1239.35 33.29 L1240.85 28.23 L1236.66 25.01 L1241.94 24.87 Z" fill="none" stroke="#b7b8b9" stroke-width="1.3" stroke-linejoin="miter"/>
<!-- share -->
<path d="M1283.8 20.3 L1280 20.3 Q1278.9 20.3 1278.9 21.4 L1278.9 31.8 Q1278.9 32.9 1280 32.9 L1290.6 32.9 Q1291.7 32.9 1291.7 31.8 L1291.7 28.6" fill="none" stroke="#b7b8b9" stroke-width="1.8"/>
<path d="M1281.6 30.2 Q1281.6 22.2 1288.6 21.9 L1288.6 18.6 L1293.6 23.6 L1288.6 28.6 L1288.6 25.3 Q1284.2 25.1 1281.6 30.2 Z" fill="#b7b8b9"/>
<!-- chevrons -->
<path d="M1336 22.5 L1330.5 28.5 L1336 34.5" fill="none" stroke="#b7b8b9" stroke-width="2.6"/>
<path d="M1392.6 22.5 L1398.1 28.5 L1392.6 34.5" fill="none" stroke="#b7b8b9" stroke-width="2.6"/>
<!-- zoom out -->
<circle cx="1363.3" cy="26.3" r="5.6" fill="none" stroke="#b7b8b9" stroke-width="2.2"/>
<path d="M1367.3 30.3 L1371.5 34.5" stroke="#b7b8b9" stroke-width="2.6" stroke-linecap="round"/>
<path d="M1360.3 26.3 L1366.3 26.3" stroke="#b7b8b9" stroke-width="1.6"/>
<!-- clock -->
<circle cx="1442.5" cy="27.5" r="6.2" fill="none" stroke="#a9aaab" stroke-width="1.7"/>
<path d="M1442.5 23.4 L1442.5 28 L1439.6 28" fill="none" stroke="#a9aaab" stroke-width="1.6"/>
<text x="1453" y="33" fill="#c8c9ca" style="font-size:13px;font-family:'Liberation Sans',sans-serif" textLength="269" lengthAdjust="spacingAndGlyphs">Mai 7, 2020 00:53:22 to vor ein paar Sekunden</text>
<text x="1732" y="33" fill="#eb7b18" style="font-size:13px;font-weight:bold;font-family:'Liberation Sans',sans-serif" textLength="104" lengthAdjust="spacingAndGlyphs">Refresh every 10s</text>
<!-- refresh -->
<path d="M1864.3 26.2 A6.2 6.2 0 0 1 1875.4 24.2" fill="none" stroke="#b7b8b9" stroke-width="2.2"/>
<path d="M1877.2 20.6 L1877.2 26.2 L1871.6 26.2 Z" fill="#b7b8b9"/>
<path d="M1876.3 29.2 A6.2 6.2 0 0 1 1865.2 31.2" fill="none" stroke="#b7b8b9" stroke-width="2.2"/>
<path d="M1863.4 34.8 L1863.4 29.2 L1869 29.2 Z" fill="#b7b8b9"/>
<!-- date -->
<text x="906" y="75.2" fill="#d8d9da" style="font-size:19.5px;font-family:'Liberation Sans',sans-serif" textLength="100" lengthAdjust="spacingAndGlyphs">01-06-2020</text>
<text x="909.5" y="103.7" fill="#ececec" style="font-size:24.5px;font-family:'Liberation Sans',sans-serif" textLength="93.5" lengthAdjust="spacingAndGlyphs">00:53:37</text>
</svg>
<div style="position:absolute;left:1912px;top:90px;width:8px;height:643px;box-sizing:border-box;border:1px solid #000;background:linear-gradient(90deg,#4b4f66,#3e3f45)"></div>
</body></html>
